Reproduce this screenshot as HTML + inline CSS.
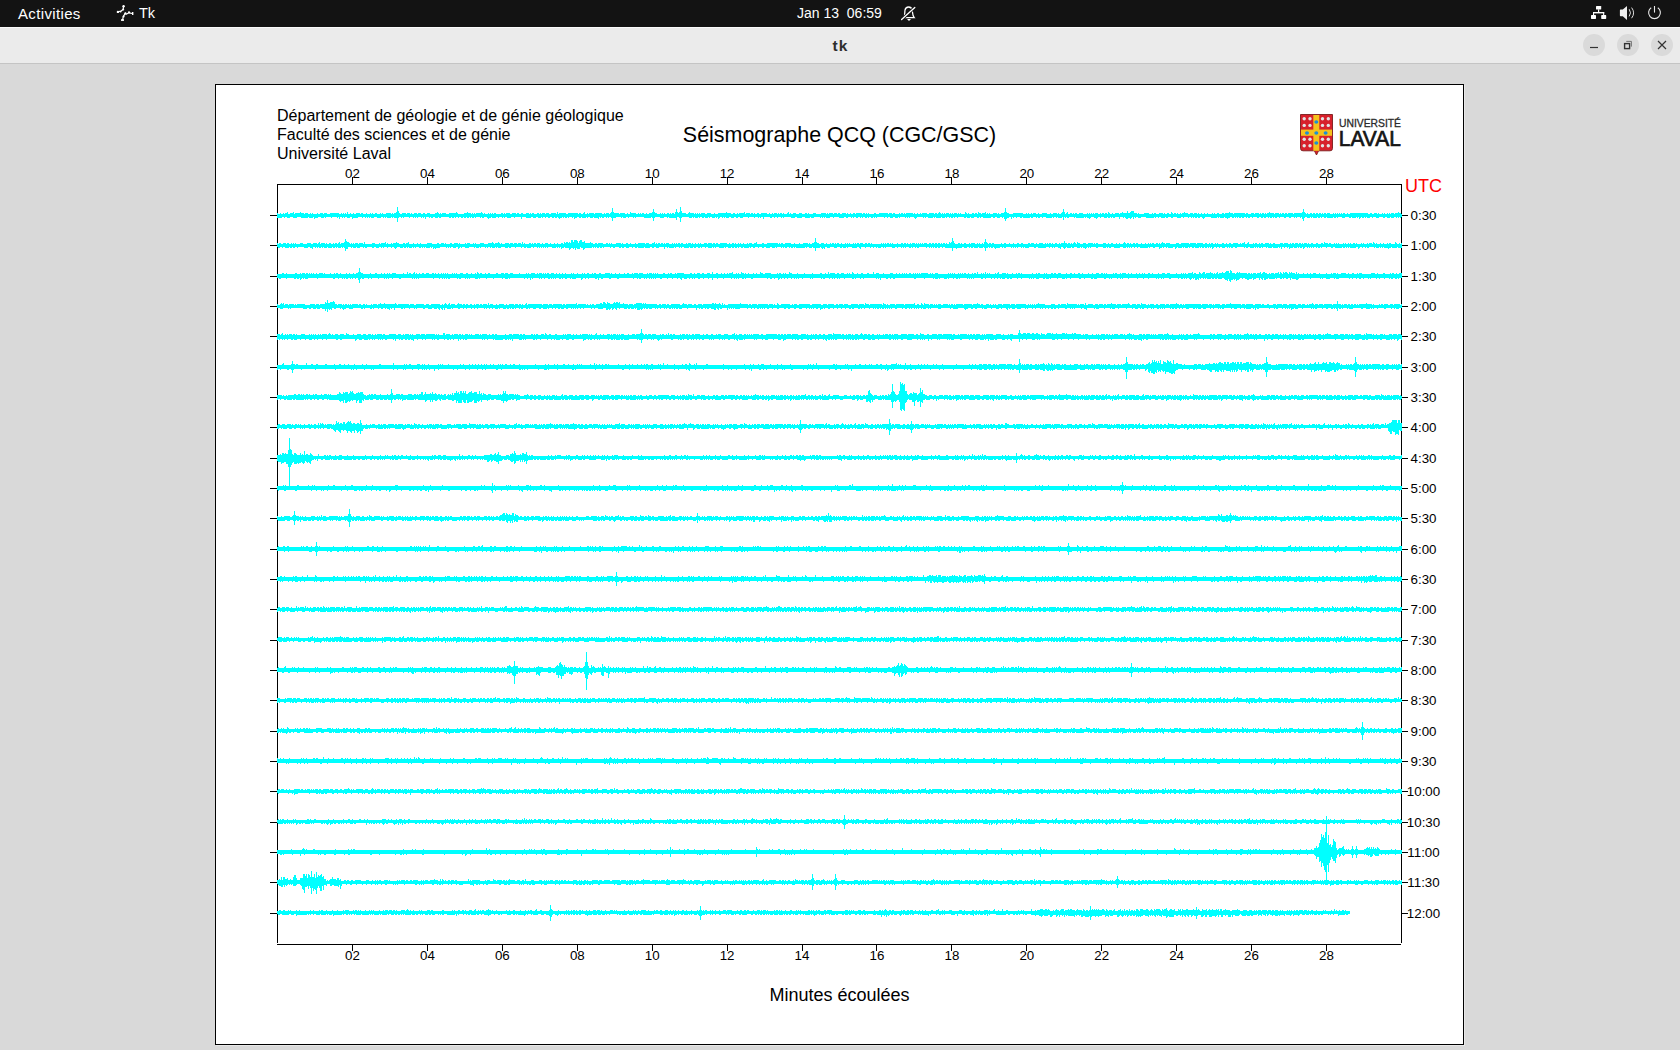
<!DOCTYPE html>
<html><head><meta charset="utf-8">
<style>
html,body{margin:0;padding:0}
body{width:1680px;height:1050px;background:#d9d9d9;overflow:hidden;position:relative;font-family:"Liberation Sans",sans-serif}
.abs{position:absolute}
#topbar{left:0;top:0;width:1680px;height:27px;background:#131313}
#hl{left:0;top:27px;width:1680px;height:1px;background:#fafafa}
#titlebar{left:0;top:28px;width:1680px;height:35px;background:#ebebeb}
#tline{left:0;top:63px;width:1680px;height:1px;background:#c4c4c4}
#tb-text{color:#fff;font-size:15px}
#canvas{left:215px;top:84px;width:1247px;height:959px;border:1px solid #000;background:#fff}
#shadow{left:216px;top:85px;width:1249px;height:961px;background:#e8e8e8}
.btn{width:22px;height:22px;border-radius:50%;background:#dadada;top:34px}
svg{position:absolute;left:0;top:0}
</style></head>
<body>
<div class="abs" id="topbar"></div>
<div class="abs" id="hl"></div>
<div class="abs" id="titlebar"></div>
<div class="abs" id="tline"></div>
<div class="abs" style="left:18px;top:5px;color:#fff;font-size:15px;letter-spacing:0.35px">Activities</div>
<div class="abs" style="left:139px;top:5px;color:#fff;font-size:14.5px">Tk</div>
<div class="abs" style="left:797px;top:5px;color:#fff;font-size:14px;letter-spacing:0px">Jan 13&nbsp;&nbsp;06:59</div>
<div class="abs" style="left:0;top:37px;width:1680px;text-align:center;color:#2e2e2e;font-size:15.5px;font-weight:bold;letter-spacing:1px;text-indent:1px">tk</div>
<div class="abs btn" style="left:1583px"></div>
<div class="abs btn" style="left:1617px"></div>
<div class="abs btn" style="left:1651px"></div>
<div class="abs" id="shadow"></div>
<div class="abs" id="canvas"></div>
<svg width="1680" height="1050" viewBox="0 0 1680 1050">
<!-- top bar icons -->
<g fill="none" stroke="#fff" stroke-width="1.3" stroke-linecap="round">
<path d="M904 17.6C905 15.5 904.6 12.5 905 10.2C905.4 8 906.8 7 908.6 7C910.4 7 911.8 8 912.2 10.2C912.6 12.5 912.4 15.5 914.2 17.6Z"/>
<path d="M901.6 19.6L914.8 7.4" stroke="#131313" stroke-width="3"/>
<path d="M901.6 19.6L914.8 7.4"/>
</g>
<path d="M907 19H911L909 21Z" fill="#fff"/>
<g fill="#fff">
<rect x="1596" y="6" width="5.2" height="3.6" rx="0.6"/>
<rect x="1591" y="15.1" width="5" height="3.8" rx="0.6"/>
<rect x="1601.2" y="15.1" width="5" height="3.8" rx="0.6"/>
<rect x="1598" y="9.4" width="1.2" height="3.6"/>
<rect x="1593" y="12" width="11.2" height="1.4"/>
<rect x="1593" y="12" width="1.1" height="3.2"/>
<rect x="1603.1" y="12" width="1.1" height="3.2"/>
<path d="M1620.5 9.6h2.3l4.2-3.6v13.9l-4.2-3.6h-2.3q-0.6 0-0.6-0.7v-5.3q0-0.7 0.6-0.7z" fill="#eee"/>
</g>
<g fill="none" stroke="#ddd" stroke-width="1">
<path d="M1629.2 9.2q2.6 3.6 0 7.2"/>
<path d="M1631.6 7.6q4 5.3 0 10.6"/>
</g>
<g fill="none" stroke="#e8e8e8" stroke-width="1.1">
<path d="M1651.2 7.8A5.9 5.9 0 1 0 1657.8 7.8"/>
<path d="M1654.5 6v6.6"/>
</g>
<g fill="none" stroke="#fff" stroke-width="1.2" stroke-linecap="round" stroke-linejoin="round">
<path d="M123.5 6L123.2 9.5L121 11L117.8 11.8"/>
<path d="M125.3 13.3L126.2 14.2L129 12.8L132.3 13.5"/>
<path d="M125.3 13.3L123.3 16.3L122.6 19.8"/>
</g>
<g fill="#fff">
<circle cx="123.6" cy="6.2" r="1.2"/><circle cx="123.2" cy="9.6" r="1"/><circle cx="117.9" cy="11.9" r="1.2"/><circle cx="120.6" cy="11.6" r="0.9"/>
<circle cx="129" cy="12.3" r="1.1"/><rect x="132" y="12" width="1.4" height="3"/><circle cx="125.4" cy="13.4" r="1.1"/><circle cx="123.6" cy="16.4" r="1"/>
<rect x="121" y="19.2" width="3" height="1.7"/>
</g>
<!-- window buttons -->
<g stroke="#333" fill="none" stroke-width="1.2">
<path d="M1590 47.5h8"/>
<rect x="1624.6" y="43.6" width="5" height="5" stroke-width="1.4"/>
<path d="M1626.3 41.4H1631.4V46.6" stroke="#666" stroke-width="0.9"/>
<path d="M1658 41l8 8M1666 41l-8 8"/>
</g>
<!-- logo -->
<g>
<path d="M1300.5 114.5H1332.5V148.5Q1332.5 150.8 1330 150.8H1318.6L1316.5 155L1314.4 150.8H1303Q1300.5 150.8 1300.5 148.5Z" fill="#d7202b" stroke="#7a1c1c" stroke-width="0.9"/>
<rect x="1313.3" y="115" width="6" height="35.8" fill="#f6c21c"/>
<rect x="1301" y="129.6" width="31" height="6.2" fill="#f6c21c"/>
<g fill="#1b8fd6"><ellipse cx="1316.3" cy="122" rx="2" ry="1.7"/><ellipse cx="1307" cy="133" rx="2" ry="1.7"/><ellipse cx="1316.3" cy="133" rx="2" ry="1.7"/><ellipse cx="1325.6" cy="133" rx="2" ry="1.7"/><ellipse cx="1316.3" cy="143" rx="2" ry="1.7"/></g>
<g fill="#e4e4e4">
<circle cx="1304.2" cy="118.7" r="1.7"/><circle cx="1310" cy="118.7" r="1.7"/><circle cx="1304.2" cy="125.4" r="1.7"/><circle cx="1310" cy="125.4" r="1.7"/>
<circle cx="1322.5" cy="118.7" r="1.7"/><circle cx="1328.3" cy="118.7" r="1.7"/><circle cx="1322.5" cy="125.4" r="1.7"/><circle cx="1328.3" cy="125.4" r="1.7"/>
<circle cx="1304.2" cy="139.2" r="1.7"/><circle cx="1310" cy="139.2" r="1.7"/><circle cx="1304.2" cy="145.8" r="1.7"/><circle cx="1310" cy="145.8" r="1.7"/>
<circle cx="1322.5" cy="139.2" r="1.7"/><circle cx="1328.3" cy="139.2" r="1.7"/><circle cx="1322.5" cy="145.8" r="1.7"/><circle cx="1328.3" cy="145.8" r="1.7"/>
</g>
<text x="1339" y="126.8" font-family="Liberation Sans" font-size="10.8" fill="#2a2a2a" stroke="#2a2a2a" stroke-width="0.3" textLength="62" lengthAdjust="spacingAndGlyphs">UNIVERSITÉ</text>
<text x="1338.8" y="145.8" font-family="Liberation Sans" font-size="22.5" fill="#151515" stroke="#151515" stroke-width="0.7" textLength="62" lengthAdjust="spacingAndGlyphs">LAVAL</text>
</g>
<g stroke="#000" stroke-width="1" fill="none" shape-rendering="crispEdges">
<path d="M277.5 184V943M1401.5 184V943M277 184.5H1402M277 944.5H1401"/>
<path d="M352.5 177V184M352.5 944V951M427.5 177V184M427.5 944V951M502.5 177V184M502.5 944V951M577.5 177V184M577.5 944V951M652.5 177V184M652.5 944V951M727.5 177V184M727.5 944V951M802.5 177V184M802.5 944V951M876.5 177V184M876.5 944V951M951.5 177V184M951.5 944V951M1026.5 177V184M1026.5 944V951M1101.5 177V184M1101.5 944V951M1176.5 177V184M1176.5 944V951M1251.5 177V184M1251.5 944V951M1326.5 177V184M1326.5 944V951M270 215.5H277M1401 215.5H1408M270 245.5H277M1401 245.5H1408M270 276.5H277M1401 276.5H1408M270 306.5H277M1401 306.5H1408M270 336.5H277M1401 336.5H1408M270 367.5H277M1401 367.5H1408M270 397.5H277M1401 397.5H1408M270 427.5H277M1401 427.5H1408M270 458.5H277M1401 458.5H1408M270 488.5H277M1401 488.5H1408M270 518.5H277M1401 518.5H1408M270 549.5H277M1401 549.5H1408M270 579.5H277M1401 579.5H1408M270 609.5H277M1401 609.5H1408M270 640.5H277M1401 640.5H1408M270 670.5H277M1401 670.5H1408M270 700.5H277M1401 700.5H1408M270 731.5H277M1401 731.5H1408M270 761.5H277M1401 761.5H1408M270 791.5H277M1401 791.5H1408M270 822.5H277M1401 822.5H1408M270 852.5H277M1401 852.5H1408M270 882.5H277M1401 882.5H1408M270 913.5H277M1401 913.5H1408"/>
</g>
<g fill="#00ffff" shape-rendering="crispEdges">
<path d="M277 213H278V214H280V213H281V214H283V213H284V214H285V213H287V212H288V214H290V213H293V212H294V214H295V213H300V212H301V213H304V214H305V213H308V214H310V213H311V214H312V213H313V214H317V213H318V214H320V213H323V214H324V213H327V214H330V213H339V214H341V213H342V214H343V213H344V214H345V213H346V214H347V212H348V214H350V213H351V214H353V213H354V214H356V213H360V214H361V213H363V214H366V213H367V214H370V213H371V214H372V213H373V214H375V213H377V214H380V213H381V214H382V213H383V214H386V213H391V214H392V213H393V214H394V213H396V212H397V207H398V211H399V213H400V214H402V213H406V214H407V213H410V214H411V213H412V214H414V213H417V214H418V213H421V214H423V213H425V214H427V213H430V214H435V213H437V212H438V213H439V214H440V213H441V214H442V213H446V214H449V213H456V212H457V213H458V214H464V213H467V212H468V213H471V214H472V213H473V214H474V213H475V214H476V213H481V212H482V213H483V214H484V213H485V214H488V213H489V214H490V213H491V214H492V213H493V214H494V213H496V214H501V213H503V214H504V213H505V214H506V213H510V214H512V213H516V214H517V213H519V214H521V213H523V214H526V213H529V214H530V213H531V214H532V213H534V214H537V213H539V214H540V213H541V214H542V213H545V214H546V213H549V214H551V213H556V214H557V212H558V214H559V213H566V214H568V213H578V214H579V213H581V214H583V213H584V212H585V214H587V213H588V214H589V213H594V214H595V213H602V214H604V213H605V214H606V213H609V214H610V213H611V212H612V208H613V212H614V213H619V214H620V213H625V214H627V213H628V214H630V212H631V213H636V214H638V213H639V214H640V213H641V214H642V213H644V214H646V213H647V214H649V213H652V212H653V209H654V212H655V213H657V214H660V213H661V214H662V213H663V214H664V213H665V214H667V213H669V214H670V213H671V214H672V213H674V214H675V212H676V209H677V212H678V213H679V212H680V207H681V211H682V213H686V214H688V213H689V212H690V213H694V214H695V213H696V214H697V213H698V214H699V213H700V214H701V213H705V214H707V213H711V214H714V213H715V214H718V213H726V212H727V213H731V214H733V213H735V214H737V213H738V214H739V213H744V212H745V214H746V213H750V214H751V213H753V214H754V213H755V214H757V213H759V214H761V213H767V214H769V213H770V214H772V213H773V214H774V213H777V214H778V213H779V214H780V213H782V214H783V213H784V214H787V213H788V212H789V214H790V213H791V214H793V213H796V214H799V213H802V214H805V213H807V214H808V213H809V214H813V213H816V214H821V213H826V214H827V213H828V214H829V213H833V214H834V213H837V214H838V213H840V214H842V213H846V214H847V213H848V214H850V213H851V214H853V213H855V214H856V213H862V214H863V213H865V214H866V213H867V214H868V213H869V214H874V213H876V214H879V213H888V214H889V213H892V214H893V213H895V214H899V213H900V214H901V213H903V214H904V213H905V214H906V213H913V214H914V213H915V214H917V213H918V214H920V213H921V214H922V213H927V214H929V213H934V214H935V213H937V214H938V213H939V212H940V213H941V214H942V213H943V214H944V213H945V214H946V213H949V214H950V213H951V214H952V213H953V214H954V213H957V214H958V213H959V214H960V213H961V214H965V212H966V213H967V214H968V213H969V214H972V213H974V214H975V213H977V214H978V212H979V213H981V214H982V213H985V212H986V214H987V213H988V214H989V213H990V214H993V213H997V214H998V213H999V214H1001V213H1004V212H1005V208H1006V212H1007V213H1009V214H1013V213H1023V214H1026V213H1027V214H1028V213H1029V214H1031V213H1032V214H1033V213H1036V214H1038V213H1039V214H1042V213H1047V214H1050V213H1051V214H1053V213H1057V214H1058V213H1059V214H1061V213H1062V212H1063V209H1064V212H1065V214H1066V213H1067V212H1068V214H1070V213H1072V214H1073V213H1074V214H1075V213H1077V214H1079V213H1083V214H1087V213H1088V214H1089V213H1090V214H1091V213H1092V214H1093V213H1094V214H1095V213H1098V214H1100V213H1101V214H1102V213H1104V214H1105V213H1107V214H1108V212H1109V213H1110V214H1112V213H1113V214H1115V213H1119V214H1120V213H1122V212H1123V213H1127V211H1128V213H1130V212H1131V211H1134V213H1137V214H1138V213H1139V214H1144V213H1149V214H1152V213H1153V214H1154V213H1156V214H1159V213H1163V214H1164V213H1165V214H1167V213H1169V214H1171V212H1172V213H1173V214H1174V213H1176V214H1177V213H1178V214H1180V213H1181V214H1182V213H1184V212H1185V213H1188V214H1190V213H1193V214H1194V213H1197V214H1198V213H1199V214H1201V213H1202V214H1204V213H1205V214H1207V213H1208V214H1212V213H1213V214H1214V213H1215V214H1217V213H1219V214H1222V213H1224V214H1225V213H1229V212H1230V213H1233V214H1234V213H1245V214H1246V213H1248V214H1251V213H1254V214H1255V213H1259V214H1260V213H1261V214H1262V213H1264V214H1265V213H1266V214H1267V213H1269V212H1270V213H1274V214H1275V213H1279V214H1280V213H1281V214H1282V213H1284V214H1285V213H1287V214H1288V213H1293V214H1294V213H1302V212H1303V209H1304V212H1305V213H1306V214H1307V213H1308V214H1310V213H1312V214H1313V213H1315V214H1316V213H1318V214H1319V213H1321V214H1322V213H1323V214H1324V213H1326V214H1327V213H1330V214H1333V213H1334V214H1335V213H1336V214H1337V213H1338V214H1339V213H1340V214H1341V213H1342V214H1343V213H1345V214H1347V213H1348V214H1350V213H1368V214H1370V213H1372V214H1374V213H1377V214H1378V213H1379V214H1382V213H1383V214H1384V213H1385V214H1387V213H1388V214H1389V213H1390V214H1391V213H1394V214H1395V213H1398V212H1399V213H1401V214H1402V217H1401V218H1400V217H1399V218H1398V217H1397V218H1396V217H1394V218H1391V217H1390V218H1387V217H1385V218H1383V217H1379V218H1376V217H1373V218H1372V217H1370V218H1367V217H1366V218H1365V217H1364V218H1362V217H1361V218H1360V219H1359V217H1358V218H1357V217H1356V218H1352V217H1351V218H1349V217H1345V218H1342V217H1338V218H1337V217H1336V218H1334V217H1333V218H1327V217H1326V218H1324V217H1322V218H1321V217H1320V218H1318V217H1317V218H1313V217H1312V218H1311V217H1310V218H1307V217H1305V218H1304V221H1303V219H1302V217H1301V218H1300V217H1297V218H1296V217H1295V218H1294V217H1291V218H1289V217H1286V218H1284V217H1280V218H1279V217H1277V218H1275V217H1274V218H1273V217H1272V218H1270V217H1269V218H1268V217H1266V218H1264V217H1263V218H1261V217H1259V218H1257V217H1253V218H1252V217H1250V218H1248V217H1247V218H1246V217H1244V218H1242V217H1241V218H1239V217H1238V218H1237V217H1236V218H1235V217H1234V218H1232V217H1230V218H1228V219H1227V218H1225V217H1224V218H1220V217H1219V218H1218V217H1217V218H1211V217H1205V218H1204V219H1203V218H1202V217H1200V218H1198V217H1197V218H1195V217H1194V218H1193V217H1192V218H1191V217H1189V218H1188V217H1184V218H1183V217H1181V218H1177V217H1173V218H1171V217H1168V218H1166V217H1165V218H1161V217H1159V218H1158V217H1156V218H1155V217H1154V218H1146V217H1141V218H1138V217H1136V218H1135V217H1134V219H1133V217H1132V218H1131V219H1130V218H1128V219H1126V218H1125V217H1124V218H1123V217H1120V219H1119V217H1115V218H1113V217H1112V218H1111V217H1110V218H1108V217H1107V218H1104V217H1101V218H1100V217H1098V218H1097V219H1096V218H1094V217H1091V218H1090V219H1089V218H1087V217H1086V218H1085V217H1084V218H1076V217H1075V218H1074V217H1069V218H1067V217H1066V218H1065V217H1064V220H1063V217H1062V218H1058V217H1057V218H1056V217H1054V218H1053V217H1052V218H1046V217H1043V218H1042V217H1040V218H1038V217H1037V218H1036V217H1033V218H1031V217H1030V218H1023V217H1022V218H1020V217H1017V218H1016V217H1014V218H1013V217H1012V219H1011V217H1009V218H1007V219H1006V221H1005V219H1004V217H1003V218H1002V217H1000V218H997V217H995V218H993V217H991V218H983V217H981V218H980V217H979V218H977V217H974V218H971V217H970V218H967V217H966V218H964V217H958V218H957V217H955V218H954V217H953V218H951V217H950V218H949V217H947V218H946V217H945V218H942V217H941V218H936V217H935V218H934V217H933V218H928V217H926V218H925V217H924V218H923V217H917V218H916V219H915V218H914V217H910V218H909V217H908V218H907V217H906V218H905V217H900V218H899V217H898V218H895V217H893V218H890V217H888V218H887V217H885V218H884V217H877V218H876V217H875V218H874V217H873V218H871V217H869V218H868V217H867V218H865V217H863V218H862V217H861V218H860V217H858V218H856V217H854V218H853V217H852V218H851V217H848V218H846V217H844V218H839V217H834V218H833V217H830V218H826V217H825V218H824V217H823V218H822V217H821V218H820V217H814V218H811V217H810V218H805V217H802V218H797V217H795V218H791V217H784V218H783V217H782V218H781V217H778V218H777V217H775V218H774V217H772V218H770V217H764V219H763V217H761V218H760V217H759V218H758V217H755V218H754V217H749V218H748V217H743V218H740V217H738V218H736V217H734V218H731V217H729V218H726V217H725V218H724V217H723V218H722V217H720V218H719V219H718V217H717V218H716V217H715V218H712V217H710V218H709V217H708V218H705V217H704V218H702V217H700V218H699V217H698V218H695V217H694V218H693V217H692V218H689V217H682V218H681V222H680V218H679V217H677V220H676V218H669V217H668V218H667V217H664V218H660V217H655V218H654V221H653V218H652V217H651V218H644V217H636V218H635V217H634V218H633V217H629V218H628V217H626V218H623V217H622V218H621V217H616V218H613V221H612V218H611V217H609V218H608V217H607V218H606V217H604V218H602V217H601V218H600V217H599V219H598V218H594V217H593V218H590V217H588V218H587V217H586V218H582V217H581V218H579V217H577V218H575V219H574V217H573V218H572V217H569V218H568V217H567V218H565V217H564V218H563V217H562V218H560V219H559V218H558V217H557V218H555V217H554V218H552V217H550V218H548V217H546V218H545V217H543V218H542V217H541V218H538V217H536V218H533V217H531V218H526V217H522V219H521V217H515V218H514V217H511V218H507V217H505V218H504V217H503V218H502V217H499V218H498V217H496V218H492V217H491V218H489V219H488V218H487V217H484V218H482V217H481V218H480V217H476V218H475V217H474V218H472V217H471V218H470V217H469V218H467V217H466V218H464V217H463V218H461V217H459V218H458V217H456V218H455V217H454V218H452V217H451V218H449V217H441V218H439V217H438V218H435V217H433V218H431V217H430V218H429V217H426V219H425V217H424V218H423V217H422V218H421V217H418V218H417V217H416V218H415V217H414V218H413V217H410V218H409V217H404V218H403V217H402V218H401V217H399V218H398V222H397V218H394V217H393V218H392V217H391V218H387V217H386V218H385V217H384V218H383V217H381V218H377V217H374V218H371V217H370V218H369V217H368V218H367V217H366V218H365V217H363V218H362V217H358V218H353V219H352V217H350V218H347V217H345V218H344V217H343V218H342V217H340V219H339V217H338V218H337V217H332V218H331V217H326V218H325V217H324V218H321V217H318V218H315V219H314V217H313V218H309V217H308V218H301V217H297V218H293V217H290V218H287V217H285V218H284V217H282V218H277Z"/>
<path d="M277 243H278V244H279V243H281V244H283V243H286V244H287V243H289V244H291V243H292V244H293V243H294V244H295V243H296V244H300V243H303V244H307V243H311V244H313V243H317V244H318V243H319V242H320V244H321V243H325V244H326V243H327V244H329V243H331V244H333V243H334V244H335V243H337V244H338V243H339V242H340V244H341V243H344V242H345V239H346V241H347V242H349V243H350V244H351V243H352V244H353V243H354V244H355V243H358V244H359V243H363V244H364V242H365V244H372V243H375V244H379V243H380V244H381V243H385V242H386V244H387V243H388V244H391V243H392V244H393V243H396V242H397V243H399V244H403V243H405V244H406V243H408V242H409V244H413V243H414V244H417V243H418V244H420V243H421V244H427V243H432V244H437V243H439V244H441V243H444V244H445V243H446V244H450V243H452V244H454V243H458V244H459V243H460V244H465V243H466V244H467V243H470V244H473V243H474V244H475V243H476V244H480V243H484V244H488V243H492V242H493V243H494V244H495V243H498V242H499V243H500V244H501V243H502V244H505V243H509V244H510V243H513V244H514V243H517V244H518V243H521V244H522V242H523V244H524V243H525V244H529V243H531V244H532V243H533V244H534V243H536V244H537V243H540V244H542V243H543V244H545V243H548V244H550V243H551V244H554V243H555V244H557V243H558V244H561V243H563V244H564V242H565V243H566V242H568V243H569V242H570V243H571V240H573V242H574V240H577V241H578V243H579V241H580V240H582V242H584V241H585V243H590V242H591V243H593V244H595V243H597V244H598V243H603V244H606V243H608V244H609V243H610V244H611V243H612V244H616V243H621V244H622V243H623V244H626V243H628V244H630V243H631V244H635V243H636V244H638V243H645V244H646V243H649V244H652V243H654V242H655V244H656V243H657V244H658V243H660V244H661V243H663V244H664V243H665V244H666V243H669V244H672V243H673V244H674V243H675V244H676V243H677V244H678V243H680V244H681V243H683V244H686V243H687V244H688V243H691V244H692V243H693V244H695V243H696V244H698V243H699V244H700V243H701V244H704V243H707V244H708V243H712V244H713V243H715V244H716V243H718V244H720V243H727V244H729V243H730V244H732V243H734V244H735V243H736V244H738V243H739V244H740V243H741V244H743V243H744V244H747V243H748V244H749V243H752V244H754V243H756V242H757V244H762V243H764V244H767V243H778V244H779V243H780V244H781V243H783V244H785V243H791V244H794V243H795V244H799V243H800V244H803V243H808V244H809V243H810V244H812V243H814V242H815V238H816V242H817V243H819V244H821V243H824V244H826V243H827V244H830V243H831V244H832V243H834V244H835V243H836V244H837V243H839V244H841V243H842V244H845V243H846V244H847V243H848V244H849V243H850V244H853V243H854V244H855V243H856V244H857V243H859V244H860V243H863V244H865V243H867V244H868V243H870V244H871V243H872V244H881V243H882V244H883V243H884V244H885V243H886V244H887V243H889V244H890V243H891V244H892V243H893V244H897V243H898V244H901V243H903V244H904V243H906V244H907V243H908V244H910V243H911V244H912V243H915V244H916V243H917V244H918V243H919V244H920V243H921V244H922V243H923V244H924V243H927V244H929V243H931V244H932V243H934V244H935V243H937V244H938V243H940V244H941V243H942V244H943V243H945V244H946V243H947V244H949V242H950V243H951V242H952V238H953V241H954V243H955V244H958V243H960V244H961V243H962V244H964V243H966V244H969V243H970V244H971V243H975V244H977V243H978V244H979V243H980V244H982V243H983V244H984V242H985V239H986V242H987V243H988V244H989V243H991V244H992V243H994V244H1001V243H1002V244H1004V243H1006V244H1009V243H1010V244H1013V243H1014V244H1017V243H1019V244H1021V243H1023V244H1028V243H1030V244H1031V243H1034V244H1036V243H1037V244H1039V243H1043V244H1045V243H1046V244H1047V243H1048V244H1049V243H1051V244H1052V243H1053V244H1055V243H1057V244H1059V243H1060V244H1061V243H1064V241H1065V243H1067V244H1068V243H1070V244H1071V243H1072V244H1073V243H1074V242H1075V243H1076V244H1077V242H1078V243H1080V244H1083V243H1086V244H1088V243H1093V244H1094V243H1095V244H1096V243H1098V244H1103V243H1106V244H1108V243H1109V244H1111V243H1113V244H1116V243H1117V244H1119V243H1120V244H1123V243H1124V242H1125V243H1126V244H1127V243H1129V244H1130V243H1131V244H1133V243H1135V244H1136V243H1138V244H1141V243H1142V244H1145V243H1146V244H1148V243H1149V244H1150V243H1151V244H1152V243H1154V244H1156V243H1158V244H1159V243H1160V244H1161V243H1162V242H1163V243H1165V244H1166V243H1170V244H1176V243H1179V244H1181V243H1189V244H1190V243H1196V244H1197V243H1203V244H1205V243H1207V244H1209V243H1210V244H1211V243H1213V244H1215V243H1216V244H1217V243H1218V244H1222V243H1224V244H1226V243H1227V244H1229V243H1231V244H1233V243H1238V244H1240V243H1241V244H1242V243H1244V242H1245V244H1247V243H1248V242H1249V244H1253V243H1254V244H1255V243H1257V244H1259V243H1260V244H1261V243H1263V244H1265V243H1269V244H1270V243H1271V244H1273V243H1275V244H1280V243H1283V244H1284V243H1288V244H1290V243H1291V244H1292V243H1294V244H1295V243H1298V244H1299V243H1301V244H1302V243H1303V244H1304V243H1307V244H1308V243H1309V244H1311V243H1313V244H1316V243H1318V244H1321V243H1323V244H1324V242H1325V243H1328V244H1329V243H1331V244H1334V243H1335V244H1336V243H1337V244H1338V243H1339V244H1343V243H1344V244H1345V243H1346V244H1348V243H1349V244H1350V243H1351V244H1353V243H1355V244H1356V243H1357V244H1361V243H1362V244H1363V243H1364V244H1367V243H1368V244H1369V243H1372V244H1373V242H1374V243H1375V244H1376V243H1377V244H1380V243H1381V244H1383V243H1384V244H1387V243H1388V244H1389V243H1391V244H1395V242H1396V243H1397V244H1399V243H1400V244H1401V243H1402V248H1398V247H1397V248H1392V247H1391V248H1389V249H1388V248H1384V247H1383V248H1382V247H1381V248H1380V247H1379V248H1376V247H1375V248H1374V247H1369V248H1367V247H1366V248H1365V247H1363V248H1362V247H1360V248H1359V249H1358V247H1356V248H1350V247H1349V248H1348V247H1347V248H1346V247H1345V248H1343V247H1342V248H1335V247H1333V248H1331V247H1327V248H1326V247H1322V248H1321V247H1320V248H1318V247H1317V248H1316V247H1314V248H1313V247H1312V248H1311V247H1310V248H1309V247H1308V248H1307V247H1305V248H1304V249H1303V247H1302V248H1300V247H1299V248H1298V247H1297V248H1294V247H1293V248H1290V249H1289V247H1288V248H1287V247H1285V248H1284V247H1282V249H1281V247H1280V248H1279V247H1278V248H1273V247H1272V248H1268V247H1267V248H1266V247H1263V248H1262V247H1261V248H1259V247H1258V248H1257V247H1256V248H1255V247H1254V248H1250V247H1248V248H1246V247H1245V248H1244V247H1237V248H1235V247H1233V248H1231V247H1230V248H1229V247H1228V248H1227V247H1225V248H1222V247H1220V248H1219V247H1217V248H1216V247H1214V248H1213V249H1212V247H1211V248H1210V247H1209V248H1208V247H1207V248H1205V247H1204V248H1202V247H1201V248H1200V247H1199V248H1195V247H1194V248H1192V247H1190V248H1189V247H1188V248H1185V247H1184V248H1183V247H1182V248H1178V247H1177V248H1176V249H1175V247H1173V248H1168V247H1167V248H1166V247H1164V248H1163V247H1162V248H1160V249H1159V247H1155V248H1153V247H1150V248H1149V247H1148V248H1140V247H1138V248H1137V247H1135V248H1134V247H1132V248H1131V247H1130V248H1129V247H1128V248H1127V247H1126V248H1123V247H1120V248H1114V247H1111V248H1109V247H1108V248H1107V247H1106V248H1103V247H1098V248H1096V247H1091V248H1090V247H1089V248H1088V247H1087V248H1086V249H1085V248H1083V247H1082V248H1081V247H1080V248H1077V247H1074V248H1072V247H1071V248H1067V247H1066V248H1065V249H1064V248H1063V247H1061V249H1060V248H1058V247H1055V248H1054V247H1053V248H1052V247H1050V248H1049V247H1046V248H1038V247H1036V248H1034V247H1029V248H1025V247H1024V248H1023V247H1022V248H1021V247H1018V248H1017V247H1016V248H1015V247H1014V248H1013V247H1012V248H1011V247H1006V248H1004V247H1003V248H1002V247H1000V248H996V249H995V248H994V247H993V248H991V247H990V248H989V247H988V248H986V251H985V248H984V247H983V248H979V247H978V248H974V247H973V248H971V247H970V248H969V247H967V248H964V247H962V248H957V249H956V248H953V251H952V248H945V247H943V248H942V247H940V248H938V247H937V248H935V247H934V248H933V247H932V248H931V247H930V248H929V247H927V248H926V247H919V248H917V247H916V248H915V247H913V248H912V247H911V248H909V247H906V248H905V247H904V248H903V247H902V248H901V247H898V248H897V247H895V248H892V247H886V248H885V247H884V248H883V247H881V248H878V247H877V248H876V247H874V248H873V247H871V248H870V247H866V248H865V247H861V249H860V248H859V247H857V248H852V247H848V248H847V247H846V248H843V247H842V248H840V247H837V248H834V247H830V248H827V247H825V249H824V248H823V249H822V248H821V247H820V248H816V251H815V248H813V247H812V248H809V247H807V248H806V247H805V248H796V247H795V248H794V247H793V248H791V247H790V248H789V247H787V248H785V247H784V248H783V247H782V248H781V247H777V248H776V247H775V248H772V247H770V248H766V247H764V248H762V247H759V248H758V247H755V248H753V247H751V248H750V247H749V248H744V247H743V248H741V247H739V248H738V247H737V248H735V247H734V248H732V247H731V248H728V247H726V248H725V247H724V248H719V247H716V248H715V247H714V248H713V247H712V248H708V247H706V248H705V247H702V248H701V247H700V248H698V247H696V248H694V247H693V248H690V247H689V248H684V247H682V248H681V247H680V248H679V247H676V248H675V247H674V248H669V247H668V248H667V247H665V249H664V247H659V248H656V247H654V248H652V247H650V248H645V247H644V248H638V247H637V248H635V247H633V248H632V247H629V248H626V247H624V248H622V247H621V248H619V247H615V248H613V247H611V248H610V247H604V248H603V247H602V248H600V247H599V248H597V247H596V248H595V247H594V248H593V247H592V248H585V249H584V250H583V248H581V247H580V249H577V248H576V250H575V248H574V249H573V248H571V249H570V250H569V248H565V247H564V248H562V249H561V247H560V248H559V247H558V248H557V247H556V248H552V247H548V248H547V247H546V248H545V247H544V248H543V247H542V248H541V247H540V248H539V247H538V248H537V247H534V248H533V247H531V248H527V247H526V248H524V247H522V248H521V247H516V248H515V247H511V248H509V247H508V248H505V247H501V248H498V247H497V248H496V247H495V248H492V247H491V248H490V247H488V248H487V247H486V248H485V247H481V248H480V247H479V248H476V247H475V248H474V247H469V248H465V247H462V248H461V247H460V248H459V249H458V247H456V248H453V247H451V248H450V247H449V248H448V247H447V248H446V247H440V248H436V249H435V248H434V249H433V247H432V248H431V247H430V248H426V247H425V248H424V247H423V248H422V247H421V248H419V247H416V248H415V247H414V248H413V247H412V248H409V247H408V248H407V247H406V248H404V247H403V248H400V247H397V248H396V249H395V248H394V247H392V248H391V247H388V248H387V247H384V248H383V247H382V248H381V247H379V248H376V247H374V248H372V247H367V248H365V247H364V248H363V247H360V248H357V247H356V248H353V247H352V248H351V247H348V249H346V251H345V248H344V247H343V248H342V247H341V248H338V247H337V248H336V247H335V248H333V247H332V248H328V247H327V248H324V247H323V248H322V247H321V248H319V247H318V248H317V247H316V248H315V247H313V249H312V248H310V247H308V248H304V247H298V248H297V247H295V248H293V247H292V248H290V247H289V248H285V247H283V248H282V247H280V248H278V247H277Z"/>
<path d="M277 274H282V273H284V274H286V273H287V274H295V273H297V274H300V273H301V274H302V273H305V274H306V273H308V274H309V273H310V274H311V273H312V274H313V273H314V274H316V273H317V274H319V273H323V274H324V273H325V274H330V273H331V274H334V273H335V274H336V273H338V274H340V273H341V274H346V273H347V274H349V273H350V274H353V273H354V274H356V273H358V272H359V268H360V272H361V273H363V274H370V273H371V274H375V273H377V274H381V273H382V274H384V273H385V274H387V273H388V274H389V273H390V274H392V273H396V274H403V273H404V274H407V272H408V274H409V273H411V274H413V273H414V272H415V274H416V273H417V274H419V273H420V274H422V273H424V274H426V273H429V274H432V273H434V274H435V273H436V274H438V273H439V274H441V273H442V274H443V273H444V274H445V273H446V274H447V273H448V274H452V273H453V274H454V273H455V274H456V273H457V274H460V273H463V274H466V273H468V274H471V273H472V274H475V273H476V274H477V272H478V273H479V274H480V273H482V274H485V273H486V274H488V273H490V274H496V273H498V274H501V273H504V274H505V273H508V274H510V273H513V274H519V273H520V274H526V273H527V274H528V273H529V274H531V273H535V274H537V273H538V274H539V273H542V274H543V273H544V274H545V273H546V274H547V273H549V274H551V273H554V274H556V273H557V274H559V273H560V274H562V273H563V274H565V273H566V274H571V273H572V274H573V273H574V274H577V273H578V274H582V273H583V274H584V273H585V274H587V273H589V274H592V273H593V274H594V273H596V274H599V273H601V274H605V273H610V274H611V273H612V274H615V273H616V274H619V273H620V274H624V273H625V274H627V273H629V274H632V273H633V274H634V273H638V274H639V273H643V274H647V273H648V274H649V273H652V274H653V273H654V274H655V273H656V274H657V273H658V274H663V273H665V274H668V273H669V274H670V273H672V274H675V273H676V274H677V273H684V274H690V273H692V274H694V273H695V274H697V273H700V274H702V273H704V274H707V273H710V274H712V272H713V274H716V273H718V274H721V273H722V274H724V273H725V274H727V273H728V274H729V273H732V272H733V274H736V273H737V274H738V273H739V274H741V272H742V273H744V274H745V273H746V274H748V273H749V274H753V273H754V274H756V273H757V274H760V272H761V273H763V274H765V273H771V274H777V273H778V274H779V273H781V274H783V273H784V274H785V273H786V274H789V272H790V273H792V274H797V273H798V274H804V273H805V274H812V273H813V274H820V273H822V274H825V273H826V274H828V272H829V274H830V273H835V274H837V273H839V274H841V273H844V274H847V273H848V274H849V273H850V274H852V272H853V273H854V274H857V273H858V274H861V273H863V274H867V273H869V274H873V272H874V274H876V273H879V274H883V273H884V274H890V273H893V274H896V273H897V274H899V273H900V274H902V273H903V274H904V273H905V274H906V273H907V274H909V273H911V274H913V273H914V274H915V273H916V274H917V273H918V274H919V273H920V274H921V273H928V274H930V273H931V274H932V273H933V274H935V273H938V274H948V273H949V274H950V273H951V274H952V273H953V274H954V273H955V274H958V273H959V274H960V273H961V274H962V273H963V274H964V273H966V274H968V273H969V274H972V273H973V274H974V273H976V274H977V272H978V274H981V273H982V274H983V273H984V274H985V272H986V274H987V273H988V274H989V273H990V274H995V273H996V274H997V273H998V272H999V274H1002V273H1006V274H1007V273H1008V274H1012V273H1013V274H1016V273H1017V274H1018V273H1020V274H1021V273H1022V274H1032V273H1033V274H1036V273H1037V274H1038V273H1040V274H1044V273H1045V274H1046V273H1047V274H1051V273H1053V274H1054V273H1056V274H1058V273H1061V274H1066V273H1067V274H1070V273H1072V274H1074V273H1075V274H1078V273H1080V274H1082V273H1083V274H1088V273H1089V274H1092V273H1093V274H1096V273H1099V274H1101V273H1103V274H1104V273H1105V274H1106V273H1107V274H1113V273H1114V274H1115V273H1117V274H1120V273H1121V274H1122V273H1126V274H1128V273H1129V274H1131V273H1132V274H1136V273H1137V274H1139V273H1140V274H1142V273H1143V274H1144V273H1145V274H1148V273H1150V274H1152V273H1153V274H1158V273H1159V274H1162V273H1165V274H1167V273H1170V274H1176V273H1177V274H1181V273H1182V274H1183V273H1184V274H1185V273H1186V274H1188V273H1192V272H1193V274H1194V273H1196V274H1199V272H1200V273H1201V274H1202V273H1203V272H1205V274H1206V273H1210V272H1211V273H1213V274H1214V273H1215V274H1216V273H1217V272H1218V274H1219V273H1222V272H1223V273H1225V272H1226V271H1229V273H1230V270H1231V271H1232V273H1235V274H1236V273H1237V272H1238V273H1239V272H1240V273H1247V274H1248V273H1250V274H1251V273H1252V274H1253V273H1256V274H1257V273H1260V272H1261V274H1262V273H1263V272H1265V273H1267V274H1269V273H1270V274H1271V273H1274V274H1275V273H1278V272H1279V274H1280V272H1281V273H1282V274H1283V272H1284V273H1285V272H1287V273H1288V274H1289V272H1290V273H1291V272H1292V273H1295V274H1296V272H1297V274H1298V273H1299V274H1303V273H1304V274H1307V273H1308V274H1310V273H1311V274H1313V273H1316V274H1319V273H1320V274H1326V273H1327V274H1331V273H1332V274H1333V273H1336V274H1337V273H1338V274H1341V273H1346V274H1348V273H1349V274H1352V273H1354V274H1357V273H1358V274H1359V273H1362V274H1371V273H1375V274H1377V273H1378V274H1383V273H1385V274H1390V273H1391V274H1392V273H1394V274H1396V273H1397V274H1399V273H1402V278H1399V279H1398V278H1397V279H1395V278H1393V279H1391V278H1390V279H1389V278H1385V279H1384V278H1380V279H1379V278H1377V279H1376V278H1371V279H1370V278H1369V279H1368V278H1364V279H1363V278H1361V279H1359V278H1357V279H1356V278H1353V279H1352V278H1350V279H1349V278H1339V279H1336V278H1335V279H1334V278H1330V279H1326V278H1323V279H1322V278H1321V279H1320V278H1311V279H1310V278H1299V279H1298V280H1296V279H1292V278H1291V280H1290V278H1288V279H1286V278H1284V279H1283V278H1282V279H1280V278H1277V279H1276V278H1275V279H1269V278H1268V279H1266V280H1264V278H1263V280H1262V279H1261V278H1260V280H1259V278H1256V279H1254V280H1253V278H1252V279H1249V280H1247V279H1245V278H1243V279H1242V278H1240V279H1239V280H1237V281H1236V279H1235V280H1234V279H1233V280H1231V282H1230V281H1229V279H1228V281H1227V280H1225V279H1224V278H1222V279H1218V278H1217V279H1215V278H1214V279H1212V278H1211V279H1207V278H1206V279H1205V278H1204V279H1203V278H1201V279H1200V278H1199V280H1198V279H1197V280H1195V278H1194V279H1193V278H1192V279H1191V280H1190V279H1189V278H1187V279H1186V278H1185V279H1184V278H1183V279H1181V278H1179V279H1178V278H1171V279H1169V278H1164V279H1163V278H1162V279H1161V278H1159V279H1158V278H1157V279H1156V278H1149V279H1148V278H1144V279H1143V278H1138V279H1137V278H1129V279H1128V278H1123V279H1122V278H1121V279H1120V278H1118V279H1117V278H1112V279H1111V278H1110V279H1109V278H1106V279H1104V278H1097V279H1094V278H1093V279H1091V278H1085V279H1084V278H1081V279H1079V278H1071V279H1070V278H1067V279H1066V278H1065V279H1062V278H1058V279H1057V278H1051V279H1050V278H1049V279H1046V278H1045V279H1043V278H1039V279H1036V278H1034V279H1033V278H1032V279H1031V278H1030V279H1029V278H1022V279H1021V278H1018V279H1017V278H1012V279H1010V278H1009V279H1007V278H1005V279H1002V278H1001V279H1000V278H998V279H997V278H995V279H994V278H992V279H991V278H986V279H985V278H983V279H981V278H974V279H973V278H972V279H971V278H970V279H969V278H968V279H967V278H960V279H959V278H958V279H956V278H954V279H953V278H949V279H948V278H947V279H944V278H940V279H939V278H938V279H935V278H934V279H933V278H925V279H924V278H916V279H914V278H895V279H893V278H891V279H890V278H888V279H886V278H881V280H880V278H879V279H878V278H877V279H876V278H864V279H863V278H861V279H860V278H856V279H855V278H854V279H852V278H845V279H844V278H840V279H839V278H838V279H837V278H835V279H834V278H833V279H832V278H830V279H829V278H825V279H823V278H822V279H821V278H813V279H812V278H811V279H810V278H803V279H802V278H799V279H798V278H797V279H796V278H795V279H794V278H792V279H791V278H788V279H787V278H785V279H784V278H782V279H781V278H780V279H779V280H778V278H775V279H774V278H772V279H770V278H768V279H767V278H753V279H751V278H746V279H745V278H744V279H742V278H739V279H738V278H737V279H736V278H735V279H734V278H732V279H731V278H724V279H723V278H718V279H717V278H713V280H712V278H709V279H708V278H704V279H703V278H700V279H698V278H695V279H694V278H693V279H692V278H690V279H689V278H687V279H684V278H682V280H681V279H680V278H678V279H677V278H673V279H672V278H668V279H667V278H662V279H660V278H656V279H655V278H654V279H653V278H652V279H651V278H650V279H649V278H647V279H646V278H645V279H644V278H641V279H639V278H638V279H637V278H634V279H633V278H619V279H617V278H611V279H609V278H603V279H601V278H599V280H598V278H597V279H595V278H589V279H588V278H586V279H585V278H583V279H582V280H581V278H576V279H572V278H571V279H570V278H567V279H565V278H563V279H562V278H561V279H559V278H556V279H555V278H554V279H553V278H552V279H551V278H550V279H548V278H545V279H544V278H542V279H541V278H540V279H539V278H533V279H532V278H531V280H530V278H528V279H527V278H525V279H524V278H510V279H509V278H508V279H505V278H503V279H502V278H494V279H493V278H487V279H486V278H480V279H479V278H478V279H475V278H470V279H469V278H468V279H467V278H466V279H465V278H461V279H459V278H458V279H457V278H450V279H448V278H447V279H446V278H445V279H444V278H443V279H442V278H440V279H439V278H434V279H433V278H419V279H418V278H417V279H416V278H415V279H414V278H413V279H412V278H401V279H399V278H393V279H392V278H389V279H388V278H387V279H386V278H385V279H384V278H379V279H378V278H372V279H371V278H369V279H368V278H364V279H362V278H361V279H360V283H359V280H358V278H356V279H355V278H353V279H352V278H351V279H350V278H348V279H346V278H345V279H344V278H343V279H342V278H339V279H338V278H335V279H333V278H318V279H317V278H308V279H305V278H304V279H303V278H302V279H301V280H300V278H299V279H297V278H296V279H294V278H287V279H286V278H281V279H279V278H277Z"/>
<path d="M277 304H278V305H280V304H281V303H282V304H283V303H284V305H285V304H288V305H289V304H294V305H295V304H296V305H297V304H305V305H310V304H315V305H316V304H319V305H320V304H325V302H326V303H327V300H328V303H330V302H333V301H334V302H335V304H337V305H338V304H342V305H343V304H344V305H345V304H347V305H348V304H349V305H350V304H351V305H352V304H358V305H359V304H361V305H363V304H365V305H366V304H367V305H371V304H372V305H373V304H377V305H378V304H380V303H381V304H384V303H385V304H395V303H396V304H397V305H398V304H409V305H410V304H414V305H416V304H424V305H426V304H429V305H431V304H440V305H442V304H443V305H444V304H445V303H446V304H447V305H448V304H449V303H450V305H451V304H455V305H457V304H458V303H459V304H462V305H463V304H465V305H466V304H468V305H470V304H472V305H474V304H475V305H476V304H479V305H480V304H482V305H483V304H487V305H488V303H489V305H490V304H493V305H496V304H497V305H499V304H504V305H506V304H507V305H509V304H514V305H515V304H518V305H519V304H521V305H522V304H523V305H525V304H526V303H527V305H528V304H542V305H543V304H548V305H549V304H552V305H553V304H562V305H563V304H565V305H566V304H576V303H577V305H578V304H586V305H587V304H588V305H590V304H591V305H592V304H594V305H596V304H600V303H602V304H603V302H605V303H606V304H607V302H608V303H610V304H613V303H614V302H615V303H616V302H618V303H619V302H620V304H623V303H624V304H628V305H629V304H633V305H634V304H636V303H642V304H643V303H644V304H645V303H646V304H657V305H659V304H661V305H662V304H666V305H667V304H669V305H671V304H680V305H682V304H683V303H684V304H687V305H688V304H692V305H694V304H696V305H698V304H702V305H703V304H712V303H714V304H715V303H716V304H719V303H720V304H721V305H722V303H723V305H724V304H725V305H728V304H740V303H741V304H748V305H749V304H751V305H752V304H757V305H758V304H768V305H769V304H773V305H774V304H775V305H777V303H778V304H779V305H781V304H790V305H792V304H793V305H794V304H797V305H799V304H810V305H812V304H821V305H823V304H827V305H828V304H834V305H836V304H838V305H839V304H843V305H844V304H848V305H851V304H858V305H859V304H864V305H865V303H866V304H869V305H870V304H882V305H883V303H884V304H886V305H887V304H888V305H890V304H895V305H896V304H904V305H905V304H914V303H915V305H917V304H919V305H921V303H922V304H923V305H924V303H925V304H929V305H930V304H933V305H934V304H935V305H936V304H937V305H938V304H941V305H943V304H948V305H949V304H950V305H951V304H953V305H954V304H955V305H956V304H963V305H964V304H972V305H973V304H977V303H978V304H980V305H981V304H983V305H986V304H989V305H990V304H991V305H993V304H994V305H995V304H996V305H998V304H1002V305H1003V304H1010V305H1011V304H1015V305H1016V304H1026V305H1028V304H1029V305H1030V304H1031V305H1032V304H1033V305H1034V304H1035V305H1036V304H1038V303H1039V304H1045V305H1051V304H1055V305H1058V304H1060V305H1061V304H1066V305H1067V303H1068V304H1077V305H1078V304H1079V305H1080V304H1084V305H1085V303H1086V305H1088V304H1093V305H1095V304H1098V305H1099V304H1103V305H1104V304H1106V305H1107V304H1111V303H1112V304H1116V305H1117V304H1121V305H1122V304H1128V303H1129V304H1130V305H1132V304H1136V305H1137V304H1140V305H1141V303H1142V304H1146V305H1148V304H1149V305H1150V304H1154V305H1156V304H1158V305H1160V304H1165V305H1166V304H1169V305H1170V304H1176V303H1177V304H1179V305H1180V304H1182V305H1183V304H1184V305H1185V304H1201V305H1202V304H1208V305H1209V304H1212V305H1213V304H1214V305H1215V304H1220V305H1222V304H1225V305H1226V304H1230V303H1231V304H1241V305H1242V304H1245V305H1246V304H1253V305H1255V304H1261V305H1262V304H1264V305H1267V304H1269V305H1273V304H1276V305H1277V304H1282V305H1283V304H1287V305H1289V304H1296V305H1298V304H1301V305H1302V304H1305V305H1307V304H1308V305H1309V304H1312V303H1313V304H1314V305H1315V304H1318V305H1319V304H1323V305H1324V304H1332V305H1333V304H1337V301H1338V304H1341V305H1342V304H1343V305H1344V304H1347V305H1348V304H1350V305H1351V304H1353V305H1354V304H1356V305H1357V304H1358V305H1359V304H1366V303H1367V304H1372V305H1373V304H1374V305H1379V304H1380V305H1381V304H1383V305H1384V304H1388V305H1390V304H1393V305H1394V304H1400V305H1401V304H1402V308H1399V309H1396V308H1395V309H1394V308H1392V309H1391V308H1386V309H1384V308H1378V309H1377V308H1374V309H1373V308H1372V309H1371V308H1370V309H1366V308H1363V309H1361V308H1353V309H1349V308H1348V309H1347V308H1343V309H1342V308H1341V309H1339V308H1338V311H1337V309H1336V308H1335V309H1334V308H1333V309H1331V308H1328V309H1326V308H1323V309H1322V308H1317V309H1315V308H1314V309H1313V308H1312V309H1311V308H1303V309H1302V308H1298V309H1295V308H1294V309H1292V310H1291V308H1290V309H1289V308H1288V309H1287V308H1286V309H1285V308H1283V309H1282V308H1278V309H1276V308H1275V309H1274V308H1270V309H1269V308H1259V309H1257V308H1256V310H1255V308H1254V309H1253V308H1251V309H1246V308H1245V309H1244V308H1241V309H1240V308H1237V309H1234V308H1232V309H1231V308H1224V309H1222V308H1221V309H1220V308H1219V309H1218V308H1214V309H1213V308H1211V309H1210V308H1206V309H1203V308H1201V309H1198V308H1197V309H1196V308H1195V309H1193V308H1189V309H1186V308H1183V309H1182V308H1180V309H1179V308H1177V309H1175V308H1174V309H1172V308H1171V309H1170V308H1165V309H1164V308H1163V309H1162V308H1161V309H1160V308H1159V309H1157V308H1154V309H1153V308H1152V309H1151V308H1148V309H1147V308H1144V309H1142V308H1141V309H1140V308H1138V309H1135V308H1133V309H1132V308H1127V309H1126V308H1119V309H1118V308H1115V309H1112V308H1111V309H1110V308H1105V309H1104V308H1099V309H1096V308H1095V309H1094V308H1087V310H1086V309H1084V308H1082V309H1081V308H1075V309H1074V308H1073V309H1072V308H1071V309H1070V308H1067V309H1065V308H1059V309H1058V308H1056V309H1054V308H1053V309H1051V308H1049V309H1048V308H1046V309H1045V308H1043V309H1042V308H1041V309H1040V308H1036V309H1035V308H1033V309H1032V308H1028V309H1027V308H1026V309H1025V308H1021V309H1017V308H1015V309H1012V308H1010V309H1009V308H1008V310H1007V309H1006V308H1002V309H1001V308H999V309H996V308H992V309H991V308H987V309H984V308H983V309H982V308H977V309H975V308H973V309H971V308H968V309H966V310H965V309H964V308H958V309H953V308H951V309H950V308H941V309H938V308H931V309H930V308H929V309H928V308H926V309H923V308H922V309H921V308H919V309H918V308H917V309H916V308H915V309H914V308H912V309H911V308H910V309H909V308H907V309H905V308H903V309H902V308H897V309H895V308H892V309H891V308H890V309H889V308H888V309H887V308H886V309H885V308H884V309H882V308H881V309H880V308H879V309H877V308H876V309H875V308H874V309H873V308H870V309H869V308H865V309H864V308H862V309H861V308H860V309H858V308H854V309H852V308H851V309H849V308H846V309H845V308H842V309H841V308H838V309H837V308H834V309H833V308H830V309H828V308H825V309H824V308H823V309H821V310H820V308H818V309H816V308H814V309H813V308H812V309H811V308H810V309H809V308H807V309H806V308H802V309H799V308H796V309H794V308H790V309H788V308H786V309H784V308H779V309H777V308H773V309H772V308H769V309H767V308H765V309H764V308H763V309H762V308H761V309H760V308H759V309H757V308H755V309H754V308H752V309H751V308H748V309H747V308H740V309H735V308H734V309H733V308H732V309H731V308H730V309H729V308H728V310H727V308H722V309H720V308H719V310H718V309H717V308H716V310H714V309H711V308H709V309H707V308H706V309H705V308H703V309H701V308H700V309H699V308H697V310H696V308H688V309H687V308H682V309H679V308H678V309H676V308H675V309H674V308H673V309H672V308H671V309H669V308H667V309H666V308H665V309H664V308H661V309H660V308H658V309H657V308H656V309H655V308H652V309H649V308H648V309H646V308H645V309H644V308H643V309H642V310H641V309H640V310H637V308H636V309H635V308H634V309H631V308H630V309H628V308H627V309H624V308H620V309H619V308H617V310H616V309H615V308H614V309H613V310H612V308H611V309H610V310H609V309H608V310H606V308H603V309H598V308H595V309H594V308H592V309H591V308H584V309H583V308H581V309H580V308H578V309H577V308H576V309H575V308H574V309H573V308H572V309H571V308H568V309H566V308H564V309H561V308H560V309H558V308H556V309H555V308H553V309H552V308H549V309H548V308H547V309H543V308H541V309H539V308H536V309H533V308H530V309H529V308H528V309H526V308H523V309H521V308H520V309H519V308H516V309H515V308H514V309H512V308H511V309H510V308H509V309H507V308H506V309H503V308H500V309H499V308H498V309H495V308H493V309H492V308H490V309H489V308H487V309H486V308H485V309H484V308H478V309H477V308H475V309H474V308H472V309H471V308H467V309H466V308H464V309H463V308H460V309H458V308H453V309H452V308H451V309H447V308H445V310H444V308H443V310H442V309H441V308H440V310H439V309H438V308H437V309H434V308H432V309H428V308H425V309H423V308H417V309H416V308H415V309H414V308H410V309H409V308H405V309H404V308H403V309H401V308H395V310H394V308H392V309H391V308H390V310H389V309H387V308H386V309H385V308H383V309H381V308H379V309H378V308H374V309H373V308H372V309H370V308H365V309H364V308H363V309H361V308H353V309H349V308H346V309H344V310H343V309H342V308H341V309H340V308H336V309H334V308H332V310H331V309H330V310H329V309H328V312H327V309H326V311H325V309H322V308H320V309H317V308H316V309H313V308H311V309H309V308H307V309H303V308H291V309H290V308H289V309H288V308H283V309H280V308H277Z"/>
<path d="M277 334H280V335H281V334H282V333H283V335H285V334H286V335H287V334H288V335H289V334H292V335H293V334H295V335H296V334H297V335H301V334H305V335H309V334H310V335H311V334H312V335H313V334H314V335H315V334H316V335H318V334H319V335H320V334H321V335H322V334H327V335H328V334H329V333H330V334H331V335H332V334H333V335H335V334H338V335H340V334H344V335H346V333H347V334H349V335H353V334H354V335H357V334H361V335H363V334H366V335H368V334H371V335H372V334H373V335H375V334H376V335H377V334H382V335H383V334H385V335H389V334H396V335H398V334H401V335H403V334H404V335H405V334H409V335H410V334H411V335H412V334H413V335H416V334H420V335H421V334H425V335H426V334H435V335H436V334H437V335H438V334H439V335H443V333H445V335H446V334H450V335H452V334H453V335H454V334H458V335H459V334H461V335H462V334H463V335H465V334H468V335H469V334H470V335H471V334H472V335H475V334H479V335H480V334H481V335H482V334H487V335H489V334H490V335H492V334H494V335H495V334H497V335H505V334H506V335H509V334H512V335H513V334H519V335H520V334H522V335H523V334H525V335H531V334H533V335H534V334H535V335H536V334H538V335H541V334H544V335H545V333H546V334H547V335H549V334H551V335H555V334H557V335H563V334H564V335H565V334H566V335H567V334H571V335H573V334H574V335H576V334H577V335H580V334H581V335H582V334H588V335H589V334H590V335H591V334H592V335H595V334H596V333H597V335H600V334H601V335H603V334H604V335H607V334H610V335H611V334H612V335H613V334H616V335H617V334H618V335H619V334H620V335H621V334H624V335H628V334H629V335H632V334H635V335H636V334H640V333H641V329H642V333H643V334H644V335H645V334H647V335H648V334H651V335H652V334H656V335H660V334H661V335H662V334H664V335H666V334H667V335H668V333H669V335H670V334H672V335H673V334H675V335H680V334H681V335H682V334H685V335H686V334H688V335H689V334H690V335H692V334H694V335H695V334H700V335H703V334H704V335H706V334H708V335H711V334H713V335H716V334H717V335H718V334H721V335H724V334H728V335H732V334H734V333H735V335H736V334H737V335H739V334H742V335H744V334H746V335H747V334H748V335H749V334H750V335H751V334H752V335H753V334H759V335H761V334H763V335H766V334H777V335H778V334H780V335H781V334H783V335H784V334H786V335H787V334H791V335H792V334H798V335H801V334H806V335H807V334H808V335H811V334H812V335H813V334H814V335H815V334H817V335H819V334H821V335H823V334H825V335H828V334H832V335H833V333H834V334H841V335H842V334H844V335H846V334H847V335H848V334H851V335H852V334H853V335H855V334H858V335H860V334H861V333H862V334H863V335H864V334H867V335H868V334H870V335H872V334H874V335H877V334H878V335H879V334H880V335H883V334H884V335H885V334H888V335H889V334H891V335H892V334H893V335H894V334H898V335H901V334H907V335H908V334H914V335H916V334H918V335H920V333H921V334H924V335H927V334H929V335H932V334H937V335H938V334H942V335H943V334H952V335H953V334H955V335H958V334H959V335H960V334H967V335H968V334H969V335H970V334H972V335H973V334H975V335H976V334H980V335H982V334H983V335H984V334H985V335H986V334H993V335H996V334H1001V335H1003V334H1004V335H1008V334H1009V335H1010V334H1013V335H1018V333H1019V330H1020V333H1021V334H1023V333H1026V334H1027V333H1030V334H1032V333H1034V334H1036V333H1038V334H1040V335H1041V333H1042V334H1045V335H1046V334H1047V333H1051V334H1052V333H1053V334H1056V333H1057V334H1062V333H1065V334H1066V333H1067V334H1072V333H1073V334H1074V333H1076V334H1081V335H1083V334H1084V335H1085V334H1088V335H1092V334H1093V335H1096V334H1097V335H1098V334H1099V335H1101V334H1105V335H1106V334H1108V335H1109V334H1110V335H1112V334H1113V335H1114V334H1118V335H1120V334H1123V335H1124V334H1125V335H1127V334H1129V333H1130V334H1132V335H1133V334H1134V335H1139V334H1142V335H1143V334H1145V335H1146V334H1150V335H1151V334H1152V335H1153V334H1154V335H1155V334H1156V335H1158V334H1163V335H1164V334H1167V333H1168V334H1169V335H1172V334H1173V335H1179V334H1180V335H1181V334H1182V335H1183V334H1184V335H1186V334H1188V335H1190V334H1191V335H1193V334H1198V333H1199V334H1200V335H1210V334H1212V335H1213V334H1215V335H1217V334H1222V335H1225V334H1226V335H1228V334H1232V335H1234V334H1236V335H1237V334H1239V335H1240V334H1241V335H1244V334H1247V333H1248V334H1249V335H1250V334H1252V335H1253V334H1254V335H1255V334H1257V335H1259V334H1261V335H1265V334H1267V335H1268V334H1270V335H1272V334H1274V335H1275V334H1278V335H1280V334H1281V335H1283V334H1284V335H1285V334H1286V335H1289V334H1292V335H1293V334H1294V335H1295V334H1296V335H1298V334H1300V335H1301V334H1302V335H1304V334H1306V335H1307V334H1308V335H1309V334H1311V335H1313V334H1314V335H1315V334H1316V335H1318V334H1321V335H1323V334H1324V335H1325V334H1327V333H1328V334H1331V335H1334V334H1338V335H1340V334H1344V335H1345V334H1348V335H1349V334H1350V335H1351V334H1353V335H1355V334H1361V335H1364V334H1365V335H1366V333H1367V334H1372V335H1373V334H1374V335H1376V334H1377V335H1380V334H1383V335H1384V334H1385V335H1389V334H1392V335H1393V334H1397V335H1398V334H1401V335H1402V340H1401V339H1399V340H1398V341H1397V339H1395V340H1394V339H1392V340H1391V339H1390V340H1386V339H1382V340H1380V339H1378V340H1377V339H1374V340H1373V339H1368V340H1366V339H1365V340H1362V339H1359V340H1355V339H1353V340H1352V339H1349V340H1348V339H1344V340H1341V339H1336V340H1335V339H1324V340H1323V339H1321V340H1319V339H1316V340H1314V339H1304V340H1302V339H1301V340H1298V339H1294V340H1293V339H1291V340H1289V339H1288V340H1287V339H1284V340H1283V339H1279V340H1278V339H1273V340H1271V339H1268V340H1267V339H1265V341H1264V339H1257V340H1256V339H1255V340H1254V339H1249V340H1248V339H1247V340H1246V339H1245V340H1244V339H1241V340H1240V339H1239V340H1238V339H1237V340H1236V339H1235V340H1234V339H1229V340H1228V339H1226V340H1224V339H1221V340H1220V339H1219V340H1218V339H1214V340H1213V339H1211V340H1210V339H1204V340H1203V339H1197V340H1196V339H1195V340H1194V339H1188V340H1184V339H1183V340H1181V339H1179V340H1178V339H1176V340H1172V339H1171V340H1170V339H1169V340H1168V339H1167V340H1165V339H1164V340H1162V339H1161V340H1160V339H1148V340H1146V339H1144V340H1143V339H1142V341H1141V340H1138V339H1137V340H1134V339H1132V340H1131V339H1130V340H1129V339H1126V340H1125V339H1112V340H1111V339H1109V340H1108V339H1105V340H1103V339H1102V340H1100V339H1099V340H1098V339H1090V340H1089V339H1087V340H1086V339H1079V340H1078V339H1074V340H1073V339H1069V340H1068V339H1062V340H1061V339H1058V340H1057V339H1055V340H1052V339H1040V340H1039V339H1038V340H1037V339H1035V340H1032V339H1027V340H1026V339H1023V340H1022V339H1020V342H1019V339H1012V341H1011V340H1010V339H1008V340H1007V339H1005V340H1002V339H997V340H995V339H994V340H990V339H989V341H988V339H986V340H985V339H984V340H980V339H978V340H975V339H973V340H972V339H970V340H969V339H962V340H960V339H954V340H951V339H950V340H949V339H948V340H947V339H940V340H939V339H938V340H937V339H932V340H931V339H929V341H928V339H925V340H924V339H923V340H922V339H921V340H920V339H918V340H917V339H912V340H907V339H903V340H901V339H898V340H897V339H896V340H895V339H894V340H893V339H891V340H889V339H879V340H878V339H875V340H872V339H871V340H868V339H865V340H863V339H859V340H858V339H857V340H855V339H854V340H852V339H851V340H850V339H849V340H848V339H847V340H846V339H844V340H843V339H837V340H835V339H834V340H833V339H832V340H831V339H830V340H828V339H827V341H826V340H825V339H824V340H823V339H819V340H818V339H816V340H815V339H812V340H810V339H809V340H807V339H803V340H801V339H799V340H797V339H796V340H795V339H793V340H792V339H786V340H784V341H783V339H781V340H778V339H774V340H773V339H768V340H765V339H763V340H762V339H757V340H756V339H755V340H754V339H745V340H744V339H743V340H739V339H738V341H737V340H736V339H735V340H734V339H730V340H728V339H725V340H724V339H723V340H722V339H720V340H719V339H714V340H713V339H712V340H711V339H710V340H709V339H704V340H702V339H700V340H699V339H697V340H696V339H694V340H693V339H692V340H691V339H689V340H687V339H684V340H683V339H682V340H680V339H679V340H678V339H673V340H671V339H662V340H661V339H660V340H659V341H658V340H657V339H654V340H653V339H652V340H651V339H648V340H647V339H643V340H642V343H641V340H639V339H638V340H637V339H629V340H624V339H623V340H621V339H620V340H616V339H615V340H614V339H613V340H611V339H609V340H608V339H600V340H599V339H598V340H597V339H595V340H594V339H592V340H590V339H589V340H588V339H586V340H584V341H583V339H574V340H572V339H569V340H566V339H563V340H562V339H560V340H556V339H555V340H554V339H552V340H551V339H548V340H547V339H541V340H540V339H537V340H536V339H535V340H533V339H526V340H525V339H524V340H523V339H522V340H519V339H513V341H512V339H511V340H510V339H509V340H508V339H507V340H505V339H503V340H495V339H494V340H493V339H488V340H487V339H485V340H484V339H483V340H482V339H467V340H465V339H464V340H463V339H461V340H460V339H459V341H458V339H454V340H453V339H451V340H450V339H449V340H447V339H445V340H444V339H439V340H437V339H435V340H434V339H433V340H432V339H426V340H425V339H423V340H422V339H418V340H417V339H414V341H413V340H411V339H410V340H408V339H407V340H405V339H403V340H401V339H400V340H399V339H396V341H395V339H394V340H393V339H387V340H385V339H383V340H382V339H381V340H380V339H379V340H378V339H375V340H374V339H373V340H372V339H370V340H369V339H368V340H364V339H362V340H359V339H357V340H356V341H355V339H342V340H340V339H338V340H336V339H327V340H326V339H323V340H322V339H318V340H317V339H315V340H314V339H312V340H309V339H306V340H305V339H301V340H300V339H297V340H294V339H293V340H291V339H288V340H287V339H285V340H284V339H283V340H282V339H280V340H279V339H278V340H277Z"/>
<path d="M277 365H282V364H283V363H284V365H291V364H292V361H293V364H295V365H296V364H298V365H306V363H307V365H311V364H313V365H316V364H318V365H325V364H327V365H334V364H335V365H339V364H341V365H344V364H345V365H348V364H349V365H354V364H355V365H362V364H363V365H366V364H367V365H379V364H381V365H393V363H394V365H404V364H405V365H406V364H407V365H409V364H411V365H417V364H420V365H422V364H423V365H424V364H425V365H428V364H429V365H438V364H439V365H440V364H441V365H442V364H443V365H448V364H449V365H460V364H461V365H463V364H464V365H469V364H470V365H472V364H473V365H475V364H476V365H478V364H479V365H481V364H482V365H484V364H485V365H486V364H487V365H490V364H491V365H493V364H494V365H498V364H499V365H500V364H501V365H502V364H503V365H505V364H507V365H510V364H511V365H513V364H515V365H519V364H520V365H535V364H536V365H545V364H546V365H548V364H549V365H554V364H555V365H557V364H558V365H563V364H565V365H568V364H569V365H573V364H574V365H577V364H578V365H579V364H580V365H581V364H582V365H590V364H591V365H594V363H595V365H596V364H597V365H599V364H600V365H602V364H603V365H605V364H607V365H608V364H609V365H618V364H619V365H625V364H626V365H629V364H630V365H632V364H633V365H637V364H638V365H641V364H642V365H644V364H645V365H646V364H648V365H651V364H653V365H658V364H659V365H660V364H661V365H663V363H664V365H667V364H668V365H674V364H675V365H682V364H683V365H685V364H687V365H689V363H690V364H691V365H694V364H695V365H696V363H697V365H706V364H708V365H723V364H724V365H744V364H745V365H750V364H751V365H753V364H754V365H758V364H759V365H761V364H764V365H770V364H771V365H777V364H778V365H781V364H782V365H790V364H791V365H808V364H809V365H810V364H811V365H813V364H814V365H816V363H817V365H833V364H835V365H836V364H837V365H845V364H846V365H847V364H848V365H855V364H856V365H859V364H861V365H865V364H866V365H869V364H870V365H871V364H872V365H876V364H878V365H880V364H882V365H886V364H887V365H891V364H896V363H897V365H898V364H899V365H900V364H901V365H905V363H906V365H910V364H911V365H918V364H919V365H921V364H922V365H924V364H925V365H927V364H928V365H933V364H934V365H936V364H937V365H942V364H943V365H956V364H957V365H969V364H970V365H972V364H973V365H975V364H976V365H979V364H982V365H983V364H987V365H988V364H991V365H993V364H995V365H996V364H997V365H999V364H1006V365H1007V364H1012V365H1014V364H1015V365H1018V364H1019V359H1020V363H1021V365H1022V364H1023V365H1024V364H1025V365H1026V364H1029V365H1030V364H1032V365H1035V364H1037V365H1038V364H1039V365H1040V364H1043V363H1044V364H1045V365H1046V364H1047V365H1048V363H1049V364H1050V365H1051V363H1052V364H1053V365H1054V364H1055V365H1056V364H1060V365H1062V364H1063V365H1064V364H1066V365H1070V364H1071V365H1074V364H1078V365H1080V364H1081V365H1084V364H1085V365H1086V364H1088V365H1091V364H1093V365H1094V364H1095V365H1096V364H1100V365H1101V364H1102V365H1103V364H1104V365H1105V364H1106V365H1108V364H1110V365H1114V364H1115V365H1118V364H1119V365H1121V364H1122V365H1123V364H1125V363H1126V357H1127V362H1128V364H1133V365H1134V364H1135V365H1136V364H1138V365H1140V364H1141V365H1142V364H1144V365H1146V364H1148V363H1149V362H1150V364H1151V363H1152V360H1153V362H1154V360H1155V362H1156V361H1157V363H1158V361H1159V363H1160V360H1161V364H1163V361H1164V362H1166V363H1167V360H1168V361H1169V362H1170V361H1171V363H1172V364H1173V360H1174V364H1176V363H1178V364H1182V365H1184V364H1185V365H1194V364H1197V365H1198V364H1201V365H1202V364H1203V365H1205V364H1209V363H1210V364H1213V363H1215V364H1216V363H1217V364H1218V363H1219V362H1221V363H1223V364H1224V362H1226V364H1227V362H1229V364H1230V363H1232V362H1234V363H1235V362H1236V364H1237V362H1239V364H1240V362H1242V364H1243V363H1246V362H1249V364H1250V362H1251V363H1252V364H1256V365H1257V364H1258V365H1259V364H1261V365H1262V364H1264V363H1266V357H1267V362H1268V364H1271V365H1276V364H1277V365H1278V364H1288V365H1289V364H1292V365H1293V364H1295V365H1297V364H1298V365H1299V364H1302V365H1303V364H1305V365H1306V364H1308V365H1309V364H1310V363H1311V364H1314V363H1315V362H1316V364H1318V362H1319V364H1322V363H1323V362H1324V363H1326V362H1327V364H1329V362H1331V363H1333V362H1334V363H1335V364H1336V363H1337V362H1338V363H1340V365H1341V364H1342V365H1346V364H1347V365H1348V364H1349V365H1350V364H1352V365H1353V364H1354V363H1355V357H1356V362H1357V364H1359V365H1360V364H1361V365H1362V364H1363V365H1364V364H1365V365H1366V364H1368V365H1369V364H1371V365H1372V364H1380V365H1382V364H1384V365H1386V364H1389V365H1392V364H1393V365H1394V364H1395V365H1396V364H1397V365H1398V364H1400V365H1401V364H1402V370H1401V369H1399V370H1396V369H1393V370H1392V369H1388V370H1386V369H1384V370H1382V369H1381V370H1380V369H1379V370H1378V369H1376V370H1375V369H1374V370H1373V369H1368V370H1366V369H1364V370H1363V369H1362V370H1359V369H1358V370H1357V372H1356V377H1355V371H1354V370H1349V369H1348V370H1347V369H1342V370H1340V369H1339V370H1338V371H1337V370H1336V372H1334V370H1332V371H1330V372H1327V371H1326V372H1325V370H1322V372H1321V370H1319V371H1318V370H1317V371H1315V372H1314V370H1312V372H1311V370H1307V369H1305V370H1303V369H1302V370H1299V369H1297V370H1292V369H1290V370H1289V369H1287V370H1286V369H1285V370H1281V369H1280V370H1272V369H1271V370H1268V372H1267V377H1266V372H1265V370H1263V369H1262V370H1261V369H1260V370H1256V369H1254V370H1253V372H1252V370H1251V371H1250V369H1249V372H1247V370H1246V371H1245V370H1242V372H1241V370H1239V369H1238V371H1237V372H1236V370H1235V372H1234V370H1233V372H1232V370H1231V372H1230V371H1226V370H1224V372H1223V370H1222V372H1221V371H1220V370H1219V372H1217V371H1216V372H1215V370H1212V372H1210V371H1209V370H1207V369H1206V370H1201V369H1197V370H1196V369H1195V370H1193V369H1190V370H1189V369H1183V370H1182V369H1178V370H1176V371H1175V374H1174V373H1173V374H1171V373H1169V372H1166V374H1165V371H1164V372H1163V371H1162V370H1161V372H1160V371H1159V372H1158V370H1157V373H1156V372H1155V374H1153V373H1151V371H1150V373H1149V372H1148V369H1147V370H1146V371H1145V369H1140V370H1139V369H1137V370H1136V369H1135V370H1133V369H1132V370H1128V372H1127V379H1126V372H1125V370H1123V369H1120V370H1119V369H1118V370H1117V369H1115V370H1114V369H1113V370H1112V369H1111V370H1110V369H1107V370H1105V369H1103V370H1102V369H1101V370H1099V369H1095V370H1092V369H1091V370H1090V369H1089V370H1088V369H1085V370H1080V369H1077V370H1064V369H1062V370H1057V369H1055V370H1053V371H1052V370H1051V371H1050V370H1049V371H1047V370H1046V369H1045V371H1043V370H1040V369H1039V370H1035V369H1032V370H1029V369H1028V370H1022V369H1021V370H1020V373H1019V370H1016V369H1014V370H1012V369H1011V370H1010V369H1009V370H1008V369H1005V370H1004V369H1002V370H1001V369H999V370H998V369H995V370H994V369H993V370H991V369H990V370H989V369H987V370H984V369H982V370H979V369H978V370H977V369H972V370H971V369H964V370H963V369H954V370H953V369H944V370H943V369H940V370H939V369H931V370H930V369H921V370H920V369H916V370H915V369H912V370H910V369H908V370H907V369H905V370H904V369H894V370H893V369H892V370H891V369H889V370H888V371H887V369H886V370H885V369H882V370H881V369H852V371H851V369H849V370H848V369H841V370H840V369H837V370H835V369H830V370H829V369H819V370H818V369H813V370H812V369H808V370H807V369H804V370H803V369H793V370H791V369H785V370H784V369H783V370H782V369H778V370H777V369H775V370H774V369H767V370H766V369H764V370H763V369H761V370H759V369H752V371H751V369H750V370H749V369H746V370H745V369H737V370H736V369H732V370H731V369H729V370H728V369H724V370H723V369H704V370H703V369H696V370H695V369H690V371H689V370H688V369H687V370H686V369H679V370H678V369H675V370H674V369H661V370H660V369H653V370H652V369H651V370H650V369H649V370H648V369H647V370H646V369H630V370H629V369H624V370H622V369H603V370H602V369H596V370H595V369H576V370H575V369H574V370H572V369H558V370H557V369H549V370H548V369H547V370H544V369H539V370H538V369H528V370H527V369H525V370H524V369H523V370H522V369H521V370H519V369H502V370H501V369H498V370H496V369H486V370H485V369H483V370H482V369H478V370H477V369H470V370H469V369H466V370H465V369H458V370H457V369H454V370H453V369H439V370H438V369H435V371H434V369H430V370H429V369H427V370H426V369H425V370H424V369H423V370H422V369H419V370H418V369H413V370H412V369H406V370H405V369H404V370H403V369H398V370H397V369H394V370H393V369H374V370H373V369H372V370H371V369H365V370H364V369H357V370H356V369H354V370H353V369H352V370H351V369H336V370H335V369H316V370H315V369H302V370H301V369H294V370H293V373H292V370H291V369H289V370H287V369H281V370H280V369H278V370H277Z"/>
<path d="M277 395H282V396H283V395H284V396H286V395H287V396H288V395H294V394H296V395H298V394H300V395H301V394H302V395H303V394H304V395H306V394H308V395H309V394H310V395H313V394H314V395H315V394H317V395H321V394H322V395H324V394H327V395H328V394H329V395H330V394H331V395H337V394H339V392H340V393H341V394H343V392H344V393H345V392H348V394H349V393H350V391H351V392H352V391H353V393H354V394H356V393H358V392H359V393H360V392H363V394H364V395H366V396H367V395H369V394H370V395H371V394H373V395H374V394H376V395H380V394H381V395H387V394H388V395H390V394H391V389H392V393H393V395H396V394H400V395H401V394H403V395H408V394H412V395H414V394H416V395H417V394H418V395H419V394H421V392H423V395H424V394H425V392H426V394H430V393H431V394H432V392H433V394H435V393H436V394H437V395H438V394H440V395H441V394H442V395H444V394H446V396H447V395H448V394H449V395H450V394H451V395H452V393H453V395H454V393H456V391H457V393H458V392H459V394H460V391H462V393H463V391H464V393H465V391H466V394H468V393H469V392H471V391H472V393H474V392H477V394H479V391H480V394H481V393H482V395H483V393H484V394H486V395H488V394H491V395H498V394H499V395H500V394H501V395H502V394H503V391H504V393H505V391H506V394H508V395H509V394H514V395H515V394H516V395H517V394H518V395H520V396H524V395H527V394H528V395H529V396H530V395H533V396H534V395H536V396H538V395H541V396H544V395H545V396H547V395H548V396H549V395H550V396H552V395H555V396H556V395H557V396H561V395H562V394H563V396H564V395H567V396H569V395H573V396H575V395H577V396H579V395H584V396H585V395H589V396H591V395H595V396H596V395H597V396H598V395H599V396H600V395H602V396H603V395H609V396H611V395H614V396H615V395H620V396H621V395H623V396H624V395H625V396H626V395H627V396H628V395H629V396H630V395H632V396H633V395H636V396H638V395H639V396H640V395H642V396H646V395H647V396H649V395H652V396H654V395H656V396H658V395H669V396H671V395H675V396H677V395H678V396H680V395H681V396H682V395H685V396H686V395H687V396H688V394H689V395H692V396H693V394H694V396H697V395H700V396H701V395H705V396H708V395H709V396H713V395H715V396H716V395H718V396H721V395H724V396H725V395H727V396H728V395H735V396H736V395H738V396H740V395H742V396H743V395H745V396H746V395H747V396H748V395H749V396H751V395H752V396H753V395H755V394H756V395H759V396H760V395H761V396H762V395H764V396H766V395H767V396H768V395H769V396H771V395H775V396H776V395H777V396H778V395H779V396H780V395H783V396H784V395H786V396H787V395H788V396H790V395H792V396H793V395H794V396H796V395H797V396H798V395H800V396H801V395H805V394H806V396H808V395H810V396H811V395H813V396H815V395H816V396H819V395H821V396H822V394H823V396H824V395H826V396H828V395H829V394H830V396H833V395H839V396H844V395H847V396H850V395H851V396H853V395H855V396H856V395H859V396H860V395H861V396H863V395H865V396H866V395H868V391H869V390H870V393H871V394H872V395H873V396H874V395H877V396H880V395H881V396H882V395H884V396H885V395H887V396H888V394H889V395H890V394H891V392H892V384H893V391H894V392H895V394H896V395H898V394H899V391H900V382H901V384H902V383H903V385H904V384H905V391H907V394H908V395H909V394H910V393H912V394H913V392H914V393H917V395H918V394H919V393H920V388H921V392H922V390H923V394H925V395H927V396H929V395H932V396H934V395H936V396H939V395H943V396H944V395H948V396H949V395H951V396H953V395H954V396H955V395H960V396H961V395H963V396H964V395H969V396H970V395H974V396H975V395H980V396H983V395H989V396H990V395H995V396H996V395H998V396H999V395H1000V396H1001V395H1007V396H1010V395H1012V396H1015V395H1016V396H1018V395H1019V396H1020V395H1021V396H1022V395H1026V396H1027V395H1029V396H1030V395H1044V396H1047V395H1048V396H1049V395H1054V396H1055V395H1057V396H1058V395H1059V394H1060V395H1066V394H1067V395H1071V396H1072V395H1074V396H1075V395H1076V396H1077V395H1078V396H1081V395H1083V396H1084V395H1085V396H1086V395H1087V396H1088V395H1090V396H1091V395H1095V396H1096V395H1098V396H1099V395H1101V396H1102V395H1104V396H1105V395H1106V394H1107V396H1108V395H1110V396H1113V395H1114V396H1115V395H1116V396H1117V395H1118V394H1119V396H1122V395H1125V396H1126V395H1128V396H1129V395H1135V396H1136V395H1139V396H1142V395H1143V394H1144V396H1145V395H1149V396H1150V395H1151V396H1152V395H1156V396H1158V395H1159V396H1160V395H1161V396H1162V395H1164V396H1165V395H1166V396H1167V395H1171V396H1172V395H1173V396H1174V395H1176V396H1177V395H1178V396H1179V395H1182V396H1183V395H1184V396H1185V395H1187V396H1190V395H1191V396H1193V394H1194V395H1198V396H1199V395H1201V396H1202V395H1204V396H1205V395H1206V396H1207V395H1208V396H1209V395H1217V396H1218V395H1221V396H1222V395H1228V396H1229V395H1232V396H1233V395H1235V396H1237V395H1238V396H1239V395H1243V396H1244V395H1245V396H1248V395H1250V396H1251V395H1253V394H1254V395H1255V396H1260V395H1261V396H1262V395H1263V396H1267V395H1270V396H1271V395H1275V396H1276V395H1278V396H1280V395H1282V396H1285V395H1286V396H1289V395H1290V396H1291V395H1293V396H1294V395H1297V396H1298V395H1299V396H1301V395H1304V396H1306V395H1308V396H1309V395H1318V396H1319V395H1321V396H1322V395H1325V396H1326V395H1328V396H1329V395H1332V396H1334V395H1336V396H1337V395H1340V396H1341V395H1342V396H1345V395H1346V396H1348V395H1353V396H1354V395H1358V396H1360V395H1362V396H1363V395H1368V396H1369V395H1371V396H1375V395H1380V396H1381V394H1382V395H1384V396H1385V395H1386V396H1387V395H1390V396H1391V395H1392V396H1393V395H1399V396H1400V395H1401V396H1402V399H1401V400H1399V399H1398V400H1397V399H1396V400H1393V399H1392V400H1383V399H1382V400H1379V399H1378V400H1376V399H1375V400H1371V399H1370V400H1367V399H1365V400H1363V399H1356V400H1352V399H1351V400H1348V399H1347V400H1345V399H1344V400H1342V399H1340V400H1336V399H1335V400H1334V399H1333V400H1326V399H1323V400H1322V399H1321V400H1320V399H1319V400H1317V399H1312V400H1311V399H1310V400H1309V399H1308V400H1307V399H1303V400H1297V399H1295V400H1294V399H1291V400H1288V399H1286V400H1280V399H1279V400H1278V399H1276V400H1273V399H1272V400H1270V399H1269V400H1261V399H1259V400H1257V399H1256V400H1254V401H1253V400H1252V399H1250V400H1247V399H1246V400H1245V399H1243V401H1242V400H1239V399H1237V400H1236V399H1234V400H1231V399H1227V400H1226V399H1223V400H1222V401H1221V399H1220V400H1219V399H1218V400H1213V399H1212V400H1208V399H1206V400H1204V399H1203V400H1201V399H1200V400H1198V399H1197V400H1196V399H1195V400H1193V399H1189V400H1187V399H1186V400H1185V399H1184V400H1183V399H1182V400H1181V401H1180V400H1177V399H1176V400H1173V399H1172V400H1171V399H1169V400H1167V401H1166V399H1164V400H1161V399H1158V400H1155V399H1151V400H1149V399H1147V400H1146V399H1145V400H1140V399H1139V400H1133V399H1132V400H1129V399H1128V400H1125V399H1122V400H1121V399H1119V400H1118V399H1117V400H1114V399H1113V401H1112V399H1111V400H1110V399H1107V400H1106V399H1105V400H1101V399H1100V400H1096V399H1094V400H1090V399H1089V400H1084V399H1083V400H1082V399H1081V400H1080V399H1079V400H1077V399H1076V400H1071V399H1068V400H1066V399H1064V400H1059V399H1058V400H1057V399H1055V400H1054V399H1052V400H1049V399H1048V400H1047V399H1045V400H1044V399H1042V400H1041V399H1036V400H1032V399H1031V400H1030V399H1027V400H1023V399H1022V400H1019V399H1018V400H1017V399H1014V400H1011V399H1009V400H1008V399H1007V400H1005V399H1002V400H1001V399H1000V400H998V399H997V400H996V399H994V401H993V400H992V399H991V400H990V399H989V400H986V399H984V400H982V399H980V400H977V399H975V400H969V399H966V400H964V399H963V400H962V399H961V400H960V399H959V400H957V401H956V399H954V400H953V399H952V400H949V399H948V400H947V399H945V400H944V399H939V400H938V399H937V401H936V399H934V400H933V399H930V400H926V399H925V400H923V403H922V402H921V407H920V401H919V402H917V400H916V401H915V406H914V402H912V400H909V399H908V400H907V402H906V403H905V411H904V410H903V409H902V411H901V410H900V402H899V400H897V401H896V402H895V401H894V402H893V408H892V402H891V400H885V399H884V400H883V399H882V400H878V399H875V400H873V402H872V400H871V403H870V402H869V401H868V402H866V399H863V400H860V399H859V400H858V401H857V399H855V400H852V399H843V400H840V399H836V400H835V399H833V400H832V399H829V400H822V399H821V400H820V399H818V400H815V399H814V400H813V399H812V400H811V399H810V400H809V399H808V400H806V399H804V400H803V399H802V400H801V399H800V400H795V399H794V400H793V399H792V400H791V401H790V399H789V400H788V399H786V400H784V399H783V400H776V399H773V400H771V399H770V400H769V401H768V399H767V400H765V399H764V400H762V399H759V400H757V399H756V400H752V399H748V400H742V399H740V400H739V399H737V400H735V399H733V400H731V399H725V400H723V399H721V400H715V399H713V400H712V399H710V400H708V399H706V400H703V399H702V400H701V399H697V400H695V399H692V400H690V399H689V400H685V399H684V400H682V399H681V400H680V399H679V400H678V399H675V400H673V399H671V400H669V399H667V400H666V399H663V400H661V399H660V400H659V399H657V400H656V399H654V400H653V399H649V400H647V399H643V400H641V399H640V400H639V399H638V400H637V399H636V400H630V399H629V400H626V399H622V400H621V399H618V400H615V399H614V400H612V399H610V400H609V399H608V400H607V399H606V400H602V399H600V400H598V399H594V400H593V401H592V399H589V400H586V399H584V400H581V399H580V400H571V399H570V400H569V399H568V400H565V399H564V400H562V399H561V400H554V399H553V400H549V399H548V400H546V399H544V400H541V399H540V400H538V399H536V400H534V399H532V400H530V399H527V400H526V399H520V400H517V401H516V399H514V400H512V399H511V400H508V401H507V402H506V401H504V403H503V401H501V400H496V399H494V400H491V399H490V400H488V401H487V400H482V402H481V400H480V401H479V402H478V401H477V403H474V400H473V401H472V402H469V403H467V400H466V403H464V402H463V400H462V403H458V401H457V403H456V400H454V401H452V400H448V399H446V400H442V399H441V401H440V400H439V399H438V400H437V401H435V400H433V402H432V400H431V402H430V400H427V401H426V402H425V400H418V399H416V400H415V399H414V400H407V399H406V400H403V401H402V399H401V400H400V399H399V400H398V399H396V400H394V399H393V400H392V403H391V400H388V399H387V400H384V399H383V400H380V399H379V400H376V399H373V400H370V399H369V400H365V399H364V401H363V400H362V403H359V400H358V401H357V403H356V400H353V401H352V400H351V401H350V402H349V401H348V402H347V403H345V400H344V403H343V401H341V402H340V401H339V400H329V399H328V400H327V399H324V400H322V399H319V400H317V399H315V400H314V399H312V400H310V399H308V400H307V399H306V400H305V399H304V400H296V399H295V400H293V399H292V400H287V399H286V400H284V399H281V400H280V399H278V400H277Z"/>
<path d="M277 425H278V424H280V425H282V424H285V425H287V424H291V425H292V424H293V425H295V424H297V425H298V424H299V425H300V424H301V425H304V424H305V425H308V424H310V425H311V424H312V425H314V424H316V425H318V423H319V425H320V423H321V424H322V423H323V424H324V425H325V424H326V425H327V424H332V425H333V424H334V425H335V424H336V421H337V423H338V422H339V424H340V423H342V424H343V422H345V424H346V423H347V422H348V421H349V422H350V421H351V423H352V424H353V423H355V424H357V423H359V424H360V420H361V423H362V425H366V424H367V425H370V424H371V425H372V424H375V425H378V424H380V425H381V424H382V425H383V424H386V425H388V424H394V425H395V424H397V425H398V424H403V425H405V424H406V425H407V424H410V425H411V424H412V425H414V423H415V424H417V425H418V424H420V425H422V424H423V425H427V424H428V425H429V424H432V425H433V424H434V425H435V424H439V425H440V424H442V425H447V424H451V425H454V424H455V425H456V424H461V425H462V424H467V425H469V423H470V424H476V425H477V424H478V425H479V424H481V425H482V424H483V425H485V424H488V425H490V424H495V425H498V424H499V425H500V424H506V425H509V424H510V425H514V424H516V423H517V425H518V424H520V425H521V424H522V425H525V424H529V425H530V424H531V425H532V424H533V425H534V424H537V425H539V424H540V425H541V424H542V425H543V424H545V425H546V424H550V423H551V424H553V425H554V424H555V425H556V424H558V425H559V424H562V425H563V424H564V425H565V424H569V425H570V424H573V423H574V424H577V425H578V424H580V425H581V424H583V425H585V424H587V425H589V424H592V425H593V424H598V425H599V424H600V425H602V424H603V425H604V424H605V425H607V424H608V425H609V424H610V425H611V424H612V425H615V424H619V423H620V425H621V424H625V425H628V424H630V425H631V424H632V425H633V424H634V425H635V424H640V425H643V424H644V425H645V424H646V425H647V424H648V425H649V424H650V425H653V424H657V425H660V424H663V425H665V424H666V425H668V424H669V425H670V424H673V425H674V424H675V425H677V424H678V425H679V424H681V425H682V424H684V423H685V424H687V425H688V424H690V423H691V424H694V425H696V424H699V425H700V424H701V425H702V424H704V425H705V424H706V425H707V424H710V425H713V424H714V425H715V424H716V425H717V424H718V425H721V424H722V425H725V424H726V425H727V424H728V425H729V424H732V425H733V424H737V425H740V424H743V425H744V423H745V424H747V425H749V424H750V425H752V424H753V425H754V424H756V425H757V424H760V425H761V424H764V425H765V424H769V425H770V424H772V425H773V424H774V425H775V424H783V425H784V424H786V425H787V424H791V425H792V424H793V425H794V424H795V425H797V424H798V425H799V424H800V420H801V424H807V425H809V424H811V425H812V424H813V425H815V424H824V425H825V424H826V423H827V425H828V424H830V425H834V424H835V425H836V424H839V425H841V424H842V423H843V424H844V425H845V424H846V425H848V424H849V425H850V424H852V425H854V424H855V423H856V425H858V424H860V425H861V424H864V425H865V423H866V424H868V425H871V424H873V425H875V424H876V425H877V424H879V425H880V424H881V425H882V424H889V419H890V423H891V425H892V424H894V425H895V424H900V425H903V424H905V425H907V424H909V425H910V424H911V421H912V424H914V425H915V424H919V425H921V424H924V425H925V424H926V425H927V424H928V425H929V424H930V425H935V424H936V425H937V424H943V425H944V424H946V425H948V424H949V425H950V424H951V425H952V424H953V425H954V424H956V425H957V424H964V425H965V424H966V425H970V424H971V425H973V424H975V425H976V424H981V425H984V424H985V425H986V424H987V425H988V424H989V425H990V424H992V425H993V424H995V425H998V424H1000V425H1001V424H1003V425H1005V423H1007V424H1009V425H1013V424H1015V425H1016V424H1023V425H1024V424H1025V425H1027V424H1028V425H1031V424H1033V425H1036V424H1037V425H1040V424H1041V425H1043V424H1044V425H1045V424H1051V425H1052V424H1053V425H1054V424H1060V425H1061V424H1063V425H1067V424H1072V425H1075V424H1077V425H1079V424H1082V425H1084V424H1085V425H1088V424H1091V425H1092V423H1093V424H1095V425H1098V424H1103V425H1104V424H1108V425H1109V424H1110V425H1111V424H1112V425H1114V424H1115V425H1116V424H1120V425H1121V424H1124V425H1125V424H1127V425H1128V424H1134V425H1135V424H1137V425H1138V424H1139V423H1140V425H1142V424H1144V425H1148V424H1149V425H1150V424H1152V425H1154V424H1155V425H1156V424H1159V425H1160V424H1162V425H1164V424H1166V425H1168V423H1169V424H1174V425H1175V424H1177V425H1181V424H1183V425H1184V424H1187V425H1189V424H1192V425H1193V424H1194V425H1195V424H1198V425H1199V424H1202V425H1203V424H1205V425H1206V424H1208V425H1214V424H1215V425H1217V424H1223V425H1225V424H1226V425H1229V424H1235V425H1236V424H1237V425H1239V424H1244V425H1245V424H1249V425H1251V424H1253V425H1255V424H1257V425H1258V424H1259V425H1261V424H1262V425H1263V423H1264V424H1266V425H1267V424H1268V425H1269V424H1270V425H1271V424H1272V425H1273V424H1274V423H1275V425H1278V424H1279V425H1280V424H1281V425H1282V424H1288V425H1289V424H1291V423H1292V425H1294V424H1295V425H1296V424H1297V425H1298V424H1299V425H1301V424H1303V425H1309V424H1310V425H1312V424H1315V425H1316V424H1317V425H1318V424H1320V425H1323V424H1324V423H1325V425H1328V424H1329V425H1330V424H1331V425H1335V424H1337V425H1338V424H1339V425H1343V424H1344V425H1345V424H1347V425H1348V423H1349V424H1350V425H1352V424H1353V425H1358V424H1359V425H1361V424H1363V425H1367V424H1369V425H1370V424H1371V425H1372V424H1373V423H1374V425H1375V424H1379V425H1381V424H1384V425H1385V423H1386V425H1387V424H1389V423H1391V422H1392V420H1397V423H1398V420H1400V423H1402V431H1400V430H1399V435H1398V434H1396V435H1395V432H1393V431H1392V434H1390V432H1389V431H1388V428H1381V429H1378V428H1377V429H1376V428H1375V429H1370V428H1368V429H1367V428H1365V429H1362V428H1361V429H1359V428H1357V429H1355V428H1352V429H1351V428H1349V429H1348V428H1347V429H1345V428H1342V429H1340V428H1337V429H1336V428H1333V430H1332V428H1329V429H1328V428H1323V429H1319V428H1317V430H1316V428H1305V429H1304V428H1300V429H1299V428H1297V429H1293V428H1290V429H1289V428H1287V429H1285V428H1284V429H1283V428H1282V429H1281V428H1280V429H1279V428H1278V430H1277V429H1276V428H1275V429H1272V428H1270V429H1268V428H1267V430H1266V428H1265V429H1262V428H1261V429H1260V428H1259V429H1257V428H1256V429H1250V428H1248V429H1245V428H1243V429H1241V428H1240V429H1239V428H1234V429H1232V428H1231V429H1230V428H1228V429H1225V428H1221V429H1219V428H1217V429H1215V428H1212V429H1211V428H1207V429H1206V428H1201V429H1199V428H1198V429H1197V428H1195V429H1193V428H1192V429H1191V428H1189V429H1188V430H1187V428H1185V429H1184V428H1180V429H1177V428H1175V429H1174V428H1173V429H1172V428H1169V429H1167V428H1164V429H1163V428H1162V429H1160V428H1159V429H1158V428H1157V429H1156V428H1154V429H1152V428H1151V429H1150V428H1148V429H1142V428H1140V429H1139V428H1138V429H1136V428H1134V429H1132V428H1130V429H1129V430H1128V428H1126V430H1125V428H1124V429H1121V428H1120V429H1119V428H1118V429H1117V428H1114V429H1113V428H1111V429H1107V428H1100V429H1099V428H1098V429H1096V428H1095V429H1094V428H1088V429H1087V428H1085V429H1084V428H1079V429H1077V428H1076V429H1075V428H1074V429H1073V428H1072V429H1071V428H1069V429H1068V428H1066V429H1065V428H1064V429H1063V428H1062V429H1061V428H1057V429H1056V428H1055V429H1053V428H1051V429H1050V428H1047V429H1042V428H1040V429H1039V428H1036V429H1035V428H1030V429H1029V428H1028V429H1025V428H1024V429H1023V428H1022V429H1021V428H1020V429H1017V428H1016V429H1014V428H1007V429H1005V428H1001V429H998V428H997V430H996V428H993V429H991V428H989V429H988V428H986V429H985V428H983V429H979V428H977V429H976V428H975V429H974V428H972V429H971V428H967V429H962V428H958V429H957V428H954V429H953V428H952V429H951V428H950V429H949V428H948V429H946V428H942V429H941V428H940V429H936V428H934V429H931V428H927V429H925V428H920V429H917V428H916V429H915V428H914V429H913V430H912V433H911V430H910V429H906V428H905V429H902V428H901V429H897V428H895V429H894V428H893V429H891V431H890V435H889V430H888V429H887V430H886V428H885V429H883V428H882V429H881V428H880V429H879V428H877V429H875V428H873V429H870V428H869V429H868V428H864V429H863V428H862V429H857V428H856V429H855V428H853V429H852V428H850V429H847V428H846V429H844V428H842V429H840V428H838V429H837V428H836V429H834V428H833V429H829V428H827V429H826V428H825V429H824V428H821V429H819V428H818V429H817V428H815V429H814V428H810V429H808V428H806V429H804V428H803V429H802V430H801V433H800V430H799V429H798V428H795V429H793V428H791V429H790V428H788V429H787V428H785V429H783V428H781V429H780V428H778V429H775V428H774V429H772V428H770V429H763V428H759V429H757V428H756V429H754V428H752V429H748V428H745V429H744V428H742V429H741V428H738V429H735V430H734V429H733V428H731V429H729V428H726V429H724V430H723V429H721V428H719V429H718V428H715V429H712V428H711V429H710V428H709V429H701V428H700V429H697V428H695V429H694V430H693V428H688V430H687V428H684V429H679V428H677V429H676V428H674V429H673V428H672V429H670V428H669V429H668V428H667V429H665V428H664V429H660V428H657V429H656V428H654V429H651V428H649V429H648V428H647V429H645V428H642V429H640V428H639V429H635V428H634V429H633V428H632V429H631V428H629V429H625V428H624V429H621V428H620V429H617V428H616V429H612V428H607V429H603V428H602V429H600V428H599V429H598V428H595V429H594V428H593V429H592V428H588V429H584V428H583V429H579V428H577V429H575V430H574V429H568V428H567V429H566V428H565V429H564V428H563V429H562V428H561V429H560V428H558V429H554V428H551V429H550V428H549V429H545V428H544V429H542V428H541V429H535V428H526V429H525V428H523V429H521V428H516V429H514V428H513V429H512V428H509V429H505V428H500V429H499V428H497V429H496V428H494V429H493V428H492V429H491V428H489V429H487V428H484V429H483V428H481V429H476V428H474V429H473V428H471V429H470V428H467V429H464V428H462V429H458V428H452V429H451V428H449V429H448V428H447V429H441V428H438V429H437V428H436V429H432V428H431V429H430V428H429V429H428V428H426V429H424V428H422V429H421V428H419V429H417V428H416V429H415V428H414V429H410V428H406V429H404V430H403V429H402V428H401V429H395V428H390V429H389V428H388V429H387V428H386V429H384V428H383V429H378V428H377V429H376V428H370V429H369V428H368V429H365V428H364V429H363V431H361V434H360V431H359V432H358V433H357V431H356V430H355V433H354V431H352V433H351V432H350V431H348V433H347V431H346V430H344V431H343V430H341V433H340V432H339V431H338V430H336V432H335V431H334V430H333V429H331V428H330V429H327V428H324V429H323V428H321V429H320V428H319V429H318V428H316V429H314V428H311V429H309V428H305V429H304V428H303V429H302V428H301V429H300V428H296V429H294V428H292V429H289V428H287V429H283V428H282V429H281V428H279V429H277Z"/>
<path d="M277 455H280V454H281V455H282V453H284V454H285V453H286V454H288V450H289V438H290V449H291V450H292V454H293V455H294V453H296V454H297V455H300V453H301V455H302V454H303V455H304V451H305V455H306V454H308V455H310V453H311V454H312V455H313V456H318V454H319V456H324V455H326V456H327V455H328V456H329V455H331V456H335V455H336V456H339V455H342V456H347V455H348V456H353V455H354V456H365V455H366V456H372V455H373V456H380V455H381V456H385V455H386V456H387V455H388V456H392V455H393V456H394V455H396V456H398V455H399V456H401V455H403V456H406V455H407V456H410V455H411V456H417V455H418V456H432V455H433V456H434V455H436V456H438V455H441V456H443V455H446V456H459V454H460V456H462V455H463V456H468V455H470V456H472V455H473V456H475V455H476V456H484V455H490V454H492V455H494V454H495V453H496V455H497V454H498V452H499V455H501V456H506V455H509V456H510V454H512V453H513V454H514V451H515V453H516V455H520V454H521V455H522V453H524V454H526V452H527V455H528V456H529V455H530V456H531V455H533V456H548V455H549V456H551V455H552V456H555V455H556V456H557V455H561V456H566V455H567V456H568V455H570V456H576V455H578V456H582V455H583V456H584V455H585V456H587V455H588V456H590V455H591V456H593V455H594V456H595V455H596V456H598V455H599V456H602V455H603V456H604V455H605V456H607V455H608V456H612V455H613V456H614V455H618V456H623V455H624V456H632V455H633V456H638V455H639V456H641V455H642V456H664V455H665V456H669V455H671V456H675V455H677V456H681V455H682V456H684V455H686V456H687V455H688V456H703V455H704V456H706V455H707V456H709V455H710V456H715V455H716V456H720V455H721V456H728V455H730V456H732V455H733V456H736V455H737V456H744V455H745V456H748V455H749V456H755V455H756V456H759V455H761V456H762V455H763V456H764V455H765V456H777V455H778V456H782V455H783V456H785V455H786V456H790V455H792V456H793V455H794V456H796V455H798V456H799V455H801V456H802V455H804V456H810V455H811V456H812V455H815V456H816V455H818V456H819V455H821V456H837V455H838V456H839V455H841V456H843V455H845V456H849V455H850V456H851V455H852V456H858V455H859V456H863V455H864V456H867V455H869V456H875V455H876V456H880V455H881V456H883V455H884V456H885V455H886V456H887V455H888V456H889V455H891V456H892V455H893V456H894V455H897V456H900V455H901V456H904V455H905V456H907V455H908V456H911V455H912V456H915V455H916V456H917V455H919V456H922V455H923V456H931V455H932V456H935V455H936V456H938V455H940V456H946V455H948V456H955V455H956V456H957V455H958V456H961V455H962V456H963V455H964V456H969V455H970V456H972V454H973V456H974V455H975V456H978V455H979V456H980V455H981V456H982V454H983V456H984V455H986V456H1002V455H1003V456H1005V455H1006V456H1008V455H1009V456H1016V453H1017V456H1020V455H1021V454H1022V455H1023V456H1024V455H1025V456H1028V455H1030V456H1034V455H1036V454H1037V455H1039V456H1040V455H1041V456H1043V455H1045V456H1048V455H1049V456H1055V455H1056V456H1058V455H1059V456H1061V455H1063V456H1066V455H1068V456H1069V455H1071V456H1079V455H1082V456H1083V455H1084V456H1090V455H1091V456H1092V455H1093V456H1095V455H1096V456H1099V455H1101V456H1108V455H1109V456H1112V455H1114V456H1116V455H1118V456H1120V455H1121V456H1125V455H1126V456H1127V455H1129V456H1130V455H1132V456H1134V454H1135V456H1141V455H1143V456H1149V455H1150V456H1159V455H1160V456H1166V455H1168V456H1183V455H1184V456H1186V455H1187V456H1188V455H1189V456H1193V455H1196V456H1198V455H1199V456H1203V455H1204V456H1212V455H1213V456H1223V455H1224V456H1225V455H1226V456H1228V455H1229V456H1234V455H1235V456H1239V455H1240V456H1246V455H1247V456H1253V455H1254V456H1255V455H1256V456H1257V455H1260V456H1268V455H1269V456H1271V455H1274V456H1278V455H1280V456H1281V455H1282V456H1285V455H1286V456H1288V455H1289V456H1293V455H1297V456H1301V455H1302V456H1303V455H1304V456H1307V455H1308V456H1311V455H1313V456H1314V455H1315V456H1316V455H1318V456H1322V455H1323V456H1329V455H1330V456H1333V455H1334V456H1335V454H1336V455H1338V456H1340V455H1341V456H1345V455H1347V456H1348V455H1349V456H1356V455H1357V456H1359V455H1360V456H1361V455H1362V456H1363V455H1364V456H1368V455H1370V456H1371V455H1372V456H1382V455H1383V456H1389V455H1391V456H1393V455H1395V456H1401V455H1402V459H1400V460H1399V459H1395V460H1390V459H1389V460H1388V459H1386V460H1383V459H1382V460H1381V459H1379V460H1373V459H1372V460H1371V459H1370V460H1369V459H1368V460H1367V459H1366V460H1361V459H1359V460H1357V459H1355V460H1353V459H1350V460H1349V459H1347V460H1346V459H1345V460H1343V459H1342V460H1341V459H1340V460H1335V459H1333V460H1332V459H1330V460H1323V459H1319V460H1316V459H1315V460H1311V459H1310V460H1308V459H1305V460H1294V459H1293V460H1292V459H1290V460H1287V459H1282V460H1281V459H1277V460H1275V459H1274V460H1273V459H1271V460H1268V459H1267V460H1264V459H1263V460H1262V459H1260V460H1257V459H1253V460H1252V459H1247V460H1246V459H1243V460H1242V459H1240V460H1239V459H1238V460H1237V459H1235V460H1234V459H1233V460H1231V459H1230V460H1228V459H1225V460H1221V461H1219V460H1216V459H1212V460H1209V459H1208V460H1205V459H1202V460H1201V459H1198V460H1197V459H1195V460H1192V459H1191V460H1189V459H1188V460H1186V459H1185V460H1182V459H1181V460H1180V459H1176V460H1175V459H1174V460H1173V459H1171V461H1170V459H1169V460H1166V459H1165V460H1164V459H1162V460H1159V459H1153V460H1151V459H1150V460H1148V459H1145V460H1144V459H1143V460H1142V459H1140V460H1139V459H1136V460H1134V459H1133V460H1132V459H1131V460H1130V459H1128V460H1124V459H1122V460H1119V459H1117V460H1116V459H1114V460H1111V459H1107V460H1105V459H1104V460H1103V459H1101V460H1098V459H1095V460H1093V459H1090V460H1088V459H1084V460H1081V459H1079V460H1078V459H1075V461H1074V460H1073V459H1070V460H1068V459H1066V460H1065V459H1063V460H1062V459H1061V460H1060V459H1059V460H1057V459H1056V460H1054V459H1053V460H1052V459H1051V460H1050V461H1049V460H1048V459H1047V460H1045V459H1044V460H1043V459H1040V460H1036V459H1035V460H1032V459H1030V460H1028V459H1026V460H1024V459H1023V460H1022V459H1020V460H1019V459H1018V460H1017V463H1016V460H1013V459H1012V460H1007V461H1006V460H1005V459H1003V460H1002V459H1001V460H998V459H996V460H994V459H993V460H988V459H987V460H986V459H985V460H983V459H982V460H981V459H980V460H978V459H977V460H974V459H972V460H971V459H968V460H967V459H966V460H965V461H964V459H963V460H962V459H961V460H960V459H959V460H955V459H954V460H952V459H949V460H939V459H938V460H937V459H934V460H933V459H932V460H931V459H928V460H921V459H918V460H913V461H912V459H910V460H906V459H905V460H903V459H902V460H899V459H898V460H895V459H893V460H890V459H889V460H887V459H882V460H881V459H880V460H878V459H877V460H875V459H873V460H872V459H871V460H869V459H867V460H866V459H865V460H863V459H862V460H860V459H859V460H858V459H856V460H854V459H852V460H847V459H845V460H844V459H842V461H841V460H838V459H832V460H831V459H830V460H829V459H828V460H827V459H826V460H825V459H824V460H822V459H821V460H820V459H819V460H816V459H815V460H814V459H812V460H811V459H806V460H805V461H804V460H801V461H800V460H797V459H794V460H793V459H790V460H788V459H787V460H784V459H781V460H779V459H778V460H775V459H773V460H772V459H771V460H770V459H765V460H762V459H761V460H756V459H753V460H752V459H749V460H748V459H747V460H739V459H737V460H736V459H735V460H732V459H728V460H722V459H720V460H717V459H716V460H715V459H713V460H710V459H709V460H708V459H707V460H706V459H705V460H704V459H703V460H700V459H695V460H694V459H690V460H689V459H688V460H686V459H683V460H682V459H681V460H680V459H677V460H676V459H675V460H674V459H673V460H672V459H671V460H670V459H669V460H667V459H666V460H664V459H663V460H662V459H661V460H660V459H657V460H656V459H654V460H651V459H650V460H648V459H646V460H645V459H644V460H638V459H632V460H630V459H629V460H627V459H626V460H622V459H619V460H618V459H617V460H616V459H615V460H612V459H610V460H608V459H607V461H606V459H605V460H601V459H596V460H589V459H585V460H583V459H582V460H578V459H576V460H575V459H573V460H571V461H570V459H569V460H568V459H567V460H566V459H565V460H564V459H556V460H555V459H554V460H551V459H550V460H547V459H546V460H540V459H539V460H537V459H536V460H534V459H533V460H528V461H527V464H526V461H525V462H524V460H523V462H522V460H521V462H520V460H519V461H516V463H515V464H514V461H513V462H511V461H510V460H508V459H507V460H504V459H503V460H502V461H499V464H498V462H496V461H494V460H493V461H492V462H491V460H490V461H489V462H487V460H484V459H483V460H482V459H481V460H480V459H478V460H477V459H474V460H473V459H472V460H471V459H468V460H467V459H465V460H464V459H463V460H462V459H461V460H459V459H458V460H457V459H456V461H455V460H454V459H453V460H451V461H450V460H447V459H446V460H443V459H442V460H440V459H439V460H438V459H435V460H434V459H433V460H430V459H429V461H428V460H427V459H426V460H425V459H424V460H423V459H421V460H420V459H418V460H417V459H415V460H412V459H411V460H408V459H401V460H400V459H398V460H395V459H394V460H392V459H391V460H390V459H385V460H384V459H383V460H382V459H381V460H380V459H379V460H377V459H375V460H374V459H372V460H370V459H367V460H366V459H365V460H362V459H360V460H358V459H356V460H353V459H352V460H344V459H342V460H338V459H337V460H333V459H332V460H331V459H330V460H325V459H323V460H321V459H318V461H317V459H316V460H315V459H314V460H312V461H311V464H310V463H309V462H308V463H307V462H306V461H305V463H304V464H303V463H302V462H301V463H299V464H298V463H297V464H294V462H293V463H292V465H291V467H290V486H289V467H288V464H286V462H284V463H282V464H281V462H278V461H277Z"/>
<path d="M277 486H283V485H284V486H285V485H286V486H297V485H299V486H308V485H309V486H312V485H313V486H314V485H315V486H328V485H329V486H333V485H335V486H345V485H346V486H351V485H353V486H366V485H367V486H372V485H373V486H395V485H398V486H423V485H424V486H430V485H431V486H442V485H443V486H481V485H482V486H484V485H485V486H492V483H493V486H494V485H495V486H506V485H507V486H508V485H509V486H510V485H511V486H518V485H519V486H526V485H529V486H530V485H531V486H540V485H542V486H544V485H545V486H558V485H559V486H593V485H594V486H599V485H600V486H609V485H610V486H613V485H616V486H627V485H628V486H629V485H630V486H639V485H640V486H657V485H658V486H662V485H663V486H666V485H667V486H673V485H674V486H675V485H677V486H683V485H684V486H706V485H707V486H722V485H723V486H727V485H728V486H738V485H739V486H742V485H743V486H754V485H756V486H761V485H762V486H767V485H768V486H770V485H773V486H781V485H783V486H786V485H787V486H791V485H792V486H801V485H803V486H835V485H836V486H837V485H838V486H849V485H851V486H852V484H853V486H878V485H879V486H888V485H889V486H892V484H893V486H899V485H900V486H902V485H903V486H905V485H906V486H913V485H916V486H926V485H927V486H930V485H931V486H948V485H949V486H954V485H955V486H962V485H963V486H965V485H966V486H968V485H970V486H981V485H982V486H983V485H984V486H986V485H987V486H1004V485H1005V486H1035V485H1036V486H1039V485H1040V486H1042V485H1043V486H1048V485H1049V486H1068V484H1069V486H1073V485H1074V486H1078V485H1079V486H1087V485H1088V486H1091V485H1092V486H1095V485H1096V486H1111V485H1112V486H1120V485H1122V482H1123V485H1124V486H1125V485H1126V486H1132V485H1133V486H1143V485H1144V486H1146V485H1147V486H1151V485H1152V486H1154V485H1155V486H1164V485H1166V486H1171V485H1172V486H1174V485H1175V486H1198V485H1199V486H1203V485H1204V486H1215V485H1217V486H1218V485H1219V486H1228V485H1229V486H1230V485H1231V486H1241V485H1242V486H1244V485H1246V486H1248V485H1249V486H1256V485H1257V486H1267V485H1269V486H1276V485H1277V486H1281V485H1282V486H1293V485H1295V486H1308V484H1309V486H1321V485H1322V486H1327V485H1330V486H1332V485H1333V486H1335V485H1336V486H1358V485H1359V486H1373V485H1374V486H1380V485H1381V486H1382V485H1384V486H1390V485H1391V486H1402V490H1400V491H1399V490H1396V491H1395V490H1388V491H1386V490H1383V491H1382V490H1377V491H1376V490H1373V491H1372V490H1368V491H1366V490H1357V491H1356V490H1351V491H1350V490H1347V491H1346V490H1344V491H1343V490H1336V491H1335V490H1326V491H1323V490H1322V491H1318V490H1317V491H1314V490H1313V491H1311V490H1309V491H1307V490H1305V491H1304V490H1302V491H1301V490H1298V491H1297V490H1296V491H1295V490H1290V491H1289V490H1286V491H1285V490H1281V491H1280V490H1279V491H1276V490H1270V491H1269V490H1268V491H1267V490H1265V491H1264V490H1263V491H1261V490H1260V491H1257V490H1252V492H1251V490H1249V491H1247V490H1246V491H1245V490H1241V491H1240V490H1238V491H1236V490H1234V491H1233V490H1227V491H1226V490H1224V491H1222V490H1220V492H1219V491H1218V490H1211V491H1210V490H1207V491H1206V490H1200V491H1199V490H1196V491H1195V490H1189V491H1187V490H1185V491H1184V490H1183V491H1182V490H1181V491H1180V490H1177V491H1175V490H1174V491H1171V490H1170V491H1169V490H1166V491H1164V490H1163V491H1161V490H1159V491H1158V490H1157V491H1155V490H1154V491H1153V490H1151V491H1149V490H1146V491H1145V490H1141V491H1140V490H1132V491H1131V490H1124V491H1123V494H1122V491H1121V490H1120V491H1119V490H1118V491H1117V490H1115V491H1114V490H1111V491H1110V490H1097V491H1095V490H1092V491H1090V490H1087V491H1086V490H1083V491H1082V490H1081V491H1080V490H1077V491H1075V490H1068V491H1067V490H1066V491H1065V490H1064V491H1062V490H1043V491H1041V490H1030V491H1027V490H1023V491H1021V490H1019V491H1018V490H1017V491H1016V490H1015V491H1014V490H1006V491H1004V490H994V491H993V490H985V491H982V490H980V491H979V490H977V491H976V490H974V491H973V490H965V491H964V490H961V491H960V490H958V491H957V490H952V491H950V490H949V491H947V490H946V491H944V490H941V491H940V490H933V491H931V490H930V491H929V490H921V491H920V490H904V491H903V490H902V491H901V490H898V491H897V490H896V491H891V490H890V491H889V490H888V491H887V490H883V491H882V490H881V491H880V490H879V491H878V490H876V491H875V490H874V491H873V490H867V491H866V490H863V491H862V490H861V491H856V490H846V491H845V490H840V491H837V490H832V492H831V490H825V491H824V490H821V491H820V490H813V491H811V490H808V491H807V490H806V491H805V490H803V491H802V490H796V491H795V490H793V492H792V491H791V490H790V491H789V490H786V491H785V490H780V491H779V490H777V491H776V490H775V492H774V490H769V491H768V490H761V491H759V490H754V491H751V490H743V491H741V490H737V491H734V490H732V491H731V490H730V491H729V490H728V491H727V490H726V491H725V490H724V491H722V490H719V491H717V490H715V491H714V490H709V491H708V490H707V491H703V490H701V491H700V490H693V491H691V490H686V491H684V490H682V491H681V490H673V491H672V490H666V491H663V490H660V491H659V490H656V491H655V490H653V491H650V490H648V491H647V490H646V491H645V490H641V491H640V490H637V491H636V490H631V491H630V490H628V491H627V490H623V491H622V490H617V491H615V490H608V491H605V490H601V491H599V490H598V491H597V490H595V491H594V490H593V491H592V490H591V491H589V490H588V491H586V490H585V491H584V490H583V491H582V490H579V491H578V490H577V491H576V490H575V491H574V490H570V491H569V490H566V491H565V490H563V491H562V490H561V491H559V490H552V492H551V491H549V490H545V491H544V490H537V491H536V490H534V491H533V490H531V491H530V490H528V491H527V490H523V492H522V491H521V490H520V491H519V490H508V491H507V490H502V491H501V490H496V491H495V490H493V493H492V491H491V490H478V491H477V490H476V491H474V490H471V491H470V490H467V491H465V490H462V491H461V490H450V491H448V490H441V491H440V490H433V491H432V490H429V492H428V490H427V491H425V490H422V491H420V490H418V491H417V490H414V491H413V490H411V491H409V490H402V491H401V490H397V491H396V490H391V491H390V492H389V490H387V491H386V490H381V491H379V490H377V491H376V490H372V491H371V490H366V491H365V490H363V491H361V490H360V491H359V490H357V491H354V490H348V491H347V490H342V491H341V490H328V491H327V490H324V491H323V490H322V491H321V490H317V491H316V490H312V491H311V490H297V491H295V490H286V491H284V490H279V491H278V490H277Z"/>
<path d="M277 516H278V517H281V516H282V517H284V516H290V517H292V516H293V515H294V511H295V515H296V516H299V517H300V516H301V517H302V516H303V517H305V516H306V517H311V516H315V517H317V516H318V517H319V516H320V517H321V515H322V517H323V516H326V517H329V516H338V517H339V516H340V517H341V516H342V517H344V516H348V514H349V509H350V514H351V516H352V517H353V516H354V517H356V516H360V517H362V516H364V517H367V516H368V517H369V515H370V516H372V517H374V516H380V517H381V516H382V517H383V516H384V517H387V516H388V517H389V516H394V517H396V516H397V517H398V516H401V517H402V516H403V517H405V516H406V517H407V516H408V517H410V516H411V517H412V516H413V517H415V516H417V517H420V516H425V517H426V516H429V517H430V516H431V517H432V516H434V517H435V516H438V517H440V516H442V517H445V516H447V517H448V516H449V517H450V516H452V517H460V516H462V517H463V516H466V517H467V516H470V517H471V516H472V517H474V516H476V517H477V516H480V517H484V516H487V517H488V516H490V517H491V516H492V517H493V516H494V517H496V516H498V517H499V516H500V515H502V514H503V513H505V515H506V513H507V514H508V515H509V514H510V515H512V513H514V516H515V514H516V515H518V516H519V517H520V516H522V517H524V516H526V517H527V516H529V517H531V516H534V517H535V516H540V517H543V516H544V517H545V516H547V517H548V516H549V517H551V516H552V517H553V516H554V517H557V516H558V517H560V516H561V517H562V516H563V517H564V516H565V517H566V516H567V517H569V516H570V517H572V516H573V517H576V516H578V517H586V516H589V517H591V516H597V517H598V516H599V517H601V516H604V517H605V515H606V516H608V517H609V516H610V517H611V516H613V517H615V516H618V515H619V517H620V516H621V517H622V516H624V517H630V516H634V517H635V516H637V517H640V515H641V516H644V517H645V516H647V517H648V515H649V516H651V517H652V516H654V517H658V516H664V517H666V516H667V517H668V516H670V515H671V517H672V516H675V517H679V516H682V517H683V516H684V517H685V516H686V517H687V516H688V517H690V516H692V517H696V516H697V513H698V516H700V517H702V516H703V517H704V516H705V517H707V516H712V517H713V516H714V517H715V516H718V517H720V516H721V517H726V516H728V517H729V516H730V517H731V516H732V517H733V516H734V517H736V516H744V517H745V516H746V517H747V516H749V517H750V516H751V517H752V516H755V517H756V516H758V517H761V516H762V517H764V516H766V517H767V516H768V517H769V516H774V517H779V516H780V517H781V516H784V517H785V516H786V517H787V516H788V517H791V516H794V517H799V516H801V517H802V516H805V517H808V516H809V517H811V516H813V517H815V516H817V517H818V516H820V517H821V516H826V515H827V516H828V513H829V516H830V515H831V516H832V517H833V516H835V517H836V516H837V517H838V516H839V517H840V516H841V517H842V516H847V517H849V516H850V517H851V516H852V517H853V516H855V517H856V516H857V517H862V515H863V517H864V516H865V517H866V516H867V517H868V516H870V517H871V516H875V517H876V516H878V517H879V516H880V517H881V516H884V515H885V516H886V517H890V516H892V517H893V516H894V517H897V516H898V517H899V516H900V517H902V516H903V515H904V517H905V516H906V517H907V516H908V517H910V516H912V517H913V516H915V517H916V516H922V517H923V516H924V517H925V516H926V517H927V516H928V517H931V516H932V517H933V516H934V517H937V516H942V517H945V515H946V517H947V516H950V517H952V516H954V517H958V516H959V517H961V516H969V517H975V516H979V517H982V516H983V517H984V516H986V517H987V516H988V517H989V516H990V517H991V516H992V517H995V516H997V515H998V516H1004V517H1008V516H1011V517H1014V516H1016V517H1017V516H1018V517H1022V516H1023V517H1024V516H1025V517H1026V516H1028V517H1030V516H1032V517H1033V516H1035V517H1037V516H1038V517H1039V516H1040V517H1041V516H1044V517H1045V516H1048V517H1049V516H1050V517H1053V516H1054V517H1055V516H1057V517H1059V516H1063V515H1064V516H1067V517H1068V516H1074V517H1077V516H1079V517H1080V516H1082V517H1083V516H1084V517H1089V516H1091V517H1096V516H1098V517H1099V516H1100V517H1105V516H1106V517H1107V516H1111V517H1114V516H1116V517H1118V516H1119V517H1121V516H1123V517H1125V516H1126V517H1127V515H1128V516H1131V517H1132V516H1133V517H1134V516H1135V517H1136V516H1140V515H1141V517H1144V516H1145V517H1147V516H1148V517H1149V516H1154V517H1155V516H1158V517H1159V516H1162V517H1165V516H1166V517H1168V516H1169V517H1170V516H1173V517H1176V516H1179V517H1182V516H1186V517H1187V516H1188V517H1191V516H1193V517H1199V516H1200V517H1201V516H1206V517H1207V516H1208V517H1209V516H1218V514H1219V515H1220V516H1221V514H1222V516H1226V515H1228V516H1229V515H1230V513H1231V515H1232V516H1233V515H1234V516H1235V515H1236V516H1238V517H1240V516H1241V517H1242V516H1244V517H1245V516H1246V517H1247V516H1248V517H1249V516H1250V517H1254V516H1257V517H1259V516H1261V517H1262V516H1263V517H1264V516H1268V517H1269V516H1270V517H1271V516H1274V517H1275V516H1277V517H1284V516H1285V517H1287V516H1289V517H1293V516H1294V517H1295V516H1296V517H1298V516H1300V517H1302V516H1303V517H1304V516H1311V517H1315V516H1317V517H1318V516H1319V517H1320V516H1322V515H1323V517H1324V516H1326V517H1327V516H1329V517H1330V516H1331V517H1333V516H1335V517H1338V516H1340V517H1341V516H1342V517H1344V516H1346V517H1348V516H1349V517H1351V516H1355V517H1358V516H1359V517H1360V516H1362V517H1366V516H1368V517H1369V516H1375V517H1377V516H1379V517H1380V516H1381V517H1384V516H1387V517H1388V516H1392V517H1393V516H1395V517H1396V516H1397V517H1398V516H1399V517H1402V521H1400V520H1399V521H1398V520H1397V522H1396V520H1394V521H1392V520H1389V521H1386V520H1385V521H1383V520H1382V521H1378V520H1377V521H1376V520H1375V521H1374V520H1372V521H1371V520H1366V521H1365V520H1364V521H1358V520H1356V521H1352V520H1349V521H1346V520H1345V521H1344V520H1343V521H1341V520H1336V521H1335V520H1334V521H1324V520H1322V522H1321V521H1319V520H1315V521H1312V520H1311V521H1310V520H1309V522H1308V520H1305V521H1301V520H1300V521H1299V520H1296V521H1294V520H1292V521H1291V520H1290V521H1288V520H1286V521H1282V522H1281V521H1280V520H1276V521H1275V520H1273V521H1272V520H1268V521H1267V520H1266V521H1264V520H1261V521H1258V520H1256V521H1255V520H1254V521H1253V520H1251V521H1250V520H1242V521H1241V520H1240V521H1235V520H1232V521H1231V523H1230V521H1228V522H1226V521H1225V522H1222V521H1221V520H1220V521H1218V520H1217V522H1216V521H1215V520H1214V521H1213V520H1210V521H1205V520H1200V521H1199V520H1198V521H1192V520H1191V521H1188V520H1187V522H1186V521H1184V520H1183V521H1181V520H1177V521H1175V520H1171V521H1169V520H1167V521H1165V520H1164V521H1162V520H1160V521H1159V520H1156V521H1152V520H1151V521H1149V520H1148V521H1147V520H1146V521H1143V520H1139V521H1136V520H1135V521H1133V520H1132V521H1131V520H1130V521H1129V520H1128V521H1127V520H1126V521H1125V520H1124V521H1123V520H1121V521H1119V520H1117V521H1116V520H1113V521H1111V522H1110V520H1107V521H1104V520H1102V521H1100V520H1096V521H1094V520H1091V521H1090V520H1087V521H1085V520H1084V521H1083V520H1081V521H1080V520H1079V521H1076V520H1075V521H1074V520H1072V521H1071V520H1068V521H1067V520H1066V522H1065V521H1063V520H1062V521H1061V520H1059V521H1058V520H1057V522H1056V520H1054V521H1052V520H1049V521H1048V520H1047V521H1046V520H1044V521H1043V520H1041V521H1037V520H1036V521H1035V522H1034V521H1032V520H1024V521H1023V520H1021V521H1019V520H1016V521H1011V520H1010V521H1006V520H1004V521H1003V520H1000V521H998V520H997V521H995V520H992V521H991V520H989V521H986V522H985V520H984V521H981V520H980V521H979V520H978V522H977V521H976V520H975V521H974V520H973V521H972V520H971V522H970V521H969V520H968V521H966V520H965V521H963V520H959V521H956V520H954V521H953V520H952V521H948V520H946V521H945V520H943V521H940V520H939V521H934V520H931V521H930V520H925V521H923V520H922V521H921V520H920V521H919V520H916V521H915V520H912V521H910V520H909V521H907V520H905V521H904V520H902V522H901V521H900V520H898V521H893V520H889V521H885V520H881V521H879V520H876V521H875V520H874V521H871V520H870V521H868V520H867V521H865V520H864V521H862V520H860V521H858V520H852V521H851V520H849V521H847V520H846V521H844V520H840V521H839V520H837V521H836V520H835V521H834V520H832V522H829V520H828V522H827V521H826V522H824V521H823V520H819V522H818V521H816V520H815V521H813V520H806V521H805V520H803V521H802V520H799V521H795V520H794V521H793V520H792V522H791V520H789V521H788V520H787V521H783V520H782V522H781V520H777V521H776V520H772V521H771V520H770V522H769V521H767V520H766V521H763V520H761V521H760V522H759V520H755V522H753V520H752V521H751V520H750V521H749V520H747V521H746V520H743V521H739V520H737V521H733V520H731V521H730V522H729V520H727V521H726V520H725V521H724V520H720V521H719V520H717V521H716V520H713V521H711V520H710V521H709V520H708V521H707V520H706V521H704V520H700V521H699V520H698V523H697V520H696V521H693V520H688V521H687V520H685V521H683V520H681V521H680V520H678V521H672V520H671V521H669V520H668V521H660V520H658V521H655V520H654V521H653V520H651V521H648V520H644V521H641V520H640V521H638V520H637V521H634V520H633V521H631V520H628V521H626V520H625V521H624V520H622V521H620V520H616V521H615V522H614V521H613V520H611V521H609V520H605V521H603V520H602V521H601V520H600V521H598V520H597V521H593V520H584V521H583V520H582V521H581V520H580V521H579V520H576V521H572V520H569V521H565V520H564V521H563V520H562V521H558V520H557V521H555V520H554V521H551V520H550V521H549V520H548V521H546V520H544V521H543V522H542V520H541V521H538V520H533V521H532V520H529V521H528V520H527V521H524V520H518V522H516V521H515V522H514V520H513V523H512V521H511V523H510V521H508V523H507V522H506V520H505V521H502V520H501V521H499V520H494V521H492V520H490V521H489V520H487V521H486V520H483V521H482V520H479V521H478V520H477V521H476V520H473V521H472V520H469V521H467V520H465V521H464V520H463V521H462V520H460V521H459V520H457V521H452V520H449V521H447V520H446V521H445V520H444V521H442V522H441V521H440V520H439V521H434V520H431V521H429V520H428V521H427V520H424V521H423V520H421V521H420V520H416V521H415V520H412V521H407V520H406V521H405V520H404V521H402V520H397V521H395V520H394V521H391V520H389V521H387V520H383V521H381V520H375V521H371V520H370V521H369V520H367V521H366V520H365V521H360V520H359V521H358V520H357V521H355V520H354V521H352V520H351V522H350V527H349V522H348V521H347V520H346V521H345V520H341V521H338V520H337V521H336V520H333V521H332V520H331V521H330V520H327V521H323V520H321V521H320V520H319V521H317V520H314V521H312V520H311V521H308V520H307V521H303V520H301V522H300V520H299V521H297V520H296V521H295V525H294V521H293V520H290V521H287V520H285V521H278V520H277Z"/>
<path d="M277 547H278V546H279V547H283V546H285V547H287V546H289V547H301V546H302V547H303V546H304V547H306V546H308V547H311V546H312V547H315V546H316V542H317V546H318V547H319V546H320V547H333V546H334V547H345V546H346V547H347V546H348V547H352V546H353V547H367V546H369V547H372V546H374V547H377V546H378V547H382V546H383V547H410V546H412V547H414V546H415V547H416V546H417V547H418V546H419V547H420V546H421V547H423V546H424V547H425V546H426V547H429V545H430V547H437V546H439V547H445V546H446V547H464V546H465V547H473V546H475V547H478V546H480V547H481V546H482V545H483V547H490V546H492V547H494V546H496V547H506V546H508V547H510V546H512V547H514V546H515V547H521V546H522V547H536V546H537V547H540V546H541V547H543V546H544V547H545V546H546V547H554V546H555V547H556V546H557V547H562V546H563V547H569V546H570V547H580V546H581V547H587V546H589V547H590V546H591V547H592V546H593V547H595V546H596V547H599V546H601V547H602V546H603V547H614V546H615V547H618V546H619V547H621V546H627V547H629V546H630V547H632V546H633V547H639V545H640V547H641V546H642V547H646V546H647V547H652V546H654V547H659V546H661V547H675V546H676V547H678V546H679V547H682V546H684V547H689V546H690V547H692V546H693V547H696V546H697V547H705V546H709V547H715V546H716V547H720V546H723V547H739V546H741V547H742V546H743V547H753V546H754V547H755V546H756V547H757V546H759V547H760V546H761V547H776V546H777V547H778V546H779V547H784V546H785V547H787V546H788V547H790V546H791V547H798V546H799V547H803V546H804V547H806V546H807V547H808V546H810V547H818V546H819V547H821V546H823V547H824V546H826V547H845V546H846V547H850V546H852V547H859V546H861V547H868V546H869V547H877V546H878V547H880V546H881V547H883V546H884V547H888V546H890V547H893V546H894V547H901V546H902V547H905V546H906V545H907V547H909V546H910V547H913V546H914V547H917V546H918V547H923V546H924V547H926V546H927V547H928V546H929V547H935V546H936V547H937V546H938V547H939V546H941V547H943V546H945V547H948V546H949V547H951V546H952V547H954V546H955V547H959V546H960V547H961V546H962V547H973V546H975V547H981V546H982V547H983V546H984V547H990V546H991V547H997V546H998V547H999V546H1000V547H1004V546H1005V547H1007V546H1008V547H1012V546H1013V547H1015V546H1016V547H1017V546H1019V547H1023V546H1025V547H1031V546H1032V547H1034V546H1035V547H1038V546H1040V547H1041V546H1042V547H1043V546H1045V547H1058V546H1059V547H1060V546H1061V547H1067V546H1068V543H1069V546H1070V547H1077V545H1078V546H1079V547H1082V546H1083V547H1086V546H1088V547H1094V546H1095V547H1100V546H1104V547H1106V546H1107V547H1110V546H1111V547H1115V546H1116V547H1124V546H1125V547H1147V546H1149V547H1154V546H1155V547H1158V546H1161V547H1163V546H1164V547H1167V546H1168V547H1171V546H1172V547H1180V546H1181V547H1191V546H1192V547H1194V546H1195V547H1202V546H1203V547H1205V546H1207V547H1225V545H1226V546H1228V547H1229V546H1230V547H1236V546H1237V547H1239V546H1240V547H1247V546H1248V547H1255V546H1258V547H1261V545H1262V547H1264V546H1265V547H1267V546H1268V547H1273V546H1274V547H1288V546H1290V545H1291V547H1295V546H1296V547H1299V546H1300V547H1301V546H1302V547H1308V546H1309V547H1311V546H1312V547H1313V546H1314V547H1318V546H1319V547H1323V546H1324V547H1329V546H1330V547H1333V546H1334V547H1337V546H1338V545H1339V547H1345V546H1347V547H1358V546H1359V547H1360V546H1362V547H1366V546H1368V547H1369V546H1370V547H1377V546H1378V547H1380V546H1381V547H1383V546H1384V547H1386V546H1387V547H1391V546H1392V547H1399V546H1402V551H1397V553H1396V551H1394V552H1393V551H1390V552H1389V551H1387V552H1386V551H1379V552H1378V551H1377V552H1376V551H1366V552H1365V551H1362V553H1361V552H1360V551H1342V552H1341V551H1340V552H1339V551H1337V552H1336V553H1335V552H1334V551H1327V552H1326V551H1323V552H1322V551H1311V552H1310V551H1300V552H1299V551H1297V552H1296V551H1295V552H1294V551H1292V552H1291V551H1286V552H1283V551H1277V552H1276V551H1273V552H1272V551H1264V552H1263V551H1262V552H1261V551H1256V552H1255V551H1254V552H1253V551H1249V552H1248V551H1242V552H1241V551H1237V552H1236V551H1233V552H1232V551H1231V552H1228V551H1224V552H1223V551H1222V552H1220V551H1219V552H1218V551H1210V552H1208V551H1205V552H1204V551H1203V552H1201V551H1190V552H1189V551H1186V552H1185V551H1184V552H1183V551H1170V552H1168V551H1166V552H1165V551H1163V552H1161V551H1157V552H1156V551H1153V552H1152V551H1150V552H1149V551H1146V552H1145V551H1142V552H1140V551H1137V552H1136V551H1119V552H1118V551H1111V552H1110V551H1107V552H1106V551H1099V552H1098V551H1092V552H1091V551H1089V552H1087V551H1081V553H1080V551H1078V552H1077V551H1072V552H1069V555H1068V552H1067V551H1060V552H1059V551H1047V552H1046V551H1044V552H1043V551H1039V552H1038V551H1033V552H1031V551H1026V552H1025V551H1010V552H1008V551H1006V552H1005V551H1003V552H1001V551H993V552H992V551H987V552H986V551H985V552H984V551H983V552H981V551H979V552H978V551H969V552H968V551H965V552H964V551H963V552H962V551H961V553H959V551H958V552H957V551H940V552H938V551H929V552H928V551H926V552H924V551H919V552H918V551H917V552H916V551H915V552H914V551H911V552H910V551H902V552H901V551H898V552H896V551H893V552H892V551H891V552H890V551H886V552H885V551H882V552H881V551H876V552H875V551H874V552H872V551H869V552H868V551H866V552H865V551H863V552H862V551H847V552H846V551H845V552H844V551H843V552H842V551H840V552H839V551H837V552H836V551H834V552H833V551H829V552H828V551H827V552H826V551H823V552H822V551H818V552H815V551H812V552H809V551H807V552H806V551H799V552H798V551H790V552H789V551H785V552H783V551H778V552H776V551H774V552H773V551H748V552H747V551H745V552H744V551H743V552H741V551H738V552H736V551H735V552H734V551H732V552H731V551H722V552H721V551H718V552H717V551H716V552H715V551H711V552H710V551H708V552H707V551H705V552H704V551H699V552H698V551H695V552H694V551H693V552H692V551H691V552H690V551H688V552H687V551H681V552H680V551H679V552H678V551H674V553H673V551H672V552H671V551H670V552H669V551H667V552H665V551H659V552H658V551H657V552H656V551H654V552H653V551H644V552H642V551H636V552H634V551H624V552H623V551H619V553H618V551H617V552H616V551H613V552H612V551H601V552H599V551H596V552H595V551H594V552H593V551H589V552H588V551H575V552H574V551H565V552H564V551H562V552H561V551H559V552H557V551H556V552H555V551H554V552H553V551H552V552H551V551H548V552H546V551H542V553H541V551H540V552H539V551H537V552H534V551H520V552H519V551H514V552H513V551H510V552H509V551H508V552H506V551H505V552H504V551H501V552H500V551H494V552H493V551H492V552H490V551H487V552H486V551H483V552H482V551H477V552H476V551H473V552H472V551H468V552H467V551H466V552H465V551H459V552H458V551H457V552H455V551H449V552H447V551H437V552H436V551H429V552H428V551H421V552H420V551H418V552H417V551H416V552H415V551H407V552H406V551H398V552H396V551H386V552H385V551H382V552H381V551H380V552H377V551H373V552H372V551H363V552H362V551H360V552H359V551H355V552H354V551H349V552H348V551H347V552H346V551H344V552H343V551H339V552H337V551H332V552H330V551H328V552H327V551H318V552H317V556H316V552H315V551H312V552H309V551H289V552H288V551H285V552H284V551H277Z"/>
<path d="M277 577H280V576H282V577H284V576H285V577H293V576H294V577H295V576H297V577H302V576H303V577H307V575H308V577H315V575H316V576H317V577H333V576H335V577H337V576H338V577H343V576H344V577H345V576H346V577H348V576H349V577H351V576H352V577H353V576H354V577H356V576H357V577H358V576H360V577H363V576H365V577H366V576H367V577H368V576H369V577H373V576H374V577H375V575H376V577H379V576H380V577H383V576H384V577H387V576H388V577H389V576H390V577H393V576H394V577H396V575H397V577H400V576H401V577H406V576H408V577H419V576H421V577H423V576H424V577H425V576H427V577H429V576H431V577H432V576H433V577H445V576H446V577H447V576H450V577H454V576H455V577H456V576H457V577H463V576H465V577H468V576H470V577H471V576H472V577H474V576H475V577H476V576H477V577H479V576H480V577H481V576H483V577H485V576H486V577H491V576H493V577H496V576H497V577H503V576H504V577H507V576H508V577H510V576H512V577H513V576H514V577H515V576H518V577H521V576H523V577H526V576H527V577H530V576H531V577H535V576H537V577H540V576H541V577H544V576H545V577H548V576H549V577H551V576H552V577H556V576H557V577H558V576H559V577H565V576H570V577H571V576H573V577H574V576H576V577H577V576H578V577H579V576H581V577H587V576H589V577H596V576H598V577H601V576H602V577H603V576H604V577H607V576H613V577H615V576H616V572H617V576H618V577H626V576H628V577H631V576H632V577H634V576H636V577H637V576H638V577H640V576H641V577H645V576H646V577H647V576H648V577H655V576H656V577H661V575H662V577H664V576H665V577H678V576H679V577H682V576H683V577H688V576H690V577H691V576H692V577H693V576H694V577H698V576H700V577H704V576H705V577H708V576H709V577H711V576H712V577H719V576H720V577H721V576H722V577H731V576H732V577H733V576H734V577H735V576H736V577H737V576H738V577H741V576H744V577H745V576H746V577H747V576H748V577H751V576H752V577H754V576H756V577H763V576H764V577H765V575H766V577H776V575H777V576H780V577H788V575H789V577H793V576H794V577H795V576H796V577H802V576H803V577H805V575H806V576H807V577H815V575H816V577H822V576H823V577H831V576H834V577H836V576H837V577H838V576H839V577H840V576H841V577H842V576H844V577H847V576H849V577H852V576H853V577H855V576H858V577H860V576H861V577H862V576H863V577H864V576H865V577H870V576H871V577H878V576H879V577H884V576H885V577H891V576H893V577H894V576H895V577H896V576H897V577H900V576H901V577H906V576H908V577H909V576H913V577H914V576H915V577H917V576H918V577H923V575H924V577H927V576H929V575H931V576H932V575H933V576H936V575H937V577H938V575H941V577H942V576H946V577H947V576H948V577H949V576H952V575H953V576H954V575H955V576H958V577H959V575H960V576H962V577H963V576H964V575H966V577H967V576H971V575H972V576H973V577H974V575H975V576H978V575H981V576H982V575H983V576H984V574H985V576H986V577H991V576H992V577H994V576H996V577H1001V576H1002V575H1003V577H1006V576H1008V577H1021V576H1022V577H1023V576H1024V577H1035V576H1036V577H1042V576H1043V577H1045V576H1046V577H1048V576H1049V577H1052V576H1053V577H1054V576H1055V577H1056V576H1059V577H1063V576H1064V577H1065V576H1066V577H1067V576H1068V577H1072V576H1073V577H1077V576H1079V577H1082V576H1084V577H1087V576H1088V577H1090V576H1092V577H1093V576H1094V577H1101V576H1103V577H1104V576H1105V577H1108V576H1110V577H1111V576H1112V577H1119V576H1122V577H1128V576H1129V577H1130V576H1131V577H1133V576H1136V577H1146V576H1147V577H1152V576H1153V577H1161V576H1162V577H1165V576H1166V577H1167V576H1168V577H1169V576H1170V577H1172V576H1173V577H1175V576H1176V577H1183V576H1184V577H1185V576H1186V577H1192V576H1197V577H1203V576H1204V577H1205V576H1206V577H1214V576H1215V577H1220V576H1222V577H1226V576H1228V577H1229V576H1233V577H1236V576H1237V577H1242V576H1243V577H1249V576H1250V577H1253V576H1254V577H1255V576H1261V577H1263V576H1264V577H1265V576H1266V577H1268V576H1270V577H1274V576H1276V577H1278V576H1279V577H1280V576H1281V577H1282V576H1286V577H1287V576H1288V577H1289V576H1291V577H1296V576H1297V577H1298V576H1300V577H1301V576H1302V577H1305V576H1306V577H1308V576H1310V577H1319V576H1320V577H1322V576H1324V577H1326V576H1328V577H1330V576H1331V577H1335V576H1336V577H1341V576H1343V577H1344V576H1345V577H1348V576H1350V577H1351V576H1352V577H1356V576H1358V577H1359V576H1360V577H1361V576H1362V577H1363V576H1365V577H1366V576H1367V577H1368V576H1370V575H1371V576H1372V575H1373V576H1375V575H1377V577H1380V576H1382V577H1384V576H1385V577H1391V576H1392V577H1394V576H1395V577H1397V576H1398V577H1400V576H1401V577H1402V581H1401V582H1400V581H1399V582H1397V581H1395V582H1394V581H1392V582H1391V581H1386V582H1385V581H1382V582H1381V581H1380V582H1379V581H1378V582H1374V581H1372V582H1369V581H1368V582H1367V583H1366V582H1365V583H1364V581H1362V583H1361V581H1359V582H1358V581H1352V582H1351V581H1349V582H1348V581H1343V582H1340V581H1339V582H1338V581H1331V582H1330V581H1325V582H1322V581H1318V583H1317V581H1316V582H1314V581H1310V582H1309V581H1307V582H1306V581H1304V582H1299V581H1297V582H1294V581H1289V582H1287V581H1284V582H1283V581H1280V582H1279V581H1276V582H1275V581H1273V582H1272V581H1268V582H1266V581H1260V582H1259V581H1258V582H1257V581H1252V582H1251V581H1250V582H1249V581H1242V582H1240V581H1238V583H1237V581H1231V582H1230V581H1229V582H1228V581H1225V582H1224V581H1219V582H1217V581H1215V582H1214V581H1213V582H1211V581H1198V582H1197V581H1192V582H1191V581H1185V582H1184V581H1179V582H1178V581H1176V582H1175V581H1174V583H1173V581H1164V582H1163V581H1162V582H1161V581H1154V582H1153V581H1148V583H1147V581H1146V582H1145V581H1141V582H1140V581H1139V582H1137V581H1132V583H1131V581H1124V582H1123V581H1121V582H1120V581H1114V582H1113V581H1108V582H1106V581H1105V582H1103V581H1100V582H1098V581H1096V582H1094V581H1092V582H1090V581H1087V582H1085V581H1082V582H1081V581H1077V582H1076V581H1071V582H1069V581H1067V582H1066V581H1065V582H1064V581H1061V582H1060V581H1056V582H1054V581H1052V582H1051V581H1048V582H1047V581H1045V582H1044V581H1042V582H1041V581H1040V582H1039V581H1037V583H1036V581H1030V582H1027V581H1024V582H1023V581H1021V582H1020V581H1013V582H1012V581H1009V582H1008V581H1007V582H1005V581H1004V582H1003V581H1000V582H998V581H991V582H989V581H985V584H984V582H982V581H980V582H979V581H978V582H975V581H974V582H973V583H972V581H971V583H970V582H968V583H967V581H966V583H965V582H964V583H963V582H962V581H961V582H959V583H958V582H957V583H956V582H954V583H953V582H951V583H949V582H948V581H947V582H944V583H942V582H938V583H937V582H935V583H934V582H933V581H932V583H930V581H929V582H928V581H926V583H925V581H912V582H911V581H909V582H907V581H904V582H903V581H900V582H898V581H896V582H895V581H887V582H884V581H883V582H882V581H868V582H867V581H863V582H862V581H861V582H860V581H856V582H855V581H854V582H852V581H848V582H847V581H846V582H844V581H840V582H838V581H834V582H833V581H824V582H823V581H813V582H812V581H811V582H809V581H797V582H796V581H791V582H787V581H785V582H783V581H782V582H781V581H779V582H778V581H773V582H771V581H768V582H767V581H762V582H761V581H758V582H757V581H750V582H749V581H744V582H743V581H742V582H741V581H737V582H734V581H733V583H732V581H730V582H729V581H721V582H720V581H708V582H707V581H703V582H702V581H694V582H692V581H690V582H689V581H688V582H687V581H684V582H683V581H679V582H677V581H676V582H675V581H674V582H673V581H671V582H670V581H667V582H666V581H662V582H661V581H659V582H658V581H656V582H655V581H653V582H652V581H649V582H648V581H644V582H643V581H640V582H638V581H637V582H634V581H631V582H627V581H623V582H622V583H621V581H619V582H617V586H616V582H615V581H613V582H612V581H610V582H608V581H603V582H602V581H601V582H600V581H599V582H598V581H596V582H595V581H592V582H589V581H588V582H587V581H580V582H579V581H577V582H576V581H571V582H570V581H567V582H566V581H564V582H561V581H559V582H557V581H556V582H555V581H554V582H553V581H550V582H549V581H546V582H545V581H541V582H540V581H538V582H537V581H535V582H533V581H530V582H529V581H524V582H523V581H517V582H516V581H513V582H510V581H500V582H499V581H491V582H490V581H488V582H487V581H485V582H484V581H483V582H481V581H478V582H477V581H472V582H471V581H470V582H468V581H467V582H465V581H460V582H458V581H457V582H456V581H446V582H445V581H442V582H441V581H440V582H439V581H435V582H434V583H433V581H431V582H429V581H423V582H421V581H417V582H415V581H411V582H410V581H408V582H407V581H406V582H404V581H403V582H402V581H401V582H399V581H393V582H390V581H389V582H388V581H387V582H385V581H384V582H382V581H380V582H379V581H375V582H374V581H372V582H371V581H370V582H369V581H366V583H365V581H361V582H360V581H346V582H345V581H334V582H333V581H330V582H329V581H324V582H323V581H322V582H320V581H317V582H316V581H315V582H314V581H305V582H304V581H301V582H300V581H298V582H295V581H293V582H292V581H289V582H288V581H283V582H282V581H281V582H280V581H277Z"/>
<path d="M277 608H278V607H280V608H282V607H285V608H286V607H289V608H291V607H292V608H296V606H297V608H298V607H299V608H300V607H304V608H305V606H306V608H307V607H308V608H310V607H311V608H313V607H316V608H317V607H319V608H320V607H322V608H323V606H324V607H325V608H326V607H327V608H328V607H329V608H330V607H335V608H336V607H340V608H341V607H343V608H344V606H345V608H347V607H352V608H356V606H357V608H359V607H360V608H361V607H368V608H369V607H373V608H375V607H377V608H378V607H380V608H381V607H382V608H383V607H388V608H389V607H393V606H394V608H395V607H398V608H400V607H405V608H407V607H409V608H411V607H412V608H413V607H415V608H416V607H417V608H418V607H419V608H420V607H424V608H426V607H428V608H429V607H430V606H431V608H432V607H436V608H437V607H441V608H442V607H444V608H445V607H447V608H448V607H450V608H451V607H452V608H453V607H456V608H459V607H463V608H464V607H465V608H467V607H469V608H470V607H471V608H473V607H474V608H477V607H478V608H479V607H480V608H481V606H482V608H485V607H488V608H489V607H490V608H491V607H494V608H500V607H501V608H502V607H503V608H504V607H505V606H507V608H511V607H512V608H515V607H517V608H519V607H520V608H521V606H522V607H523V608H524V607H529V608H534V607H535V606H536V607H539V608H541V607H548V608H550V607H551V608H553V607H555V608H556V607H558V608H560V607H561V608H564V607H568V606H569V608H570V607H572V608H573V607H574V608H575V607H576V608H579V607H580V608H585V607H591V608H592V607H593V608H597V607H598V608H599V607H600V608H601V607H602V608H603V607H604V608H606V607H610V608H611V607H614V608H615V607H617V608H619V607H623V608H624V607H626V608H627V607H629V608H630V607H631V608H632V607H634V608H635V607H636V606H637V607H644V608H646V607H647V608H648V607H655V608H656V607H657V608H658V607H659V608H662V607H663V608H668V607H669V608H670V607H676V608H677V607H681V608H682V607H683V608H689V607H691V608H694V607H695V608H698V607H700V608H701V607H702V608H703V607H712V608H714V607H715V608H716V607H717V608H718V607H719V608H722V607H724V608H726V607H727V608H729V607H730V608H731V607H734V608H736V607H737V608H741V607H744V608H746V607H749V608H751V607H754V608H755V607H756V608H757V607H762V608H763V607H766V606H767V607H769V608H772V607H773V608H774V607H775V608H776V607H778V606H780V607H782V608H784V607H786V608H787V607H790V608H791V607H794V608H795V606H796V607H797V608H798V607H800V608H801V607H803V608H804V607H806V608H808V607H810V608H813V607H814V608H815V607H817V608H818V607H819V608H820V607H821V608H823V607H825V608H827V607H830V608H831V607H834V608H835V607H836V606H837V608H839V607H841V608H842V607H845V608H846V607H847V608H848V607H850V608H851V607H852V608H853V607H856V606H857V608H858V607H860V606H861V607H862V608H867V607H870V608H871V607H872V608H873V607H874V608H875V607H880V608H882V607H883V608H885V607H888V608H890V607H894V608H895V607H896V608H897V607H898V608H899V606H900V608H901V607H904V608H905V607H906V608H909V607H911V608H913V607H916V608H917V607H918V608H919V607H920V608H921V607H922V608H923V607H933V608H937V607H938V608H939V607H941V608H944V607H946V608H947V607H949V608H950V607H953V608H954V607H956V608H957V607H958V608H959V606H960V608H964V607H966V608H969V607H971V608H972V607H973V608H974V607H975V608H978V607H979V608H982V607H983V608H984V607H985V608H989V607H990V608H991V607H997V608H999V607H1000V608H1001V607H1005V606H1006V608H1007V607H1008V608H1010V607H1013V608H1014V607H1016V608H1017V607H1019V608H1021V607H1022V608H1025V607H1026V608H1027V607H1030V608H1032V606H1033V608H1038V607H1041V608H1043V607H1046V608H1047V607H1048V608H1049V607H1056V608H1057V607H1059V608H1060V607H1061V608H1063V607H1069V608H1070V607H1071V608H1072V607H1073V608H1074V607H1076V608H1077V607H1079V608H1080V607H1081V608H1082V607H1083V608H1084V607H1085V608H1088V607H1089V608H1090V607H1091V608H1098V607H1101V608H1103V607H1112V608H1113V607H1114V608H1116V607H1117V608H1118V607H1119V608H1122V607H1126V608H1127V607H1131V606H1132V607H1135V608H1137V607H1138V608H1139V607H1141V606H1142V608H1143V606H1144V607H1145V608H1146V607H1149V608H1151V607H1153V608H1154V607H1156V608H1160V607H1163V608H1166V607H1167V608H1168V607H1171V606H1172V608H1173V607H1174V608H1178V607H1184V608H1185V607H1186V608H1187V607H1190V608H1192V606H1193V607H1196V608H1198V607H1200V608H1201V607H1204V608H1207V607H1211V608H1212V607H1214V608H1217V607H1219V608H1221V607H1222V608H1227V607H1228V608H1229V607H1231V608H1234V607H1235V608H1238V607H1239V608H1240V607H1243V608H1245V607H1246V608H1247V607H1248V608H1249V607H1250V608H1251V607H1253V608H1256V607H1257V608H1258V607H1261V608H1262V607H1264V608H1266V607H1269V608H1270V607H1271V608H1273V607H1274V608H1275V607H1276V608H1277V607H1278V608H1279V607H1280V608H1290V607H1293V608H1297V607H1299V608H1303V607H1304V608H1305V607H1306V608H1308V607H1310V608H1314V607H1318V608H1321V607H1324V608H1327V607H1328V608H1329V607H1330V608H1332V606H1333V607H1334V608H1335V607H1336V608H1337V607H1338V608H1340V607H1341V608H1342V607H1343V608H1344V607H1348V608H1349V607H1350V608H1351V607H1352V606H1353V607H1354V608H1356V606H1357V607H1360V608H1361V607H1362V608H1363V607H1364V608H1366V607H1367V608H1370V607H1373V608H1374V607H1376V608H1377V607H1379V608H1381V607H1382V608H1385V607H1386V608H1387V607H1390V608H1391V607H1393V608H1394V607H1397V608H1400V607H1402V611H1401V612H1398V611H1397V612H1396V611H1395V612H1394V611H1393V612H1392V611H1389V612H1381V611H1379V612H1376V611H1372V612H1371V613H1370V612H1367V611H1364V612H1363V611H1362V612H1359V611H1356V612H1355V611H1354V612H1352V611H1349V612H1346V611H1344V612H1340V611H1337V612H1334V611H1330V612H1328V611H1326V612H1325V611H1324V613H1323V611H1319V612H1317V611H1316V612H1314V611H1313V612H1312V611H1310V612H1309V611H1307V612H1306V611H1304V612H1303V611H1301V612H1300V611H1298V612H1297V611H1294V612H1293V611H1292V612H1291V611H1286V612H1284V611H1283V613H1282V611H1281V612H1280V611H1277V612H1276V611H1272V612H1271V611H1270V612H1269V613H1268V612H1267V611H1264V612H1262V611H1260V612H1256V611H1255V612H1253V611H1249V612H1247V611H1246V612H1244V611H1242V612H1239V611H1233V612H1232V611H1230V612H1229V611H1228V612H1224V611H1223V612H1220V611H1219V612H1217V613H1216V612H1214V611H1213V612H1211V611H1210V612H1209V611H1207V612H1204V611H1203V612H1202V611H1199V612H1198V611H1197V612H1196V611H1193V612H1192V611H1191V612H1189V611H1185V612H1184V611H1183V612H1182V611H1180V612H1176V611H1175V612H1173V611H1172V612H1171V613H1170V611H1169V612H1168V611H1167V612H1161V611H1160V612H1158V611H1152V612H1150V611H1148V612H1147V611H1146V612H1144V611H1142V612H1135V611H1134V612H1132V611H1130V612H1129V611H1126V612H1125V611H1124V612H1121V611H1119V612H1116V611H1113V612H1110V611H1105V612H1104V611H1102V612H1099V611H1098V612H1096V611H1089V612H1087V611H1084V612H1083V611H1080V612H1079V611H1077V612H1076V611H1073V612H1072V611H1070V612H1069V613H1068V611H1067V612H1065V611H1064V612H1060V611H1057V612H1056V611H1055V612H1051V611H1050V612H1049V611H1046V612H1043V611H1041V612H1039V611H1037V612H1036V611H1035V612H1034V611H1032V612H1029V611H1028V612H1027V611H1026V612H1025V611H1024V612H1023V611H1021V612H1019V611H1017V612H1015V611H1012V612H1011V611H1009V612H1008V611H1006V612H1003V611H1001V612H1000V611H999V612H998V611H997V612H996V611H995V612H991V611H990V612H986V611H984V612H983V611H982V612H981V611H980V612H979V611H977V612H975V611H971V612H968V611H967V612H966V611H965V612H961V611H960V612H956V611H955V612H954V611H952V612H951V611H949V612H946V611H945V612H944V613H943V611H942V612H941V611H939V612H938V611H937V612H936V611H934V612H933V611H931V612H929V611H927V612H925V611H924V612H923V611H922V612H919V611H918V613H917V611H916V612H913V611H912V612H910V611H908V612H906V611H905V612H904V613H903V612H902V611H901V612H899V611H897V612H895V611H894V612H890V611H889V612H887V611H885V612H884V611H883V612H882V611H880V612H877V611H876V612H875V613H874V611H869V612H866V613H865V611H862V612H861V611H857V612H854V611H849V612H848V611H846V612H841V611H840V613H839V611H834V612H833V611H832V612H831V611H828V612H827V611H826V612H825V611H824V612H817V611H816V612H814V611H813V612H812V611H811V612H809V611H806V612H805V611H802V612H801V611H800V613H799V612H798V611H797V612H796V611H795V612H794V611H792V612H790V611H789V612H788V611H787V612H785V611H784V612H782V611H781V612H780V611H779V612H778V611H777V612H776V611H774V612H773V611H772V612H770V611H769V612H767V611H764V612H762V611H761V612H760V611H758V612H756V611H754V612H751V611H750V612H749V611H747V612H743V611H739V612H738V611H735V612H734V611H733V612H732V611H731V612H730V611H728V612H725V611H724V612H723V611H721V612H720V611H717V612H716V611H713V612H712V611H709V612H708V611H707V612H706V611H704V612H703V611H702V612H700V611H699V612H698V611H695V612H694V611H693V612H692V611H689V612H687V611H686V612H685V611H684V612H682V611H681V612H679V611H674V612H672V611H670V612H669V611H667V612H666V611H663V612H662V611H659V612H658V611H657V612H656V611H652V612H651V611H648V612H644V611H639V612H638V611H637V612H636V611H634V612H633V611H631V612H630V611H627V612H626V611H624V612H623V611H620V612H618V611H617V612H614V611H613V612H612V611H611V612H610V611H605V612H604V611H602V612H599V611H597V612H595V611H594V612H593V613H592V611H591V612H590V611H588V612H586V611H585V612H583V611H581V612H579V611H577V612H576V611H573V612H572V611H571V613H570V612H568V611H567V612H566V611H565V612H562V611H561V612H560V611H559V612H556V613H555V612H553V611H552V612H551V611H550V612H549V613H548V611H547V612H543V611H542V612H541V611H538V612H536V611H535V612H532V611H530V612H528V611H524V612H518V611H513V612H508V611H507V612H506V611H505V612H503V611H498V612H495V611H489V613H488V611H486V612H485V611H483V612H481V611H479V612H478V611H477V612H471V611H470V612H468V611H463V612H462V611H460V612H459V611H458V612H455V611H453V612H452V611H448V612H447V611H445V612H444V611H443V613H442V612H440V611H435V612H434V611H433V612H431V611H430V613H429V611H428V612H427V611H421V612H420V611H419V612H418V611H416V612H414V611H413V612H412V611H411V613H410V612H409V611H408V612H406V611H405V612H403V611H402V612H401V611H400V612H399V611H397V612H396V611H394V612H392V611H391V612H389V611H388V612H385V611H384V612H383V611H381V612H380V611H379V612H377V611H376V612H375V611H374V612H373V611H369V612H365V611H363V612H362V611H361V612H357V611H356V612H352V611H351V612H348V611H347V612H346V611H344V612H342V611H341V612H340V611H339V612H338V611H337V612H336V611H335V612H333V611H332V612H327V611H326V612H320V611H319V612H318V611H315V612H311V611H310V612H309V611H305V612H302V611H298V612H297V611H295V612H290V611H288V612H287V611H285V612H282V611H281V612H280V611H278V612H277Z"/>
<path d="M277 638H278V637H282V638H284V637H285V638H286V637H289V638H291V637H292V638H294V637H295V638H296V637H297V638H298V637H299V638H308V637H309V638H310V637H312V636H313V638H314V637H315V638H317V637H318V638H323V637H324V638H326V637H328V638H330V637H331V638H332V637H333V638H334V637H340V636H341V637H343V638H344V637H345V638H346V637H349V638H353V637H354V638H356V637H357V638H359V637H363V638H366V637H367V638H368V637H369V638H370V637H371V638H372V637H373V638H375V637H376V638H382V637H383V638H384V637H391V638H392V637H393V638H394V637H395V638H399V637H401V638H402V637H403V636H404V638H407V637H409V638H410V637H413V638H414V637H415V638H417V637H418V638H423V637H424V638H426V637H428V638H429V637H430V638H433V637H434V638H435V637H437V638H438V636H439V638H443V637H445V638H447V637H448V638H450V637H451V638H453V637H456V638H457V637H460V638H461V637H462V638H463V637H464V638H465V637H466V638H468V637H469V638H475V637H476V638H477V637H478V638H479V637H480V638H482V637H483V638H486V637H487V638H488V637H490V638H493V637H494V638H495V637H496V638H498V637H499V638H500V637H501V638H503V637H505V638H506V637H509V638H514V637H515V638H516V637H519V638H520V637H521V638H522V637H523V638H526V637H527V638H529V637H533V638H534V637H538V638H542V637H545V638H546V637H547V638H548V637H549V638H552V637H554V638H557V637H558V638H559V637H560V638H561V637H564V638H569V637H571V638H573V637H575V638H578V637H581V638H582V637H584V638H587V637H588V638H589V637H590V638H591V637H593V638H594V637H595V638H596V637H597V638H598V637H599V638H606V637H608V638H609V636H610V638H611V637H612V638H615V637H617V638H618V637H620V638H621V637H625V638H627V637H628V638H629V637H630V638H637V637H640V638H642V637H643V638H644V637H645V638H647V637H649V638H651V636H652V637H653V638H654V637H656V638H657V637H659V638H661V636H662V637H666V638H668V637H669V638H673V637H674V638H679V637H680V638H681V637H682V638H683V637H684V638H687V637H690V638H693V637H696V638H697V637H698V638H701V637H703V638H705V637H706V638H714V636H715V638H716V637H717V638H718V637H720V638H723V637H724V638H725V636H726V638H727V637H730V638H732V637H734V638H735V637H736V638H737V637H741V638H742V637H743V638H745V637H747V638H748V637H749V638H750V637H751V638H752V637H753V638H756V637H760V638H761V637H762V638H765V637H766V636H767V638H769V637H771V638H773V637H775V638H778V637H780V638H784V637H785V638H787V637H788V638H790V637H791V638H792V637H793V638H796V636H797V637H799V638H800V637H801V638H807V637H808V638H809V637H812V638H813V637H815V638H818V637H820V638H821V637H823V638H826V637H828V638H829V637H830V638H832V637H837V638H839V637H840V638H841V637H842V638H843V637H844V638H845V637H850V638H853V637H854V638H860V637H863V638H867V637H868V638H871V637H873V638H874V637H876V638H881V637H882V638H884V637H885V638H886V637H887V638H888V637H889V638H890V637H894V638H897V637H899V638H900V637H901V638H902V637H905V638H906V637H907V638H913V637H915V638H917V637H918V638H919V637H922V638H924V637H925V638H927V637H929V638H930V637H933V638H934V637H937V636H939V638H940V637H941V638H945V637H947V638H951V637H952V638H953V637H958V638H960V637H961V638H964V637H965V638H967V637H970V638H972V637H973V638H974V637H976V638H980V637H983V638H984V637H985V638H987V637H988V638H989V637H991V638H996V637H997V638H998V637H999V638H1000V637H1002V638H1003V637H1004V638H1008V637H1009V638H1010V637H1011V638H1012V637H1015V638H1016V637H1017V638H1021V637H1024V638H1029V637H1032V638H1034V637H1035V638H1037V637H1039V638H1040V637H1042V638H1045V637H1046V638H1047V637H1048V638H1049V637H1050V638H1051V637H1053V638H1054V637H1055V638H1056V637H1057V638H1059V637H1060V638H1061V637H1064V636H1065V638H1067V637H1070V638H1071V637H1073V638H1075V637H1076V638H1077V637H1078V638H1080V637H1083V638H1088V637H1090V638H1091V637H1092V638H1097V637H1099V638H1100V637H1101V638H1102V637H1103V638H1104V637H1105V638H1111V637H1114V638H1118V637H1119V638H1121V637H1124V636H1125V637H1126V638H1127V637H1128V638H1129V637H1131V638H1133V637H1134V638H1135V637H1139V638H1141V637H1142V638H1143V637H1144V638H1146V637H1147V638H1148V637H1151V638H1156V637H1157V638H1158V637H1159V638H1160V637H1161V638H1164V637H1167V638H1168V637H1169V638H1170V637H1174V638H1175V637H1176V638H1180V637H1182V638H1189V637H1192V638H1194V637H1197V638H1198V637H1200V638H1203V637H1205V638H1206V637H1208V638H1211V637H1212V638H1214V637H1215V638H1216V637H1218V638H1220V637H1224V638H1229V637H1230V638H1232V637H1233V636H1234V637H1235V638H1236V637H1237V638H1242V637H1244V638H1245V637H1246V638H1250V637H1251V638H1252V637H1253V636H1254V637H1257V638H1258V637H1259V638H1263V637H1264V638H1270V637H1273V638H1274V637H1275V638H1278V637H1279V638H1284V637H1286V638H1288V637H1289V638H1290V637H1291V638H1292V637H1295V638H1298V637H1300V638H1301V637H1302V638H1303V637H1305V638H1306V637H1307V638H1308V636H1309V637H1310V638H1313V637H1314V638H1316V637H1318V638H1319V637H1320V638H1321V637H1324V638H1325V637H1326V638H1327V637H1329V638H1330V637H1331V638H1334V637H1335V638H1336V637H1339V638H1340V637H1341V636H1342V638H1343V637H1344V636H1345V637H1346V638H1347V636H1348V638H1349V637H1350V638H1352V637H1354V638H1355V637H1356V638H1358V637H1359V638H1360V636H1361V638H1362V637H1363V638H1365V637H1367V638H1370V637H1373V638H1377V637H1380V638H1381V637H1382V638H1386V637H1387V638H1389V637H1391V638H1395V637H1397V638H1399V637H1401V638H1402V641H1401V642H1399V641H1398V642H1396V641H1394V642H1393V641H1391V642H1389V641H1387V642H1379V641H1378V642H1377V641H1372V642H1370V641H1369V642H1365V641H1362V642H1361V641H1360V642H1359V641H1358V642H1357V641H1355V642H1354V641H1351V642H1344V641H1341V642H1338V641H1337V643H1336V642H1335V641H1334V642H1333V641H1330V642H1326V641H1325V642H1322V641H1321V642H1319V641H1318V642H1317V641H1315V642H1310V641H1309V642H1307V641H1305V642H1303V641H1301V642H1295V641H1293V642H1291V641H1289V642H1287V641H1286V642H1285V641H1284V642H1280V641H1279V642H1276V641H1274V642H1271V641H1270V642H1269V641H1265V642H1264V641H1262V642H1258V641H1256V642H1254V641H1252V642H1248V641H1245V642H1244V641H1242V642H1239V641H1237V642H1236V641H1234V642H1232V641H1230V642H1229V641H1228V642H1227V641H1226V642H1220V641H1216V642H1213V641H1212V642H1210V641H1209V642H1206V641H1202V642H1198V641H1197V642H1196V641H1194V642H1193V641H1192V642H1190V641H1188V642H1186V641H1185V642H1181V641H1180V642H1179V641H1178V642H1177V641H1172V642H1171V641H1167V643H1166V641H1163V642H1162V643H1161V642H1160V641H1159V642H1157V641H1156V642H1151V641H1150V642H1149V641H1147V642H1144V641H1142V643H1141V642H1140V641H1139V642H1138V641H1137V642H1130V641H1127V642H1123V641H1122V642H1120V641H1119V642H1117V641H1116V642H1115V641H1110V642H1108V641H1107V642H1106V641H1104V642H1100V641H1098V642H1094V641H1093V642H1092V641H1090V642H1089V641H1085V642H1084V641H1081V642H1080V641H1078V642H1070V641H1069V642H1068V641H1067V642H1065V641H1064V642H1062V641H1061V642H1059V641H1058V642H1056V641H1055V642H1053V641H1052V642H1051V641H1049V642H1048V641H1043V642H1042V641H1041V642H1035V641H1034V642H1033V641H1032V642H1031V641H1029V642H1027V641H1025V642H1021V641H1020V642H1018V643H1017V642H1014V641H1013V642H1012V641H1010V642H1009V641H1008V642H1003V641H1001V642H999V641H998V642H997V641H994V642H993V641H990V642H988V641H986V642H983V641H980V642H979V641H978V642H976V641H975V642H974V641H973V642H970V641H968V642H967V641H965V642H964V641H962V642H961V641H960V642H959V641H957V642H956V641H954V642H953V641H950V642H949V641H948V642H946V641H945V642H942V641H941V642H940V641H939V642H933V641H932V642H930V641H926V642H925V641H922V642H920V641H919V642H917V641H916V642H914V643H913V642H911V641H909V642H908V641H907V642H904V641H901V642H900V641H895V642H893V641H892V642H891V643H890V641H889V642H885V641H884V642H883V641H881V642H879V641H878V642H877V641H875V642H873V641H871V642H869V641H868V642H867V641H866V642H865V641H864V642H863V641H862V642H857V641H854V642H853V641H848V642H843V641H842V642H837V641H833V642H827V641H826V643H825V642H824V641H822V642H818V641H816V643H815V641H812V642H811V643H810V641H809V642H808V641H805V642H799V641H798V642H796V641H795V642H794V641H792V642H789V641H786V642H784V641H782V642H780V641H779V642H772V641H770V642H769V641H768V642H767V641H765V643H764V641H760V642H756V641H753V642H751V641H750V642H748V641H747V642H746V641H744V642H742V641H741V643H740V642H739V641H738V642H737V643H736V642H735V641H734V642H732V641H730V642H729V641H728V642H726V641H724V642H722V641H719V642H718V641H716V642H715V641H714V642H711V641H710V642H709V641H706V642H705V641H703V642H700V641H698V642H693V641H692V642H688V641H686V642H684V641H683V642H682V641H680V642H679V641H678V642H677V641H676V642H675V641H674V642H673V641H671V642H669V641H668V642H667V641H666V642H662V641H661V642H653V641H652V642H651V641H650V642H648V641H647V642H646V641H641V643H640V641H638V642H637V641H636V642H633V641H632V642H631V641H628V642H622V641H619V642H618V641H615V642H613V641H612V642H611V641H610V642H607V641H605V642H595V641H589V642H584V641H579V642H575V641H574V642H573V641H571V642H570V641H569V642H568V641H566V642H565V641H564V642H563V643H562V641H558V642H554V641H551V642H550V641H549V642H545V641H544V642H543V641H542V642H541V641H537V642H535V641H534V642H533V641H528V642H527V641H524V642H522V641H521V642H518V641H516V642H514V641H511V642H510V641H508V642H501V641H496V642H492V641H491V642H487V641H485V642H483V641H482V642H481V641H479V642H476V641H475V642H473V643H472V641H471V642H468V641H467V642H466V641H465V642H463V641H462V642H461V641H460V642H457V643H456V641H454V642H453V641H452V642H451V641H450V642H449V641H448V642H447V641H446V643H445V641H443V642H441V641H439V642H438V641H436V642H435V641H434V642H432V641H429V642H428V641H426V642H423V641H421V642H417V641H416V642H415V641H413V642H411V641H410V642H409V641H407V642H404V641H403V642H399V641H396V642H394V641H392V642H390V641H386V642H384V641H383V643H382V641H378V642H377V641H376V642H375V641H374V642H373V641H371V642H364V641H363V642H360V641H358V642H354V641H352V642H343V641H342V642H339V641H338V642H336V641H335V642H332V641H331V642H328V641H327V642H326V641H325V642H324V641H322V642H321V643H320V642H315V643H314V641H311V642H308V641H305V642H303V641H301V642H298V641H294V642H293V641H290V642H289V641H287V642H283V641H282V642H279V641H277Z"/>
<path d="M277 668H278V667H279V668H284V667H285V666H286V668H292V667H293V668H294V667H295V668H298V667H299V668H303V667H304V668H315V667H316V668H317V667H318V668H327V667H328V668H330V667H331V668H342V667H344V668H350V667H351V668H352V667H353V668H354V667H357V668H362V667H364V668H367V667H368V668H370V667H371V668H378V667H380V668H383V667H385V668H390V667H391V668H393V667H394V668H395V667H397V668H408V667H409V668H410V667H411V668H412V667H413V668H422V667H423V668H424V667H427V668H430V667H432V668H434V667H435V668H438V667H440V668H447V667H448V668H451V667H452V668H455V667H456V668H461V667H462V668H466V667H467V668H471V667H472V668H476V667H477V668H480V667H483V668H485V667H486V668H487V667H488V668H490V667H491V668H492V667H493V668H494V667H495V668H497V667H499V668H502V667H503V668H504V667H505V668H507V666H509V665H510V666H511V667H513V666H514V661H515V666H518V668H520V667H521V668H522V667H523V668H529V667H530V668H534V667H535V668H536V667H538V666H539V667H543V668H548V667H551V668H555V667H556V666H557V665H558V666H559V663H560V662H561V664H562V665H563V667H564V665H565V667H567V668H568V667H569V668H570V667H573V668H574V667H576V668H579V667H580V668H583V667H584V666H585V662H586V652H587V662H588V666H589V668H591V665H592V667H593V666H594V667H595V668H598V667H599V668H600V667H601V668H602V664H603V667H604V666H605V667H606V668H608V666H609V668H610V667H611V668H613V667H614V668H616V667H617V668H618V667H619V668H622V667H623V668H624V667H625V668H630V667H631V668H632V667H633V668H635V667H636V668H643V666H644V668H647V666H648V668H649V667H651V668H654V667H655V666H656V668H659V667H661V668H664V667H665V668H672V667H673V668H676V667H677V668H679V667H681V668H683V667H684V668H685V667H686V668H687V667H688V668H690V667H691V668H693V666H694V667H696V668H697V667H698V668H705V667H706V668H708V667H709V668H712V666H713V668H716V667H718V668H721V667H722V668H728V667H729V668H733V667H734V668H735V667H736V668H738V667H739V668H741V667H744V668H755V667H757V668H765V666H766V668H771V667H772V668H774V667H776V668H780V667H781V668H782V667H783V668H785V667H788V668H792V667H794V668H795V667H796V668H798V667H799V668H802V667H804V668H810V667H811V668H814V667H815V668H816V667H817V668H825V667H827V668H835V666H836V667H837V668H839V667H841V668H847V667H851V668H854V667H855V668H856V667H857V668H864V667H865V668H866V667H868V668H869V667H870V668H872V667H873V668H876V667H877V668H888V667H890V668H892V667H894V666H895V667H896V666H897V665H898V663H899V666H900V665H901V663H902V664H903V666H904V664H905V665H906V666H907V667H908V668H916V667H918V668H921V667H922V668H924V667H925V668H927V667H928V668H930V667H931V666H932V667H933V668H934V667H935V668H936V667H938V668H940V667H941V668H950V667H953V668H955V667H956V668H963V667H964V668H971V667H972V668H976V667H978V668H979V667H980V668H985V667H986V668H987V667H989V668H992V667H995V668H1001V667H1002V668H1003V666H1004V668H1005V667H1006V668H1008V667H1009V668H1011V667H1014V668H1015V667H1017V668H1018V666H1019V668H1020V667H1022V668H1023V667H1024V668H1029V667H1030V668H1031V667H1032V668H1033V667H1034V668H1036V667H1037V668H1046V667H1048V668H1052V667H1053V668H1054V667H1055V668H1056V667H1057V668H1058V667H1059V666H1060V667H1061V668H1065V667H1066V668H1077V667H1078V668H1082V667H1083V668H1087V667H1089V668H1090V667H1091V668H1093V667H1094V668H1095V667H1096V668H1099V667H1100V668H1105V667H1106V668H1108V667H1109V668H1112V667H1113V668H1115V667H1117V668H1118V667H1120V668H1122V667H1123V668H1124V667H1126V668H1127V667H1128V668H1130V667H1131V663H1132V667H1134V668H1135V667H1136V668H1137V667H1138V668H1141V667H1143V668H1146V667H1147V668H1148V667H1150V668H1158V667H1159V668H1165V666H1166V668H1167V667H1168V668H1171V667H1173V668H1177V667H1178V668H1181V667H1183V668H1184V667H1185V668H1187V667H1188V668H1189V667H1191V668H1201V667H1202V668H1204V667H1205V668H1207V667H1208V668H1211V667H1212V668H1214V667H1215V668H1220V666H1221V667H1222V668H1223V667H1226V668H1228V667H1231V668H1238V667H1240V668H1247V667H1248V668H1256V667H1257V668H1260V667H1263V668H1266V667H1267V668H1269V667H1270V668H1278V667H1280V668H1281V667H1282V668H1283V667H1284V668H1288V667H1289V668H1292V667H1294V668H1302V667H1305V668H1308V667H1311V668H1313V667H1314V668H1317V667H1319V668H1320V667H1321V668H1324V667H1326V668H1328V667H1330V668H1332V667H1334V668H1336V667H1337V668H1341V667H1343V668H1346V667H1347V668H1351V667H1352V668H1354V667H1355V668H1358V667H1359V668H1363V667H1364V668H1365V667H1367V668H1373V667H1374V668H1379V667H1380V668H1381V667H1382V668H1384V667H1385V668H1387V667H1390V668H1392V667H1394V668H1395V667H1396V668H1399V667H1400V668H1401V667H1402V672H1397V673H1395V672H1392V673H1390V672H1384V673H1379V672H1378V673H1375V672H1373V673H1372V672H1371V673H1370V672H1360V673H1357V672H1350V673H1349V672H1348V673H1346V672H1343V673H1342V672H1339V673H1338V672H1337V673H1335V672H1334V673H1331V674H1330V673H1329V672H1326V673H1325V672H1315V673H1314V672H1313V673H1310V672H1306V673H1305V672H1301V673H1300V672H1292V673H1291V672H1290V673H1289V672H1282V673H1281V672H1276V673H1275V672H1268V673H1267V672H1255V673H1254V672H1251V673H1250V672H1247V673H1245V672H1237V673H1236V672H1231V673H1230V672H1229V673H1228V672H1224V673H1222V672H1221V673H1219V672H1213V673H1212V672H1210V673H1209V672H1200V673H1199V672H1198V673H1197V672H1196V673H1194V672H1191V673H1190V672H1188V673H1187V672H1179V673H1178V672H1176V673H1175V672H1174V674H1173V673H1172V672H1168V673H1166V672H1163V673H1162V672H1151V673H1150V672H1145V673H1144V672H1139V673H1138V672H1133V673H1132V677H1131V673H1129V672H1110V673H1109V672H1107V673H1106V672H1104V673H1103V672H1096V673H1094V672H1093V673H1092V672H1089V673H1088V672H1086V673H1085V672H1083V673H1082V672H1074V673H1073V672H1071V673H1068V672H1067V673H1066V672H1065V673H1064V672H1062V673H1061V672H1055V673H1054V672H1053V673H1052V672H1050V673H1049V672H1045V673H1043V672H1038V673H1037V672H1027V673H1026V672H1023V673H1022V672H1019V673H1018V672H997V673H996V672H995V673H994V672H993V673H990V672H988V673H986V672H984V673H983V672H977V673H976V672H974V673H973V672H960V673H958V672H951V673H950V672H949V673H948V672H947V673H946V672H938V673H935V672H930V673H929V672H919V673H917V672H914V673H913V672H912V673H911V672H907V674H906V675H905V673H904V674H903V676H902V677H901V673H900V677H899V675H898V673H896V674H895V676H894V673H892V672H887V673H884V672H882V673H881V672H879V673H878V672H871V673H868V672H866V673H865V672H860V673H859V672H851V673H849V672H844V673H843V672H835V673H834V672H833V673H832V672H830V673H829V672H827V673H826V672H825V673H824V672H815V673H814V672H807V673H806V672H788V673H786V672H782V673H781V672H776V673H775V672H770V673H769V672H762V673H761V672H758V673H757V672H753V673H751V672H749V673H747V672H744V673H743V672H738V673H737V672H734V673H731V672H724V673H723V672H722V673H721V672H716V673H715V672H709V674H708V672H707V673H706V672H701V673H700V672H698V673H697V672H694V673H693V672H692V673H691V672H686V673H685V672H683V673H682V672H681V673H680V672H679V673H678V672H675V673H674V672H669V673H668V672H664V673H663V672H662V673H661V672H657V673H654V672H650V673H648V672H646V673H644V672H640V673H639V672H638V673H636V672H632V673H627V672H626V674H625V672H623V673H622V672H619V673H618V672H616V673H615V672H614V673H613V672H610V674H609V678H608V673H606V672H604V676H602V675H601V672H596V673H594V672H593V673H592V675H591V674H590V673H589V675H588V679H587V690H586V678H585V674H584V672H582V673H580V672H578V673H577V672H573V674H572V675H571V674H569V672H568V673H567V672H566V674H564V676H562V679H561V676H560V675H559V678H558V675H556V672H555V673H553V672H551V673H548V672H541V673H540V676H539V675H538V674H537V675H536V672H530V673H529V672H528V673H526V672H523V673H522V672H520V673H519V672H518V674H516V676H515V684H514V676H513V675H512V673H510V674H509V673H508V674H507V672H504V673H503V672H502V673H501V672H500V673H499V672H496V673H494V672H492V673H490V672H489V673H488V672H485V673H484V672H481V673H480V672H475V673H474V672H467V673H466V672H465V673H464V672H463V673H460V672H459V673H458V672H455V673H453V672H452V673H451V672H446V673H445V672H440V673H439V672H438V673H437V672H435V673H433V672H430V673H429V672H426V673H425V672H422V673H421V672H416V673H415V672H414V674H412V673H411V672H409V673H408V672H404V673H403V672H392V673H391V672H390V673H389V672H386V673H385V672H381V673H379V672H373V673H372V672H368V673H367V672H361V673H358V672H355V673H354V672H353V673H351V672H348V673H347V672H339V673H338V672H335V673H334V672H333V673H331V674H330V672H320V673H319V672H316V673H315V672H310V673H309V672H298V673H297V672H290V673H288V672H284V673H282V672H277Z"/>
<path d="M277 698H280V699H285V698H286V699H287V698H292V699H293V698H296V699H297V698H300V699H304V698H307V699H308V698H309V699H310V698H312V699H313V698H314V699H315V698H319V699H322V698H324V699H325V698H326V699H327V698H329V699H331V698H335V699H338V698H339V699H340V698H341V699H343V698H344V699H345V698H347V699H349V698H350V699H352V698H355V699H356V698H357V699H361V698H362V699H364V698H369V699H370V698H373V699H374V698H375V699H376V698H379V699H386V698H389V699H391V698H393V699H394V698H396V699H397V698H398V699H399V698H401V699H402V698H405V699H406V698H409V699H412V698H413V699H414V698H420V699H421V698H429V699H430V698H431V699H432V698H436V699H439V698H440V699H441V698H442V699H443V698H445V699H447V698H450V699H451V697H452V699H454V698H457V699H458V698H459V699H463V698H466V699H470V698H471V699H472V698H476V699H478V698H479V699H480V698H482V699H483V698H485V699H487V698H489V699H490V698H492V699H493V698H495V697H496V699H497V698H500V699H503V698H505V699H506V698H510V699H511V698H513V699H514V698H515V699H516V697H517V698H519V699H523V698H525V699H530V698H531V699H534V698H535V699H536V698H539V699H540V698H541V699H545V698H546V699H547V697H548V698H551V699H553V698H555V699H556V698H557V699H558V698H560V699H562V698H564V699H565V698H566V699H567V698H568V699H569V698H571V699H575V698H576V699H578V698H581V699H582V698H583V699H584V698H586V699H587V698H588V699H590V698H591V699H592V698H595V699H598V698H600V699H601V698H602V699H603V698H604V699H605V698H607V699H608V698H610V699H612V698H615V699H617V698H618V699H619V698H620V699H621V698H622V699H623V698H624V699H627V698H629V699H630V698H633V699H634V698H637V699H638V698H644V697H645V699H649V698H656V699H658V698H659V699H662V698H664V699H666V698H669V699H671V698H673V699H674V698H677V699H680V698H681V699H682V698H685V699H687V698H688V699H691V698H694V699H696V698H697V699H699V698H700V699H701V698H705V699H708V698H711V699H712V698H715V699H718V698H720V699H722V698H724V699H725V698H729V699H733V698H735V699H736V698H737V699H738V698H740V699H741V698H743V699H744V698H747V699H748V698H754V699H755V698H756V699H757V698H759V699H763V698H765V699H766V698H767V699H771V697H772V699H774V698H776V699H777V698H778V699H779V698H781V699H782V698H784V699H785V698H787V699H788V698H792V699H794V698H795V699H798V698H800V699H801V698H804V699H806V698H807V699H813V698H814V699H815V698H816V699H819V698H821V699H822V698H824V699H825V698H831V699H835V698H840V699H841V698H844V699H845V698H846V697H847V698H850V699H854V697H855V698H861V699H862V698H870V699H871V697H872V698H873V699H874V698H875V699H877V698H878V699H880V698H882V699H883V698H884V699H885V698H886V699H887V698H888V699H889V698H891V699H893V698H894V699H895V698H896V699H898V698H899V699H901V698H905V699H907V698H908V699H909V698H916V699H918V698H923V699H924V698H927V699H928V698H929V699H930V698H933V699H934V698H935V699H936V698H938V699H939V698H940V699H941V698H942V699H943V698H946V699H947V698H948V699H951V698H954V699H958V698H959V699H961V698H962V699H963V698H966V699H967V698H970V699H972V698H974V699H977V698H978V699H980V698H983V699H986V698H992V699H993V698H1003V699H1004V698H1006V699H1007V697H1008V699H1009V698H1011V699H1012V698H1015V699H1018V698H1019V699H1020V698H1022V699H1023V698H1024V699H1029V698H1030V699H1031V698H1033V699H1034V697H1035V698H1041V699H1042V698H1043V699H1045V698H1049V699H1050V698H1052V699H1054V698H1056V699H1057V698H1062V699H1069V698H1074V699H1076V698H1081V699H1082V698H1083V699H1084V698H1085V699H1086V698H1093V699H1100V698H1101V699H1102V698H1103V699H1104V698H1108V699H1109V698H1110V699H1111V698H1112V697H1113V699H1114V698H1116V699H1117V698H1122V699H1123V698H1128V699H1129V698H1130V699H1135V698H1137V699H1138V698H1139V699H1140V698H1142V699H1143V698H1144V699H1145V698H1146V699H1147V698H1149V697H1150V698H1154V699H1155V698H1156V699H1157V698H1158V699H1159V698H1161V699H1162V698H1165V699H1166V698H1169V699H1171V698H1172V699H1173V698H1177V699H1178V698H1180V699H1181V698H1185V699H1187V698H1189V699H1191V698H1192V697H1193V698H1194V699H1195V698H1197V699H1199V698H1202V699H1203V698H1206V699H1208V698H1212V699H1213V698H1215V699H1216V698H1220V697H1221V699H1223V698H1225V699H1227V698H1228V699H1233V698H1234V697H1235V699H1236V698H1237V697H1238V698H1242V699H1246V698H1248V699H1249V698H1255V699H1258V698H1259V697H1260V698H1262V699H1269V698H1272V699H1273V698H1280V699H1281V698H1283V699H1284V698H1288V699H1290V698H1291V699H1300V698H1306V699H1308V698H1310V699H1311V698H1312V697H1313V698H1314V699H1315V698H1317V699H1318V698H1319V699H1322V698H1323V699H1325V698H1327V699H1328V698H1331V699H1333V698H1335V699H1336V698H1338V699H1339V698H1344V699H1345V698H1346V699H1351V698H1353V699H1354V698H1355V699H1356V698H1359V699H1361V698H1364V699H1366V698H1368V699H1370V698H1371V697H1372V699H1373V698H1374V699H1377V698H1381V699H1383V698H1384V699H1385V698H1387V699H1388V698H1389V699H1394V698H1397V699H1398V697H1399V699H1400V698H1401V699H1402V702H1396V703H1395V702H1392V703H1390V702H1383V703H1381V702H1379V703H1377V702H1376V703H1375V702H1373V703H1372V702H1371V703H1369V702H1363V703H1362V702H1360V703H1359V702H1358V703H1357V702H1354V703H1353V702H1352V703H1351V702H1345V703H1344V702H1341V703H1339V702H1335V703H1334V702H1332V703H1330V702H1329V703H1328V702H1326V703H1324V702H1322V704H1321V702H1318V703H1316V702H1310V703H1309V702H1308V703H1307V702H1306V703H1305V702H1303V703H1302V702H1294V703H1291V702H1290V703H1288V702H1287V703H1285V702H1284V703H1283V702H1281V703H1278V702H1275V703H1274V702H1272V703H1271V702H1268V703H1266V702H1262V703H1261V702H1260V703H1259V702H1257V703H1254V702H1253V703H1251V702H1250V704H1249V703H1248V702H1247V703H1246V702H1239V703H1238V702H1231V703H1230V702H1228V703H1226V702H1225V703H1223V702H1222V703H1221V702H1220V703H1219V702H1217V703H1216V702H1215V703H1213V702H1211V703H1209V702H1206V703H1205V702H1204V703H1203V702H1202V703H1201V702H1198V703H1197V702H1196V703H1194V702H1192V703H1190V702H1186V703H1184V702H1183V703H1182V702H1180V703H1179V702H1178V703H1177V702H1176V703H1174V702H1168V703H1167V702H1161V703H1158V702H1157V703H1156V702H1155V703H1153V702H1152V703H1149V704H1148V703H1147V702H1146V703H1145V702H1140V703H1138V702H1136V703H1134V702H1131V703H1129V702H1126V703H1125V702H1122V703H1120V702H1119V703H1118V702H1113V703H1111V702H1110V703H1108V702H1105V703H1104V702H1103V703H1101V702H1100V703H1099V702H1098V703H1097V702H1096V703H1095V702H1092V703H1091V702H1089V703H1088V702H1084V703H1083V702H1074V703H1073V702H1061V703H1060V702H1058V703H1057V702H1053V703H1052V702H1048V703H1046V702H1044V703H1043V702H1042V703H1039V702H1036V703H1035V702H1032V703H1030V702H1029V703H1028V702H1027V703H1026V702H1020V703H1019V702H1017V703H1016V702H1015V703H1011V702H1010V703H1009V702H1008V703H1007V702H1001V703H1000V702H997V703H996V702H992V703H990V702H988V703H987V702H986V703H985V702H982V703H980V702H979V703H977V702H974V703H972V702H971V703H969V702H967V703H965V702H964V703H963V702H960V703H959V702H953V703H952V702H950V703H946V702H944V703H941V702H940V703H939V702H937V703H936V702H926V703H925V702H924V703H923V702H921V703H920V702H918V703H915V702H913V703H912V702H910V703H909V702H906V703H904V702H903V703H902V702H901V703H899V702H896V703H895V702H891V703H890V704H889V702H888V703H886V702H884V703H882V702H877V703H876V702H875V703H873V702H868V703H867V702H862V703H861V702H858V703H856V702H855V703H854V702H850V703H849V702H848V703H847V702H843V703H842V702H839V703H838V702H831V703H830V702H827V703H826V702H811V703H808V702H805V703H804V702H802V703H801V702H799V703H798V702H793V703H792V702H789V703H788V702H786V703H785V702H784V703H783V702H781V703H780V702H779V703H778V702H767V703H766V702H761V703H759V702H758V703H757V702H756V703H754V702H753V703H752V702H751V703H750V702H749V704H748V703H747V704H746V703H745V702H744V703H743V702H741V703H739V702H737V703H736V702H732V703H731V702H720V703H719V702H717V703H716V702H713V703H711V702H707V703H706V702H702V703H701V702H700V703H699V702H697V703H696V702H695V703H693V702H688V703H687V702H681V703H680V702H679V703H678V702H676V703H675V702H674V703H673V702H669V703H668V702H662V703H661V702H660V703H659V702H658V704H657V703H656V702H654V703H652V702H648V703H646V702H645V703H644V702H636V703H634V702H632V703H631V702H625V703H624V702H623V703H621V702H619V703H618V702H617V703H616V702H612V703H609V702H608V703H607V702H599V703H598V702H596V703H595V702H591V703H587V702H586V703H583V702H582V703H580V702H578V703H576V702H574V703H572V702H571V703H570V702H560V704H559V702H556V703H555V702H552V703H551V702H550V703H549V702H547V703H546V702H543V703H542V702H540V703H538V702H536V703H535V702H533V703H531V702H530V703H529V702H528V703H527V702H526V703H525V702H524V703H523V702H521V703H520V702H517V703H516V702H515V703H511V704H510V702H508V703H506V702H505V703H504V702H500V703H499V702H493V703H490V702H488V703H487V702H486V703H485V702H480V703H479V702H473V703H471V702H469V703H467V702H465V703H464V702H462V703H460V702H459V703H458V702H456V703H454V702H451V703H449V702H445V703H444V702H442V703H441V702H440V703H439V702H435V703H434V702H429V703H428V702H427V703H426V702H425V703H424V702H423V703H422V702H419V703H418V702H417V703H416V702H407V703H405V702H403V703H402V702H401V703H400V702H399V703H397V702H396V703H395V702H393V703H391V702H388V703H387V702H384V703H381V702H372V703H370V702H366V703H365V702H362V703H361V702H358V703H355V702H351V703H349V702H346V703H345V702H344V703H343V702H335V703H334V702H333V703H332V702H331V703H330V702H325V703H322V702H321V703H320V702H318V703H317V702H316V703H315V702H314V703H311V702H310V703H309V702H307V703H306V702H302V703H301V702H297V703H295V702H294V703H292V702H291V703H290V702H286V703H284V702H280V703H279V702H278V703H277Z"/>
<path d="M277 729H278V728H279V729H281V728H282V729H283V728H284V729H287V727H288V728H289V729H295V728H296V729H297V728H298V729H300V728H301V729H303V728H305V729H306V728H308V729H309V728H310V729H316V728H322V729H327V728H331V729H332V728H333V729H336V728H337V729H338V728H339V729H343V728H345V729H346V728H348V729H350V728H351V729H353V728H354V729H357V728H360V729H365V728H367V729H368V728H370V729H382V728H383V729H384V728H385V729H387V728H388V729H391V728H394V729H395V728H397V729H398V728H399V729H400V728H401V729H402V728H403V727H404V728H407V729H408V728H409V729H413V728H414V729H418V728H419V729H420V728H421V729H422V728H425V729H426V728H427V729H433V728H435V729H436V727H437V729H438V728H440V729H443V728H444V729H446V728H447V729H448V728H449V729H457V728H458V729H460V728H461V729H464V728H465V729H466V728H467V729H470V728H474V729H476V728H478V729H481V728H484V729H485V728H486V729H487V728H489V729H490V728H491V729H492V728H497V729H499V728H500V729H505V728H506V729H509V728H511V727H512V729H514V728H515V727H516V729H518V728H519V729H521V728H522V729H524V728H526V729H527V728H530V729H539V727H540V728H541V729H544V728H546V729H549V728H550V729H551V728H552V729H553V728H554V727H555V729H556V728H558V729H563V728H564V729H567V728H568V729H571V728H573V729H574V728H575V729H580V728H581V729H584V728H585V729H586V728H587V729H590V728H593V729H594V728H595V729H598V728H599V729H601V728H603V729H606V728H607V729H610V728H611V729H612V728H613V729H618V728H620V729H623V728H624V729H627V727H628V728H629V729H632V728H635V729H639V728H641V729H646V728H648V729H650V728H651V729H653V728H656V729H657V728H659V729H660V728H661V729H662V728H663V729H664V728H665V729H667V728H668V729H672V728H677V729H679V728H680V729H682V728H683V729H684V728H687V729H688V728H694V729H696V728H697V729H698V727H699V729H704V728H706V729H707V728H711V729H712V728H714V729H721V728H722V729H725V728H727V729H728V728H729V729H730V727H731V729H733V728H736V729H742V728H744V729H747V728H748V729H749V728H751V729H756V728H757V729H767V728H768V729H770V728H771V729H773V728H774V729H775V728H776V729H777V728H780V729H785V728H786V729H788V728H789V729H790V728H791V729H795V728H796V729H798V728H801V729H806V728H808V729H809V728H818V729H820V728H822V729H823V728H824V729H826V728H827V729H831V728H832V729H833V728H834V729H835V728H837V729H839V728H844V729H847V728H848V729H851V728H852V729H853V728H854V729H857V728H858V729H860V728H862V729H863V728H865V729H866V728H868V729H870V728H872V729H874V728H875V729H878V728H879V729H883V728H884V729H885V728H886V729H887V728H888V729H890V728H891V729H892V727H893V729H894V728H895V729H896V728H900V729H901V728H904V729H912V728H913V729H914V728H915V729H918V728H919V729H923V728H925V729H927V728H928V729H930V728H931V729H932V728H936V729H938V728H940V729H948V728H949V729H953V728H956V729H958V728H959V729H962V728H963V729H965V728H966V729H967V728H968V729H971V728H972V729H976V728H980V729H981V728H983V729H987V728H990V729H991V728H992V729H998V728H1000V729H1003V728H1004V729H1007V728H1010V729H1011V728H1012V729H1016V728H1017V729H1019V728H1020V729H1021V728H1022V729H1023V728H1024V729H1028V728H1029V729H1030V728H1031V729H1033V728H1034V729H1036V728H1039V729H1042V728H1043V729H1046V728H1047V729H1054V728H1055V729H1056V728H1058V729H1060V728H1061V729H1071V728H1072V729H1073V728H1075V729H1080V728H1082V729H1086V727H1087V728H1090V729H1093V728H1095V729H1096V728H1097V729H1098V728H1099V729H1106V728H1107V729H1112V728H1116V729H1117V728H1119V729H1120V728H1125V729H1129V728H1130V729H1136V728H1137V729H1138V728H1140V729H1141V728H1142V727H1143V728H1144V729H1155V728H1158V729H1159V728H1160V729H1161V728H1163V729H1164V728H1165V729H1170V728H1171V729H1174V728H1178V729H1179V728H1181V729H1189V728H1190V729H1194V728H1195V729H1198V728H1199V729H1200V728H1204V729H1205V728H1206V729H1207V728H1208V729H1209V728H1211V729H1212V727H1213V728H1214V729H1216V728H1218V729H1219V728H1220V729H1223V728H1224V729H1225V728H1227V729H1231V728H1232V729H1234V728H1235V729H1237V728H1238V729H1242V727H1243V728H1244V729H1245V728H1246V729H1247V728H1248V729H1253V728H1254V729H1255V728H1256V729H1258V728H1259V729H1263V728H1265V729H1268V728H1269V729H1278V728H1279V729H1280V727H1281V729H1284V728H1285V729H1286V728H1287V729H1289V728H1293V729H1298V728H1299V729H1303V728H1304V729H1310V728H1311V729H1312V728H1313V729H1318V728H1319V729H1322V728H1323V729H1329V728H1331V729H1332V728H1334V729H1335V728H1338V729H1339V728H1340V729H1341V728H1342V729H1343V728H1344V729H1345V728H1347V729H1355V728H1356V727H1357V728H1358V729H1359V728H1360V729H1361V727H1362V722H1363V727H1364V728H1365V729H1367V728H1368V729H1370V728H1372V729H1374V728H1375V729H1378V728H1379V729H1385V728H1387V729H1391V728H1393V729H1395V728H1396V729H1398V728H1402V733H1398V732H1397V733H1394V734H1393V733H1391V732H1390V733H1389V732H1387V733H1383V732H1381V733H1379V732H1377V733H1376V732H1375V733H1373V732H1372V733H1371V732H1370V733H1368V732H1367V733H1366V732H1365V733H1364V735H1363V740H1362V735H1361V733H1360V732H1359V733H1358V732H1357V733H1352V732H1350V733H1347V732H1343V733H1342V732H1340V733H1335V732H1332V733H1329V732H1327V733H1320V734H1319V732H1318V733H1317V732H1315V733H1314V732H1312V733H1311V732H1310V733H1307V732H1306V733H1305V732H1304V733H1298V732H1296V733H1294V732H1291V733H1289V732H1288V733H1287V732H1286V733H1285V732H1284V733H1281V732H1280V733H1275V732H1274V734H1273V733H1269V732H1268V733H1267V732H1266V733H1265V732H1258V733H1255V732H1254V733H1253V732H1250V733H1249V732H1248V733H1246V732H1244V733H1242V732H1240V733H1239V732H1238V733H1237V732H1232V733H1230V732H1227V733H1225V732H1222V733H1216V732H1213V733H1212V732H1211V733H1201V732H1199V733H1196V732H1195V733H1191V732H1186V733H1182V732H1180V733H1179V732H1175V733H1171V732H1169V733H1168V732H1164V734H1163V733H1162V732H1161V733H1160V732H1158V733H1156V732H1155V733H1152V732H1151V733H1149V732H1147V733H1146V732H1144V733H1143V732H1141V733H1139V732H1138V733H1137V732H1136V733H1133V732H1131V733H1130V732H1129V733H1128V732H1127V733H1123V734H1122V732H1121V733H1120V732H1119V733H1113V732H1112V733H1111V732H1109V733H1103V732H1102V733H1098V732H1097V733H1094V732H1092V733H1090V732H1089V733H1088V732H1084V733H1076V732H1075V733H1072V732H1071V733H1070V732H1069V733H1068V732H1067V733H1063V732H1060V733H1059V732H1058V733H1056V732H1050V733H1044V732H1043V733H1042V732H1041V733H1040V732H1038V733H1032V732H1029V733H1027V732H1026V733H1025V732H1023V733H1022V732H1021V733H1019V732H1018V733H1015V732H1010V733H1009V732H1006V733H1004V732H1002V733H1000V732H999V733H998V732H997V733H996V732H995V733H994V732H992V733H988V732H987V733H982V732H981V733H977V732H974V733H972V732H970V733H967V732H966V733H961V732H957V733H954V732H953V733H952V732H951V733H950V732H949V733H948V732H946V733H942V732H939V733H938V732H937V733H935V732H934V733H931V732H930V733H926V732H924V733H923V732H922V733H921V732H919V733H917V732H916V733H914V732H912V733H911V732H907V733H905V732H903V733H902V732H901V733H896V732H894V733H893V732H892V734H890V732H888V733H887V732H885V733H884V732H882V733H881V732H880V733H879V732H877V733H875V732H870V733H868V732H867V733H866V732H865V733H864V732H862V733H861V732H860V733H859V732H857V733H852V734H851V732H850V733H849V732H844V733H841V732H838V733H837V734H836V732H835V733H834V732H833V733H829V732H828V733H827V732H825V733H823V734H822V732H821V733H818V732H815V733H810V732H808V733H806V732H805V733H803V732H801V733H793V732H790V733H786V732H783V733H781V732H780V733H778V732H777V733H776V732H774V733H770V732H768V733H767V732H765V733H762V732H761V733H759V732H758V733H757V732H756V733H754V732H753V733H752V732H750V733H749V732H747V733H746V732H740V734H739V732H738V733H736V732H735V733H734V732H733V733H732V732H731V733H730V732H729V733H723V732H722V733H720V732H716V733H714V732H711V733H708V732H704V733H698V732H696V733H693V732H691V733H690V732H689V733H688V732H687V733H686V732H685V733H684V732H681V733H679V732H678V733H676V732H675V733H668V732H666V733H665V732H662V733H661V732H659V733H658V732H657V733H656V732H655V733H654V732H650V733H649V732H648V733H646V732H644V733H643V732H640V733H638V732H637V733H636V734H635V733H632V732H631V733H629V732H628V733H626V732H622V733H621V732H620V733H615V732H613V733H612V732H611V733H609V732H608V733H607V732H606V733H605V732H603V733H601V732H598V733H593V732H591V733H585V732H582V733H580V732H579V733H573V734H572V733H571V732H566V733H565V732H564V733H563V734H562V733H555V732H552V733H551V732H549V733H548V732H545V733H536V734H535V732H534V733H532V732H531V733H527V732H526V733H524V732H523V733H522V732H521V733H520V732H519V733H513V732H511V733H510V732H509V733H507V732H502V733H501V732H499V733H497V732H495V733H492V732H491V733H481V732H478V733H477V732H475V733H473V732H472V733H470V732H468V733H467V732H465V733H462V732H460V733H455V732H454V733H450V734H449V733H448V732H447V734H446V733H444V732H440V733H439V732H438V733H434V732H433V733H432V732H429V733H428V732H425V734H424V732H423V733H421V734H420V732H419V733H418V732H417V733H411V732H410V733H408V732H406V734H405V732H404V733H401V732H400V733H399V732H398V734H397V732H394V733H393V732H391V733H389V732H387V733H386V732H385V733H384V732H381V733H378V732H376V733H375V732H372V733H369V732H368V733H367V732H366V733H364V732H363V733H361V732H360V734H359V733H357V732H355V733H353V732H352V733H350V732H347V733H343V732H342V733H341V732H340V733H335V732H334V733H333V732H332V733H329V732H324V733H321V732H318V733H316V732H313V733H304V732H300V733H297V732H294V733H293V732H291V733H289V732H288V733H287V734H286V733H282V732H281V733H280V732H279V733H277Z"/>
<path d="M277 758H278V759H280V758H281V759H283V758H284V759H289V758H290V759H301V758H302V759H303V758H304V759H306V758H307V759H313V758H315V759H316V758H318V759H323V757H324V759H328V758H329V759H333V758H334V759H341V758H343V759H345V758H346V759H347V758H348V759H350V758H351V759H356V758H357V759H362V758H364V759H365V758H366V759H370V758H371V759H372V758H373V759H385V758H389V759H391V758H392V759H395V758H396V759H397V758H398V759H401V758H402V759H404V758H405V759H407V758H408V759H410V758H411V759H414V757H415V759H416V758H417V759H418V757H419V758H420V759H424V758H425V759H430V758H431V759H432V758H433V759H440V758H441V759H450V758H451V759H453V758H454V759H463V758H465V759H475V758H477V759H478V758H481V759H487V758H488V759H492V758H493V759H494V758H495V759H498V758H502V759H505V758H506V759H507V758H508V759H513V758H514V759H515V758H516V759H525V758H526V759H533V758H534V759H540V758H541V757H542V758H543V759H547V758H548V759H552V758H554V759H558V758H559V759H562V757H563V759H565V758H566V759H567V758H568V759H581V758H582V759H583V758H584V759H585V758H588V759H592V758H593V759H604V758H605V759H606V758H607V759H609V758H610V757H611V758H612V759H614V758H615V759H617V758H618V759H624V758H626V759H628V758H629V759H631V758H633V759H635V758H636V759H638V758H639V759H643V758H644V759H648V758H649V759H650V758H651V759H652V758H653V759H656V758H661V759H662V758H663V759H664V758H665V759H672V758H674V759H682V758H683V759H685V758H686V759H687V758H688V759H691V758H692V759H697V758H698V759H701V758H702V759H703V758H706V759H707V757H708V758H709V759H712V758H718V759H721V758H723V759H724V758H725V759H728V758H729V759H733V757H734V758H736V759H741V758H744V759H745V758H746V759H747V758H748V759H750V758H751V759H755V758H756V759H758V758H759V759H764V758H765V759H766V758H767V759H773V758H774V759H775V758H776V759H778V758H779V759H784V758H785V759H789V758H790V759H791V758H792V759H799V758H800V759H801V758H802V759H807V758H808V759H823V758H824V759H826V758H828V759H834V758H836V759H839V758H841V759H851V758H852V759H859V758H860V759H861V758H862V759H875V758H877V759H878V758H879V759H880V758H881V759H883V758H884V759H886V758H887V759H889V758H890V759H896V758H897V759H900V758H902V759H903V758H904V759H906V758H909V759H911V758H915V759H917V758H918V759H929V758H930V759H939V758H941V759H944V758H945V759H951V758H953V759H954V758H955V759H957V758H959V759H964V758H966V759H971V758H972V759H973V758H974V759H983V758H985V759H991V758H992V759H993V758H995V759H996V758H997V759H1003V758H1004V759H1012V758H1013V759H1018V758H1019V759H1022V758H1023V759H1027V758H1028V759H1031V758H1032V759H1034V758H1036V759H1037V758H1038V759H1050V758H1052V759H1056V758H1057V759H1059V758H1060V759H1064V758H1065V759H1067V758H1068V759H1070V757H1071V759H1077V758H1078V759H1080V758H1081V759H1082V758H1084V759H1085V758H1086V759H1095V758H1098V759H1100V758H1101V759H1105V758H1108V759H1110V758H1111V759H1112V758H1113V759H1119V758H1120V759H1123V758H1124V759H1129V758H1131V759H1132V758H1133V759H1142V758H1144V759H1149V758H1150V759H1157V758H1158V759H1159V758H1160V759H1162V758H1164V757H1165V759H1182V758H1184V759H1191V758H1193V759H1196V758H1197V759H1202V758H1204V759H1205V758H1206V759H1210V758H1211V759H1213V758H1215V759H1222V758H1223V759H1226V758H1227V759H1232V758H1233V759H1239V758H1240V759H1255V758H1256V759H1261V758H1262V759H1263V758H1264V759H1272V758H1273V759H1274V758H1276V759H1278V758H1279V759H1283V758H1284V759H1289V758H1291V759H1299V758H1300V759H1302V758H1303V759H1304V758H1305V759H1308V758H1311V759H1321V758H1322V759H1325V757H1326V759H1328V758H1329V759H1333V758H1334V759H1336V758H1337V759H1339V758H1340V759H1356V758H1357V759H1358V758H1359V759H1363V758H1364V759H1365V758H1366V759H1367V758H1368V759H1370V758H1371V759H1380V758H1381V759H1382V758H1383V759H1385V758H1386V759H1390V758H1391V759H1394V758H1395V759H1399V758H1400V759H1402V763H1398V764H1396V763H1392V764H1391V763H1388V764H1387V763H1386V764H1384V763H1369V764H1368V763H1362V764H1360V763H1351V764H1349V763H1330V764H1329V763H1326V764H1325V763H1322V764H1321V763H1318V764H1317V763H1311V764H1310V763H1305V764H1304V763H1297V764H1296V763H1287V764H1286V763H1284V764H1283V763H1276V764H1275V765H1274V763H1272V764H1271V763H1259V764H1258V763H1252V764H1251V763H1240V764H1239V763H1220V764H1217V763H1208V764H1207V763H1199V764H1198V763H1191V764H1190V763H1185V764H1184V763H1175V765H1174V763H1165V764H1164V763H1154V764H1153V763H1151V764H1149V763H1145V764H1144V763H1138V764H1137V763H1136V764H1135V763H1130V764H1129V763H1127V764H1126V763H1111V764H1110V763H1108V764H1107V763H1091V764H1090V763H1083V764H1080V763H1056V764H1055V763H1036V764H1035V763H1019V764H1017V763H1002V765H1001V763H995V764H993V763H967V764H966V763H959V764H958V763H945V764H944V763H934V764H933V763H932V764H931V763H926V764H925V763H918V764H917V763H915V764H914V763H909V764H908V763H907V764H906V763H891V764H890V763H872V764H871V763H864V764H863V763H856V764H855V763H836V764H834V763H813V764H812V763H810V764H809V763H806V764H805V763H799V764H798V763H797V764H796V763H791V764H790V763H786V764H785V763H781V764H780V763H778V764H777V763H774V764H773V763H764V764H762V763H760V764H759V763H758V764H757V763H751V764H748V763H742V764H741V763H721V765H720V764H719V763H709V764H706V763H695V764H694V763H687V764H686V763H679V764H678V763H677V764H676V763H662V764H661V763H640V764H639V763H627V764H626V763H623V764H622V763H618V764H617V763H616V764H615V763H614V764H613V763H610V765H609V763H608V764H607V763H606V764H604V763H582V764H581V763H577V765H576V763H561V764H560V763H550V764H548V763H546V764H545V763H538V764H537V763H525V764H524V763H520V764H519V763H518V764H517V763H512V765H511V763H493V764H492V763H489V764H488V763H471V764H470V763H468V764H467V763H458V764H457V763H453V764H452V763H447V764H446V763H440V764H439V763H424V764H422V763H412V764H411V763H409V764H408V763H397V764H396V763H392V764H391V763H388V764H387V763H379V764H378V763H371V764H370V763H367V764H366V763H363V764H362V763H357V764H356V763H352V764H351V763H345V764H344V763H328V764H327V763H322V764H320V763H308V764H307V763H305V764H304V763H301V764H300V763H298V764H297V763H289V764H288V763H287V764H286V763H277Z"/>
<path d="M277 790H278V789H280V790H281V789H284V790H286V789H287V790H289V789H290V790H294V789H300V790H301V789H303V790H305V789H306V790H307V789H310V790H311V789H312V790H313V789H314V790H315V789H318V790H319V789H321V790H323V789H329V790H330V789H333V790H335V789H338V790H340V789H342V790H344V789H348V788H349V789H350V790H351V789H352V790H353V789H354V790H356V789H363V790H365V789H368V790H371V789H372V788H373V789H374V790H375V789H376V790H377V789H380V790H381V789H383V790H384V789H386V790H387V789H388V790H390V789H394V790H395V789H397V790H398V789H401V790H402V789H403V790H404V789H407V790H408V789H409V790H410V789H413V790H417V789H419V790H420V789H424V790H426V789H430V790H431V789H432V790H435V789H437V788H438V790H439V789H440V790H442V789H443V790H445V789H447V790H448V789H454V790H455V789H458V790H460V789H462V790H463V789H467V790H469V789H470V790H472V789H475V790H477V789H481V788H482V789H483V788H484V789H486V790H487V789H491V790H492V789H493V790H495V789H496V790H499V789H503V790H506V789H507V790H509V789H510V790H513V789H515V790H517V789H518V790H519V789H520V790H524V789H527V790H528V789H529V790H531V789H537V790H538V789H539V788H540V789H542V790H543V789H548V790H549V789H550V790H551V789H552V790H553V789H555V790H557V789H558V788H559V790H560V789H562V790H564V789H566V788H567V789H568V790H570V789H571V790H574V789H576V790H577V789H578V790H579V789H580V790H582V789H587V790H588V789H590V790H591V789H593V790H594V789H597V788H598V790H602V789H607V790H610V789H613V790H614V788H615V790H616V789H618V790H624V789H625V790H627V789H629V790H631V789H632V790H633V789H634V790H637V789H640V790H642V789H645V790H647V789H651V788H652V789H653V790H654V789H656V790H658V789H661V790H664V789H665V790H666V789H667V790H671V789H672V790H674V789H681V790H685V789H687V790H688V789H690V790H691V789H693V790H694V789H695V790H697V789H699V790H701V789H702V790H703V789H704V790H708V789H711V790H712V789H713V790H714V789H717V790H718V789H719V790H720V789H722V790H724V789H725V790H726V789H730V790H731V789H733V790H734V789H736V790H738V789H740V788H742V789H746V790H747V789H749V790H750V789H755V790H759V789H761V790H762V788H763V789H765V790H766V789H768V790H769V789H772V790H774V789H775V790H778V788H779V789H784V790H786V789H789V790H791V789H793V790H797V789H798V790H799V789H801V790H802V789H803V790H805V789H808V790H810V789H811V790H813V789H815V790H824V789H825V790H828V789H829V790H831V789H832V790H833V789H834V790H835V789H840V790H841V789H842V790H843V789H844V788H845V790H846V789H847V790H848V789H849V790H851V789H852V790H853V789H855V790H856V789H857V790H858V789H859V790H861V788H862V789H863V790H864V789H866V790H867V789H868V790H869V789H872V790H873V789H876V790H880V789H887V790H888V789H889V790H891V789H892V790H893V789H894V790H898V789H899V790H900V789H903V790H906V789H909V790H912V789H913V790H918V789H920V790H921V789H925V788H926V790H929V789H931V790H932V789H942V790H944V789H946V790H947V789H948V790H950V789H952V790H953V789H954V790H962V789H964V790H965V789H968V790H969V789H971V790H972V789H975V790H978V789H979V790H980V789H982V790H983V789H986V790H987V789H989V790H991V788H992V789H996V790H998V789H1002V790H1003V789H1004V790H1007V789H1011V790H1014V789H1015V790H1017V789H1018V790H1019V789H1022V790H1025V789H1026V790H1027V789H1029V790H1031V789H1034V790H1035V789H1039V790H1040V789H1043V790H1044V789H1045V790H1048V789H1049V790H1050V789H1051V790H1053V789H1054V790H1056V789H1057V790H1059V789H1062V790H1064V789H1065V790H1066V789H1070V790H1071V789H1074V790H1079V789H1080V790H1082V789H1084V790H1085V789H1087V790H1088V789H1089V790H1091V789H1092V790H1093V789H1094V790H1095V789H1096V790H1097V789H1098V790H1100V789H1101V790H1103V789H1104V790H1105V789H1106V790H1109V788H1110V789H1111V790H1112V789H1116V790H1119V789H1120V790H1122V789H1124V790H1126V789H1128V790H1129V789H1130V790H1131V788H1132V790H1134V789H1135V790H1136V789H1137V790H1138V789H1139V790H1140V789H1141V790H1142V789H1143V790H1149V789H1152V790H1154V789H1155V790H1156V789H1157V790H1158V789H1159V790H1162V789H1164V790H1165V788H1166V790H1168V789H1169V790H1170V789H1172V790H1173V789H1176V790H1179V789H1181V790H1184V789H1185V790H1188V789H1194V788H1195V790H1199V789H1201V790H1203V789H1204V790H1210V789H1215V790H1219V789H1221V790H1222V789H1225V790H1227V789H1228V790H1229V789H1234V790H1235V789H1241V790H1243V789H1244V790H1245V789H1247V790H1248V789H1249V790H1252V789H1253V788H1254V790H1255V789H1256V790H1260V789H1263V790H1264V789H1265V790H1266V789H1268V790H1269V789H1270V790H1274V789H1275V790H1276V789H1278V790H1279V789H1282V790H1283V789H1287V790H1288V789H1291V790H1293V789H1295V788H1296V790H1300V789H1301V790H1302V789H1303V790H1304V789H1305V790H1306V789H1309V790H1313V789H1314V788H1315V789H1316V790H1317V789H1318V788H1319V789H1320V790H1321V789H1324V790H1325V789H1327V790H1329V789H1330V790H1338V789H1341V790H1342V789H1344V790H1346V789H1347V788H1348V789H1350V790H1352V789H1356V790H1359V789H1363V790H1364V789H1367V790H1368V789H1371V790H1372V789H1373V790H1376V789H1377V790H1378V789H1381V790H1386V788H1387V789H1390V790H1392V789H1394V790H1398V789H1402V794H1400V793H1396V794H1395V793H1393V794H1392V793H1391V794H1390V793H1389V794H1387V793H1382V794H1379V793H1378V794H1377V793H1376V794H1374V793H1372V794H1370V793H1368V794H1367V793H1366V794H1364V793H1363V794H1361V793H1359V794H1358V793H1354V794H1351V793H1350V794H1348V793H1345V794H1343V793H1342V794H1340V793H1339V794H1338V793H1334V794H1333V793H1330V794H1328V793H1326V794H1325V793H1323V794H1321V793H1319V794H1318V795H1317V794H1315V793H1314V794H1311V793H1305V794H1303V793H1302V794H1300V793H1297V794H1296V793H1295V794H1294V793H1293V794H1292V793H1291V794H1290V793H1288V794H1285V793H1277V794H1276V793H1275V794H1272V793H1270V794H1267V793H1266V794H1265V793H1264V794H1263V793H1262V794H1261V793H1259V794H1258V793H1257V795H1256V794H1254V793H1247V794H1246V793H1245V794H1244V793H1238V794H1237V793H1235V794H1234V793H1229V794H1228V793H1227V794H1226V793H1225V794H1224V793H1220V794H1219V793H1218V794H1217V793H1216V794H1214V793H1212V794H1211V793H1208V794H1207V793H1206V794H1205V793H1195V794H1194V793H1192V794H1188V793H1187V794H1185V793H1182V794H1181V793H1180V794H1179V793H1176V794H1174V793H1171V794H1170V793H1168V794H1167V793H1165V794H1162V793H1158V794H1157V793H1155V794H1154V793H1153V794H1150V793H1149V794H1148V793H1147V794H1146V793H1144V794H1142V793H1141V794H1140V793H1139V794H1135V793H1130V794H1129V793H1126V794H1124V793H1123V794H1121V793H1120V794H1118V793H1109V794H1107V793H1106V794H1105V793H1104V794H1103V793H1102V794H1101V793H1098V795H1097V794H1096V793H1095V794H1093V793H1087V794H1085V793H1079V794H1077V793H1076V794H1074V793H1072V794H1071V793H1067V794H1066V793H1064V794H1062V793H1058V794H1057V793H1050V794H1049V793H1048V794H1047V793H1043V794H1041V793H1039V794H1036V793H1028V794H1027V793H1022V794H1018V793H1014V794H1012V793H1009V795H1008V793H1007V794H1006V793H1005V794H1003V793H995V794H994V793H992V794H989V793H987V794H985V793H983V794H982V793H981V794H980V793H977V794H976V793H972V794H970V793H968V794H966V793H956V794H955V793H953V794H952V793H948V794H946V793H943V794H942V793H939V794H938V793H933V794H931V793H930V794H928V793H927V794H926V793H921V794H920V793H918V794H917V793H913V794H912V793H910V794H908V793H907V794H906V793H905V794H902V793H898V794H897V793H896V794H895V793H894V794H892V793H891V794H890V793H887V794H885V793H884V794H883V793H882V794H881V793H880V794H878V793H876V794H875V793H874V794H873V793H872V794H871V793H870V794H869V793H866V794H865V793H859V794H858V793H857V794H856V793H853V794H851V793H848V794H847V793H846V794H845V793H840V794H839V793H836V794H834V793H833V794H832V793H824V794H822V793H821V794H820V793H815V794H814V793H810V794H808V793H803V794H802V793H800V794H799V793H796V794H793V793H792V794H791V793H789V794H788V793H784V794H783V793H782V794H781V793H779V794H776V793H775V794H774V793H771V794H770V793H765V794H764V793H762V794H761V793H759V794H758V793H756V794H755V793H754V794H753V793H752V794H751V793H748V794H746V793H745V794H743V793H740V794H739V793H738V794H736V793H729V794H728V793H727V794H726V793H725V794H724V793H723V794H722V793H719V794H718V793H716V794H715V795H714V793H712V794H709V793H707V794H706V793H704V794H701V793H700V794H697V793H695V794H691V793H690V794H689V793H688V794H687V793H686V794H685V793H684V794H683V793H682V794H681V793H679V794H678V793H677V794H675V793H672V795H671V794H669V793H668V794H667V793H663V794H662V793H660V794H657V793H655V794H653V793H651V794H649V793H648V794H647V793H645V794H644V793H643V794H639V793H637V794H635V793H630V794H628V793H623V794H622V793H619V794H617V793H613V794H611V793H609V794H607V793H603V794H602V793H598V794H597V793H596V794H595V793H593V794H591V793H585V794H582V793H580V794H579V793H574V794H573V793H572V794H570V793H569V794H568V793H566V794H564V793H563V794H562V793H560V794H559V793H557V794H556V793H555V794H553V793H552V794H546V793H545V794H543V793H539V794H538V793H537V794H534V793H531V794H529V793H528V794H527V793H526V794H525V793H523V794H522V793H518V794H517V793H516V794H514V793H513V794H512V793H509V794H506V793H505V794H502V793H501V794H500V793H499V794H498V793H497V794H496V793H492V794H489V793H486V794H485V793H483V794H482V793H481V794H479V793H476V794H475V793H474V794H473V793H470V794H469V793H466V794H465V793H462V794H461V793H459V794H457V793H454V794H453V793H451V794H450V793H440V794H439V793H438V794H437V793H435V794H433V793H430V794H429V793H427V794H426V793H423V794H421V793H411V795H410V793H407V794H405V793H404V794H403V793H399V794H398V793H396V794H395V793H390V794H388V793H385V794H384V793H382V794H381V793H376V794H375V793H373V794H371V793H370V794H368V793H365V794H364V793H363V794H362V793H359V794H358V793H352V794H351V793H347V794H345V793H344V794H343V793H338V794H337V793H334V794H332V793H327V794H325V793H324V794H321V793H320V794H319V793H318V794H316V793H310V794H309V793H298V794H295V795H294V793H293V794H292V793H289V794H288V793H279V794H278V793H277Z"/>
<path d="M277 820H278V819H279V820H280V819H281V820H282V819H284V820H287V819H288V820H293V819H294V820H295V819H296V820H307V819H309V820H310V819H311V820H314V819H316V820H328V819H329V820H333V819H334V820H343V819H344V820H348V819H350V820H352V819H353V820H359V819H361V820H364V819H365V820H367V819H368V820H382V819H386V820H388V819H389V820H391V819H392V820H396V819H397V820H399V819H402V820H404V819H405V820H408V819H410V820H426V819H427V820H432V819H433V820H445V819H446V820H447V819H448V820H450V819H451V820H452V819H453V820H454V819H455V820H458V819H459V820H464V819H465V820H469V819H470V820H472V819H473V820H475V819H476V820H481V819H482V820H485V819H486V820H487V819H488V820H489V819H491V820H493V819H496V820H497V819H500V820H505V819H507V820H508V819H509V820H516V819H517V820H522V819H523V820H524V818H525V820H526V819H527V820H529V819H530V820H531V819H532V820H534V819H536V820H538V819H541V820H542V819H543V820H546V819H549V820H551V819H552V820H558V819H559V820H563V819H565V820H569V819H570V820H576V819H578V820H581V819H582V820H583V819H585V820H589V819H590V820H594V819H596V820H597V819H598V820H602V818H603V820H605V819H606V820H608V819H609V820H611V818H612V820H614V819H615V820H617V819H618V820H624V819H625V820H628V819H629V820H638V819H639V820H642V819H644V820H650V818H651V819H652V820H667V819H668V820H669V819H671V820H673V819H674V820H677V819H678V820H680V819H682V820H686V819H688V820H690V819H692V820H694V819H695V820H698V819H699V820H700V819H702V820H703V819H704V820H705V819H706V820H708V819H711V820H712V819H713V820H716V819H717V820H719V819H720V820H721V819H723V820H733V819H735V820H737V819H738V820H743V819H745V820H746V819H747V820H751V819H752V818H753V819H755V820H756V819H757V820H763V819H764V820H765V819H768V820H770V818H771V819H772V820H773V819H776V818H777V819H779V820H780V819H782V820H790V819H791V820H795V819H796V820H801V819H802V820H806V819H809V820H810V819H812V820H814V819H815V820H818V819H820V820H822V819H825V820H832V819H835V820H836V819H838V820H839V819H840V820H843V819H844V815H845V819H846V820H848V819H849V820H851V819H852V820H853V819H854V820H856V819H859V820H865V819H867V820H874V819H875V820H884V819H885V820H886V819H887V818H888V820H899V819H900V820H901V819H902V820H903V819H904V820H906V819H907V820H911V819H912V820H915V819H917V820H919V819H920V820H925V819H926V820H927V819H929V820H931V819H932V820H934V819H936V820H938V819H939V820H941V819H943V820H945V819H946V820H954V819H955V820H958V819H959V820H961V819H962V820H965V819H967V820H971V819H974V820H975V819H977V820H979V819H980V820H982V819H983V820H985V819H987V820H997V819H998V820H1002V819H1003V820H1006V819H1007V820H1011V819H1013V820H1016V818H1017V820H1018V819H1020V820H1021V819H1022V820H1026V819H1027V820H1028V819H1030V820H1031V819H1032V820H1034V819H1035V820H1036V819H1037V820H1041V819H1044V820H1045V819H1046V820H1052V819H1053V820H1055V819H1056V818H1057V820H1064V819H1066V820H1071V819H1073V820H1081V819H1082V820H1084V819H1085V820H1086V819H1089V820H1092V819H1093V820H1094V819H1095V820H1096V819H1097V820H1098V819H1100V820H1102V819H1103V820H1106V819H1107V820H1109V819H1110V820H1111V819H1114V820H1115V819H1116V820H1119V819H1120V818H1121V820H1126V819H1127V820H1128V819H1132V818H1133V820H1135V819H1136V820H1138V819H1140V820H1141V819H1142V820H1143V819H1144V820H1150V819H1151V820H1152V819H1153V820H1160V819H1161V820H1163V819H1164V820H1170V819H1172V820H1174V819H1175V818H1176V820H1177V819H1178V820H1179V819H1180V820H1181V819H1182V820H1183V819H1184V820H1187V819H1188V820H1191V819H1192V820H1194V819H1195V820H1196V819H1198V820H1202V819H1203V820H1205V819H1206V820H1209V819H1210V820H1211V819H1212V820H1219V819H1220V820H1223V819H1224V820H1225V819H1226V820H1229V819H1230V820H1231V819H1233V820H1235V819H1236V820H1239V819H1240V820H1241V819H1242V820H1244V819H1246V820H1247V819H1249V818H1250V820H1252V819H1253V820H1256V819H1257V820H1260V819H1261V820H1262V819H1265V820H1271V819H1272V820H1273V819H1274V820H1276V819H1277V820H1283V819H1284V820H1285V819H1286V820H1295V819H1297V820H1302V819H1304V820H1305V819H1306V820H1310V819H1311V820H1314V819H1316V820H1323V819H1324V820H1328V819H1329V820H1330V819H1331V820H1334V819H1335V820H1341V819H1342V820H1343V819H1344V820H1356V819H1357V820H1358V819H1359V820H1360V819H1361V820H1382V819H1385V820H1391V819H1392V820H1397V819H1399V820H1400V819H1401V820H1402V823H1401V824H1399V823H1398V824H1397V823H1396V824H1395V823H1392V825H1391V823H1390V825H1389V824H1387V823H1381V824H1380V823H1379V824H1378V823H1377V825H1376V824H1374V823H1373V824H1372V825H1371V824H1370V823H1365V824H1364V823H1360V824H1359V823H1358V824H1357V823H1345V824H1342V823H1341V824H1340V823H1338V824H1337V823H1335V824H1333V823H1330V824H1327V823H1326V824H1322V823H1319V824H1314V823H1312V824H1311V823H1309V824H1306V823H1302V824H1300V823H1297V824H1293V823H1292V824H1290V823H1288V824H1285V823H1284V824H1283V823H1281V824H1280V823H1279V824H1278V823H1275V824H1270V823H1268V824H1267V823H1266V824H1265V823H1263V824H1262V823H1261V824H1260V823H1258V825H1257V823H1256V824H1253V823H1252V824H1248V823H1247V824H1246V823H1243V824H1241V823H1240V824H1238V823H1236V824H1234V823H1233V824H1232V823H1228V824H1227V823H1225V824H1224V823H1220V824H1219V823H1218V825H1217V824H1216V823H1215V824H1214V823H1212V824H1211V823H1210V824H1209V823H1208V824H1205V823H1203V824H1201V823H1200V825H1199V824H1198V825H1197V823H1196V824H1195V823H1193V824H1190V823H1186V824H1184V823H1182V824H1181V823H1174V824H1172V823H1169V824H1167V823H1166V824H1165V823H1163V824H1161V823H1160V824H1158V823H1157V824H1156V823H1155V824H1153V823H1148V824H1139V823H1136V824H1133V823H1129V824H1128V823H1127V824H1126V823H1121V824H1120V823H1118V824H1117V823H1114V824H1113V823H1111V824H1109V823H1108V824H1107V825H1106V824H1105V823H1103V824H1102V823H1100V824H1099V823H1097V824H1096V823H1093V824H1091V823H1090V824H1089V823H1088V824H1087V823H1084V824H1082V823H1081V824H1080V823H1077V824H1076V825H1075V824H1073V823H1072V824H1070V823H1068V824H1067V823H1066V824H1064V823H1063V824H1062V823H1060V824H1058V823H1056V824H1055V823H1054V824H1053V823H1049V824H1047V823H1040V824H1039V823H1035V824H1028V823H1027V824H1025V823H1024V824H1023V823H1022V824H1020V823H1016V824H1015V823H1014V824H1013V825H1012V823H1011V824H1010V823H1007V824H1006V823H1003V824H1002V823H1001V824H1000V823H998V824H997V825H996V823H995V824H994V823H993V824H992V825H991V823H990V825H989V823H988V824H983V823H979V824H978V823H976V824H975V823H973V824H972V823H971V824H970V823H969V824H968V823H967V824H966V823H965V824H964V823H962V824H961V823H960V824H959V823H958V824H955V823H954V824H953V823H949V824H948V823H943V824H938V823H936V824H935V823H934V824H932V823H931V824H930V823H928V824H925V823H924V824H923V823H922V824H919V823H917V824H916V823H915V824H914V823H912V824H906V823H905V824H903V823H902V824H901V823H900V824H899V823H895V824H894V823H893V824H891V823H890V824H889V823H888V824H885V823H884V824H880V823H879V824H875V823H874V824H873V823H871V824H868V823H866V824H865V823H864V824H862V823H859V824H858V823H857V824H855V823H854V824H852V823H848V824H846V825H845V829H844V825H843V824H842V823H840V824H838V823H836V824H833V823H832V824H831V823H828V824H827V823H826V824H825V823H821V824H820V823H818V824H817V823H814V824H813V823H812V824H811V823H809V824H804V823H799V824H798V823H795V824H793V823H791V824H790V823H788V824H787V823H781V824H778V823H776V824H771V823H770V825H769V823H768V824H766V823H763V824H761V823H760V824H759V823H757V824H756V823H753V824H751V823H748V824H747V823H745V825H744V823H743V824H742V823H739V824H738V823H737V824H735V823H734V824H732V823H730V824H729V823H728V824H721V823H719V824H718V823H716V825H715V823H714V824H713V823H710V824H708V823H707V824H705V823H704V824H702V823H701V824H697V823H692V824H691V823H688V824H686V823H685V824H684V823H683V824H682V823H677V824H672V823H671V824H668V823H667V824H665V823H664V824H663V823H660V824H659V823H655V824H653V823H651V824H650V823H649V824H647V823H646V824H645V823H643V824H642V823H641V824H640V823H639V824H635V823H634V825H633V823H631V824H630V823H626V824H624V823H622V825H621V824H620V823H619V824H617V823H616V824H614V823H610V824H608V823H606V824H604V823H603V824H602V823H601V824H599V823H598V824H597V823H596V824H592V823H591V824H590V823H589V824H588V823H583V824H581V823H572V824H570V823H569V824H567V823H566V824H565V823H557V824H556V825H555V823H554V824H553V823H552V824H551V823H550V824H548V823H545V824H544V823H541V824H540V823H533V824H532V823H531V824H530V823H529V824H528V823H527V824H525V823H524V824H523V823H522V824H519V823H518V824H515V823H514V824H513V823H507V824H506V823H505V824H502V823H500V824H499V823H498V824H496V823H492V824H491V823H487V824H486V823H485V824H484V823H480V824H479V823H478V824H475V823H472V824H471V823H470V824H469V823H467V825H466V823H463V824H462V823H461V824H460V823H458V824H456V823H454V824H451V823H450V824H449V823H446V824H445V823H444V824H443V825H442V824H441V823H440V824H437V823H434V824H433V823H431V824H430V823H429V824H428V823H426V824H425V823H423V824H422V823H420V824H419V823H417V824H415V823H409V824H408V823H406V824H404V823H403V825H402V823H401V824H400V823H399V825H398V823H397V824H395V825H394V824H393V823H388V824H386V823H385V824H384V825H383V824H382V823H380V824H379V823H377V824H376V823H375V824H373V823H372V824H371V823H370V824H369V823H367V825H366V823H356V824H354V823H353V824H350V823H347V824H346V823H344V824H343V823H342V824H341V823H340V824H338V823H336V824H334V823H333V824H331V825H330V823H329V824H328V825H327V824H326V823H325V824H324V823H323V824H321V823H314V824H313V823H312V824H311V823H310V824H305V823H303V824H302V823H301V824H299V823H298V824H297V825H296V823H294V824H293V823H292V824H291V823H290V824H289V823H288V824H287V823H286V824H284V823H283V824H278V823H277Z"/>
<path d="M277 850H291V849H292V850H302V849H303V848H304V849H305V850H306V849H307V850H313V849H315V850H335V849H336V850H348V849H349V850H351V849H352V850H353V849H355V850H403V849H404V850H412V849H413V850H415V849H416V850H423V849H424V850H472V849H473V850H486V848H487V850H489V849H490V850H524V849H525V850H529V849H530V850H531V849H532V850H534V849H535V850H541V849H542V850H543V849H545V850H558V849H559V850H566V849H568V850H577V849H578V850H586V849H587V850H592V849H594V850H595V849H596V850H605V849H606V850H607V849H608V850H613V849H614V850H624V849H625V850H644V849H645V850H650V849H651V850H667V849H668V850H670V847H671V850H672V849H673V850H679V849H680V850H684V849H685V850H687V849H689V850H694V849H695V850H704V849H705V850H718V849H719V850H731V849H732V850H745V849H746V850H756V847H757V849H758V850H759V849H760V850H769V849H770V850H772V849H773V850H778V849H780V850H784V849H785V850H792V849H793V850H800V849H801V850H804V849H805V850H806V849H807V850H813V849H814V850H843V849H844V850H846V849H847V850H850V849H851V850H856V849H857V850H862V849H864V850H870V849H871V850H875V849H876V850H886V849H887V850H892V849H893V850H902V848H903V850H911V849H912V850H924V849H925V850H937V849H938V850H940V849H941V850H943V849H945V850H950V849H951V850H961V849H962V850H963V849H964V850H969V848H970V850H975V849H976V850H986V849H988V850H1001V848H1002V850H1019V849H1020V850H1022V849H1023V850H1029V849H1031V850H1035V849H1036V850H1040V847H1041V849H1042V850H1043V849H1045V850H1046V849H1047V850H1051V849H1052V850H1079V849H1080V850H1083V849H1084V850H1097V849H1099V850H1100V849H1102V850H1107V849H1108V850H1113V849H1114V850H1132V849H1133V850H1135V849H1136V850H1141V849H1142V850H1157V849H1158V850H1174V848H1175V849H1176V850H1180V849H1181V850H1183V849H1184V850H1189V849H1190V850H1209V849H1210V850H1213V849H1214V850H1215V849H1217V850H1226V849H1227V850H1231V849H1232V850H1240V849H1243V850H1248V849H1249V850H1250V849H1251V850H1253V849H1254V850H1255V849H1257V850H1259V849H1260V850H1273V849H1274V850H1282V849H1283V850H1293V849H1294V850H1300V849H1301V850H1306V849H1307V850H1311V849H1312V850H1314V848H1316V846H1317V848H1318V847H1319V843H1320V840H1321V834H1322V837H1323V835H1324V838H1325V832H1326V816H1327V843H1328V835H1329V845H1330V844H1331V847H1332V845H1333V839H1334V841H1335V842H1336V848H1337V850H1338V849H1339V848H1342V847H1343V846H1344V849H1345V850H1346V849H1347V850H1348V849H1349V850H1351V849H1352V846H1353V849H1354V850H1355V849H1356V846H1357V849H1358V850H1364V849H1366V848H1367V847H1368V848H1369V847H1370V849H1371V847H1372V849H1373V847H1374V849H1375V848H1376V849H1377V847H1378V848H1379V849H1380V850H1391V849H1392V850H1395V849H1396V850H1402V854H1396V855H1395V854H1389V855H1388V854H1386V855H1385V854H1382V855H1381V854H1379V856H1375V855H1374V854H1373V856H1372V857H1370V855H1369V856H1368V855H1366V854H1365V855H1364V854H1358V855H1357V858H1356V855H1355V854H1354V855H1353V858H1352V855H1351V854H1345V855H1344V856H1343V855H1342V854H1341V856H1340V857H1339V854H1338V855H1337V858H1336V863H1335V861H1333V859H1332V857H1331V860H1330V863H1329V872H1328V865H1327V880H1326V872H1325V870H1324V866H1323V863H1322V867H1321V861H1320V862H1319V857H1317V859H1316V856H1315V855H1314V854H1308V855H1307V854H1300V855H1299V854H1298V855H1297V854H1291V855H1290V854H1284V855H1283V854H1281V855H1280V854H1278V855H1277V854H1272V855H1271V854H1251V855H1250V854H1248V855H1247V854H1242V855H1240V854H1237V855H1236V854H1228V855H1227V854H1218V855H1217V854H1214V855H1213V854H1198V855H1197V854H1189V855H1188V854H1180V855H1179V854H1167V855H1166V854H1158V855H1157V854H1145V855H1144V854H1142V855H1141V854H1126V855H1125V854H1098V855H1097V854H1091V855H1090V854H1085V855H1084V854H1052V855H1051V854H1041V857H1040V855H1039V854H1036V855H1035V854H1033V855H1032V854H1023V856H1022V854H1017V855H1016V854H1013V856H1012V855H1011V854H1009V855H1008V854H1007V855H1006V854H999V855H998V854H996V855H995V854H987V855H986V854H983V855H981V854H979V855H978V854H967V855H966V854H956V855H955V854H954V855H953V854H948V855H947V854H942V855H941V854H936V855H935V854H923V855H922V854H895V855H894V854H848V855H847V854H846V855H844V854H834V855H833V854H795V855H794V854H792V855H791V854H790V855H789V854H788V855H787V854H786V855H785V854H781V855H780V854H757V857H756V854H729V855H728V854H727V855H726V854H725V855H724V854H723V855H722V854H716V855H715V854H708V855H707V854H703V855H702V854H701V855H699V854H698V855H697V854H685V855H684V854H671V857H670V854H663V855H662V854H657V855H656V854H645V855H644V854H640V855H639V854H630V855H629V854H609V855H608V854H582V856H581V854H567V855H566V854H562V855H561V854H560V855H557V854H547V855H545V854H543V855H542V854H537V855H536V854H527V855H526V854H523V855H522V854H516V855H515V854H507V855H506V854H501V855H500V854H496V855H495V854H492V855H490V854H488V855H487V854H471V855H470V854H467V855H466V856H465V854H463V855H462V854H445V855H444V854H424V855H422V854H407V855H406V854H404V855H403V854H402V855H400V854H396V855H395V854H380V855H379V854H372V855H370V854H350V855H348V854H345V855H344V854H336V855H334V854H326V855H324V854H321V855H320V854H319V855H318V854H305V855H304V854H301V856H300V854H293V855H292V854H284V855H283V854H282V855H280V854H277Z"/>
<path d="M277 880H279V879H280V880H281V877H282V880H283V877H285V879H287V878H288V880H290V879H291V880H293V877H294V875H296V878H297V880H300V878H303V874H305V876H306V874H307V878H308V874H309V875H310V877H311V871H312V877H314V874H315V878H316V872H317V877H318V875H319V876H320V875H321V874H322V877H323V876H324V879H326V881H327V880H328V881H329V880H330V879H332V877H333V879H336V880H337V878H339V880H340V879H341V881H344V880H346V881H347V880H349V881H351V880H353V881H355V880H361V881H366V880H369V881H372V880H373V881H375V880H376V881H377V880H378V881H379V880H381V881H384V880H388V881H389V880H390V881H397V880H398V881H399V880H400V881H401V880H405V881H406V880H408V881H410V880H412V881H413V880H418V881H421V880H422V881H423V880H424V881H425V880H428V881H430V880H434V879H435V880H438V881H440V879H441V881H442V879H443V880H444V881H445V880H446V881H448V880H450V881H451V880H454V881H455V880H457V881H468V879H469V881H470V880H471V881H472V880H480V881H485V880H486V881H487V880H490V881H493V879H494V880H496V881H497V880H502V881H503V880H505V881H506V880H507V881H508V880H509V879H510V880H515V881H517V880H520V881H522V880H524V881H525V879H526V881H531V880H534V881H539V880H542V881H544V880H545V881H546V880H547V881H548V880H549V881H550V880H553V881H555V880H558V881H559V880H560V881H561V880H563V881H564V880H566V881H568V880H569V881H573V880H577V881H579V880H580V881H581V880H582V881H584V880H586V881H587V880H588V881H592V880H598V881H599V880H602V881H604V880H610V881H612V880H620V881H621V880H626V881H627V880H628V881H629V880H633V881H634V880H635V881H636V880H639V881H641V880H643V879H644V880H650V881H652V880H658V881H659V880H660V881H661V880H665V881H666V880H667V879H668V880H670V881H671V880H675V881H677V880H683V879H684V880H686V881H688V880H689V881H690V880H692V881H694V880H700V881H705V880H706V881H707V880H711V881H712V880H713V881H714V880H718V881H721V880H722V881H725V880H726V881H727V880H728V881H733V880H734V881H735V880H737V881H739V880H740V881H741V880H742V881H743V880H744V881H745V880H746V881H748V880H750V881H751V880H752V881H753V880H759V881H762V880H763V879H764V881H766V880H767V881H769V880H776V881H779V880H781V881H782V880H784V881H785V880H786V881H788V880H790V881H793V880H794V881H795V879H796V880H798V881H799V880H800V881H801V880H804V881H805V880H807V881H808V880H811V879H812V874H813V878H814V880H815V881H816V880H820V881H821V880H823V879H824V880H825V881H827V880H828V881H829V880H830V881H831V880H832V881H833V880H834V879H835V874H836V878H837V880H838V881H841V880H845V881H854V880H858V881H860V880H861V881H862V880H864V881H865V880H866V881H867V880H869V881H872V880H878V881H879V880H880V881H881V880H882V881H883V880H885V881H886V880H887V881H888V880H889V881H890V880H894V881H901V880H902V881H903V880H904V881H905V880H906V881H907V880H910V881H912V880H916V881H917V880H918V881H920V880H922V881H923V880H924V881H925V880H926V881H928V880H929V881H931V880H933V879H934V880H935V881H936V880H938V881H939V880H941V881H942V880H943V881H944V880H945V881H946V880H947V881H949V880H951V881H954V880H960V881H961V880H962V881H965V880H968V881H969V880H971V881H972V880H973V881H974V880H977V881H979V880H981V881H982V880H983V879H984V880H988V881H989V880H992V881H993V880H994V881H996V880H998V881H1003V880H1004V881H1007V880H1013V881H1015V880H1017V881H1019V880H1022V881H1025V880H1026V881H1027V880H1028V881H1030V880H1033V881H1034V879H1035V881H1036V880H1037V881H1038V880H1041V881H1043V880H1045V881H1051V880H1054V881H1055V880H1058V881H1059V880H1061V881H1064V880H1069V881H1071V880H1073V881H1077V880H1078V881H1079V880H1080V881H1081V880H1088V881H1089V880H1092V881H1093V880H1101V879H1102V880H1105V881H1106V880H1107V881H1110V880H1111V881H1112V880H1113V881H1115V880H1116V879H1117V876H1118V879H1119V880H1120V881H1121V880H1123V881H1124V880H1125V881H1128V880H1129V881H1131V880H1134V881H1138V880H1140V881H1142V880H1144V881H1145V880H1147V881H1148V880H1151V881H1153V880H1155V881H1158V880H1159V881H1160V880H1167V881H1168V879H1169V880H1171V881H1172V880H1173V881H1174V880H1176V881H1177V880H1179V881H1180V880H1181V881H1182V880H1185V881H1187V880H1188V881H1189V880H1191V881H1192V880H1194V881H1195V880H1196V881H1197V880H1201V881H1202V880H1203V881H1205V880H1206V881H1207V880H1208V881H1210V880H1213V881H1214V880H1217V881H1222V880H1227V881H1229V880H1230V881H1231V880H1233V881H1236V880H1238V881H1239V880H1243V881H1245V880H1246V881H1247V880H1248V881H1249V880H1250V881H1252V880H1257V881H1258V880H1260V881H1261V880H1262V881H1265V880H1266V881H1267V880H1268V881H1269V880H1270V881H1271V880H1273V881H1274V880H1276V881H1278V880H1279V881H1280V880H1285V881H1286V880H1288V881H1289V880H1291V881H1293V880H1296V881H1297V880H1299V881H1300V880H1303V881H1304V880H1305V881H1306V880H1308V881H1312V880H1316V881H1317V880H1318V881H1320V880H1321V881H1322V880H1323V881H1324V880H1329V881H1331V880H1332V881H1333V880H1334V881H1336V880H1339V881H1340V880H1342V881H1347V880H1349V881H1350V880H1351V881H1354V880H1355V881H1356V880H1357V881H1358V880H1359V881H1364V880H1368V881H1371V880H1372V881H1375V880H1379V881H1381V880H1382V881H1383V880H1386V881H1387V880H1388V881H1389V880H1390V881H1392V880H1394V881H1395V880H1397V881H1399V880H1400V881H1401V880H1402V885H1401V884H1398V885H1395V884H1394V885H1393V884H1391V885H1390V884H1388V885H1387V884H1385V885H1384V884H1378V885H1376V884H1375V885H1374V884H1373V885H1372V884H1369V885H1368V884H1363V885H1361V884H1358V885H1355V884H1348V885H1347V884H1342V885H1341V884H1339V885H1336V884H1334V885H1331V886H1330V884H1328V885H1325V884H1324V885H1323V884H1322V885H1321V884H1314V885H1313V884H1312V885H1311V884H1308V885H1307V884H1305V885H1304V884H1303V885H1302V884H1301V885H1300V884H1298V885H1297V884H1295V885H1294V884H1293V885H1292V884H1285V885H1284V884H1283V885H1281V884H1280V885H1279V884H1275V885H1274V884H1273V885H1270V884H1268V885H1267V884H1265V885H1263V884H1260V885H1258V884H1257V885H1253V884H1247V885H1246V884H1245V885H1244V884H1243V885H1242V884H1241V885H1240V884H1236V885H1234V884H1231V885H1229V884H1227V885H1226V884H1225V885H1224V884H1216V885H1214V884H1208V885H1207V884H1202V885H1201V884H1200V885H1198V884H1191V885H1190V884H1189V885H1188V884H1187V885H1185V884H1183V885H1182V884H1177V885H1176V884H1175V885H1174V884H1173V885H1171V884H1169V885H1168V884H1166V885H1165V884H1163V885H1162V884H1148V885H1147V884H1142V885H1141V884H1140V885H1138V884H1136V885H1134V884H1133V885H1132V884H1131V885H1129V884H1126V885H1125V884H1124V885H1123V884H1119V885H1118V888H1117V885H1116V884H1112V885H1111V884H1109V885H1108V884H1107V885H1106V884H1102V885H1100V884H1099V885H1098V884H1097V885H1096V884H1089V885H1088V884H1087V885H1085V884H1083V885H1082V884H1073V885H1072V884H1071V885H1070V884H1069V885H1068V884H1067V885H1064V884H1051V885H1050V884H1041V886H1040V884H1036V885H1034V884H1032V885H1031V884H1024V885H1023V884H1018V885H1017V884H1015V885H1012V884H1009V885H1008V884H1002V885H1000V884H993V885H991V884H990V885H989V884H987V885H986V884H985V885H984V884H983V885H982V884H979V885H976V884H970V885H969V884H960V885H959V884H949V885H948V884H947V885H946V884H945V885H944V884H943V885H941V884H935V885H934V884H933V885H930V884H928V885H926V884H921V885H919V884H918V885H917V884H904V885H903V884H895V885H894V884H893V885H892V884H890V885H889V884H886V885H884V884H869V885H868V884H866V885H865V884H864V885H863V884H862V885H861V884H860V885H858V884H855V885H854V884H852V885H851V884H849V885H847V884H843V885H842V884H839V885H838V884H837V886H836V890H835V885H834V884H832V885H831V884H827V885H826V884H825V885H824V884H822V885H819V884H818V885H816V884H814V886H813V890H812V885H809V884H808V885H807V884H805V885H804V884H803V885H802V884H795V885H792V884H788V885H787V884H785V885H784V884H783V885H782V884H774V885H773V884H772V885H771V884H768V885H766V884H765V885H764V884H763V885H762V884H760V885H759V884H757V885H756V884H753V885H752V884H750V885H749V884H747V885H746V884H745V885H742V884H735V885H734V884H733V885H732V884H731V885H730V884H723V885H722V884H715V885H713V884H711V885H710V884H704V885H703V886H702V884H698V885H696V884H694V885H693V884H690V885H689V884H683V885H682V884H680V885H679V884H670V885H666V884H656V885H655V884H644V885H643V884H636V885H635V884H633V885H632V884H631V885H629V884H628V885H626V884H621V885H617V884H615V885H614V884H600V885H598V884H593V885H592V884H591V885H589V884H588V885H587V884H585V885H583V884H582V885H579V884H578V885H576V884H574V885H573V884H560V885H559V884H556V885H555V884H547V885H544V884H542V885H541V884H535V885H532V884H531V885H529V884H528V885H527V884H524V885H523V884H522V885H521V884H520V885H519V884H510V885H508V884H507V885H504V884H501V885H499V884H488V885H486V884H484V885H483V884H480V885H479V884H478V885H476V884H474V886H473V885H470V884H463V885H459V884H457V885H456V884H452V885H451V884H449V885H448V884H443V885H442V884H441V885H439V884H438V885H437V884H434V885H432V884H424V885H423V884H422V885H421V884H420V885H419V884H417V885H415V884H405V885H404V884H398V885H397V884H396V885H395V884H394V885H393V884H387V885H385V884H382V885H381V884H378V885H377V884H376V885H375V884H372V885H371V884H367V885H366V884H363V885H362V884H357V885H356V884H352V885H350V884H347V885H346V884H342V886H341V889H340V885H339V887H338V886H334V885H332V886H330V884H327V886H326V885H324V890H323V886H322V891H320V888H319V886H318V888H317V894H316V890H315V889H314V891H313V888H312V894H311V888H310V886H309V889H308V886H307V887H305V893H304V890H303V889H302V886H301V885H300V884H297V885H296V886H293V884H292V885H291V884H290V885H289V884H288V885H287V886H286V885H285V887H284V885H283V887H281V886H279V885H278V884H277Z"/>
<path d="M277 911H279V910H281V911H283V910H285V911H288V910H289V911H290V910H291V911H296V910H297V911H299V910H300V911H310V910H311V911H313V910H314V911H319V910H320V911H321V910H323V911H326V910H327V911H332V910H333V911H337V910H338V911H343V910H344V911H345V910H349V911H353V910H354V911H355V910H357V911H358V910H359V911H360V910H361V911H365V910H366V911H369V910H370V911H371V910H372V911H373V910H374V911H379V910H380V911H383V910H384V911H385V910H388V911H389V910H392V911H393V910H395V911H396V910H397V911H401V910H405V911H406V910H407V909H408V910H409V911H410V910H411V911H413V910H414V911H419V910H420V911H421V910H422V911H427V910H430V911H431V910H433V911H442V910H444V911H452V910H453V911H454V910H455V911H458V910H460V911H462V910H464V911H465V910H466V911H469V910H472V911H474V910H475V909H476V911H478V910H479V911H480V910H481V911H482V910H484V911H486V910H488V909H489V910H491V911H492V910H493V911H496V910H497V911H506V910H507V911H509V910H510V911H513V910H515V911H520V910H521V911H525V910H526V911H528V910H529V911H530V910H532V911H535V910H536V909H537V911H540V910H542V911H549V910H550V905H551V909H552V910H553V911H558V910H559V911H566V910H567V911H568V910H569V911H571V910H572V911H573V910H575V911H576V910H577V911H579V910H581V911H582V910H583V911H586V910H587V911H589V910H590V911H593V910H596V911H597V910H600V911H601V910H602V911H605V910H606V911H610V910H613V911H614V910H615V911H616V910H617V911H624V910H625V911H628V910H629V911H633V910H634V911H635V910H636V911H638V910H639V911H641V910H646V911H648V910H649V911H654V910H655V911H656V910H658V911H660V910H662V911H665V910H668V911H670V910H671V911H673V910H674V911H675V910H676V911H678V910H679V911H682V910H684V911H686V910H687V911H691V910H692V911H697V910H698V911H699V910H700V906H701V910H702V911H703V910H704V911H705V910H707V911H710V910H711V911H712V910H713V911H715V910H716V911H719V910H720V911H723V910H726V911H727V910H732V911H737V910H738V911H740V910H742V911H744V910H746V911H747V910H749V911H753V910H754V911H757V910H760V911H761V910H762V911H763V910H766V911H767V910H768V911H774V910H775V911H776V910H778V911H779V910H780V911H781V910H782V911H785V910H786V911H790V910H792V911H796V910H797V911H798V910H799V911H800V910H801V911H808V910H810V911H811V910H812V911H813V910H814V911H816V910H817V911H818V910H820V911H824V910H826V911H827V910H832V911H845V910H848V911H849V910H850V911H851V910H852V911H853V910H854V911H858V910H861V911H863V910H865V911H874V910H875V911H879V910H881V911H882V910H883V911H884V910H885V909H886V910H887V911H889V910H891V911H892V910H894V911H901V910H902V911H903V910H905V911H907V910H909V911H910V910H913V911H915V910H916V911H919V910H920V911H922V910H923V911H925V910H926V911H931V910H933V911H936V910H938V909H939V911H942V910H943V911H944V910H945V911H949V910H952V911H959V910H962V911H964V910H965V911H972V910H974V911H976V910H977V911H979V910H980V911H984V910H988V911H989V910H990V911H993V910H994V909H995V911H998V910H999V911H1002V909H1003V911H1006V910H1008V911H1018V910H1019V911H1021V910H1022V911H1023V910H1024V911H1031V909H1032V911H1035V910H1036V911H1037V910H1040V909H1043V910H1045V909H1047V910H1048V909H1049V910H1050V911H1053V910H1054V911H1055V910H1056V909H1057V910H1059V911H1060V910H1061V909H1064V911H1065V910H1068V909H1069V910H1070V909H1072V910H1075V911H1076V910H1077V909H1078V910H1082V911H1083V909H1084V910H1085V911H1086V910H1088V911H1089V910H1090V906H1091V910H1092V909H1093V910H1094V909H1095V910H1096V909H1097V910H1098V909H1099V910H1102V909H1104V910H1105V911H1106V909H1107V910H1108V911H1109V910H1112V911H1113V910H1114V909H1115V911H1118V910H1120V909H1121V911H1122V910H1123V911H1124V909H1125V911H1126V910H1128V911H1129V909H1130V911H1131V910H1133V911H1134V910H1135V911H1136V909H1138V910H1139V911H1140V909H1143V910H1146V909H1148V910H1149V911H1150V910H1151V909H1152V910H1153V911H1154V909H1155V910H1156V909H1160V910H1161V911H1162V909H1163V910H1164V909H1166V908H1167V910H1168V911H1169V910H1170V909H1172V910H1174V909H1175V911H1178V909H1179V910H1180V909H1181V911H1182V909H1183V910H1186V909H1188V910H1193V909H1194V910H1196V907H1197V910H1198V909H1199V910H1200V911H1202V909H1203V910H1206V909H1207V911H1208V910H1209V909H1210V910H1212V909H1213V910H1216V909H1217V910H1218V909H1219V911H1220V909H1222V911H1223V910H1225V909H1226V910H1230V911H1232V910H1237V909H1238V910H1240V911H1243V910H1247V911H1249V910H1252V911H1254V910H1255V911H1256V910H1257V911H1258V910H1261V911H1262V910H1267V911H1268V910H1271V911H1272V910H1274V911H1275V910H1278V911H1280V910H1281V911H1282V910H1283V911H1287V910H1288V911H1289V910H1290V911H1291V910H1292V911H1294V910H1295V911H1296V910H1298V911H1299V910H1303V911H1304V910H1307V911H1308V910H1309V911H1311V910H1313V911H1316V910H1317V911H1323V910H1324V911H1325V910H1326V911H1331V910H1332V911H1334V909H1335V911H1336V910H1337V911H1339V910H1340V911H1342V910H1344V911H1345V910H1346V911H1350V914H1348V915H1346V914H1345V915H1339V916H1338V914H1334V915H1333V914H1331V915H1330V914H1329V915H1328V914H1323V915H1321V914H1320V915H1318V914H1317V915H1314V914H1313V915H1312V914H1311V915H1310V914H1309V915H1306V914H1305V915H1302V914H1300V915H1299V916H1298V915H1294V916H1293V914H1292V915H1291V916H1290V915H1286V914H1285V916H1284V915H1280V916H1279V915H1278V916H1275V915H1273V916H1272V915H1270V914H1269V915H1268V916H1267V914H1266V916H1265V915H1263V914H1262V916H1261V915H1259V916H1258V914H1257V915H1253V916H1251V915H1250V916H1247V915H1246V916H1242V915H1241V914H1240V915H1239V916H1235V915H1233V917H1232V915H1231V917H1228V915H1226V916H1225V915H1223V917H1221V915H1219V917H1218V915H1217V916H1216V917H1215V916H1212V917H1209V915H1207V917H1205V915H1204V916H1203V917H1201V915H1198V916H1197V919H1196V916H1194V915H1193V916H1192V917H1191V915H1189V917H1188V916H1187V915H1186V917H1185V916H1184V915H1183V917H1182V915H1181V916H1180V915H1178V916H1176V915H1174V917H1169V916H1168V917H1167V918H1166V916H1163V915H1162V917H1161V916H1159V915H1158V916H1157V915H1156V917H1155V916H1154V915H1153V916H1152V915H1151V916H1150V915H1149V917H1148V916H1145V915H1143V916H1141V917H1140V916H1139V917H1138V916H1137V917H1136V915H1135V916H1133V915H1132V916H1130V915H1129V916H1128V917H1127V915H1126V916H1125V915H1124V916H1123V917H1122V916H1121V915H1120V916H1119V917H1117V915H1113V916H1110V915H1109V917H1108V916H1106V917H1105V915H1102V916H1099V917H1098V916H1096V917H1095V916H1092V917H1091V920H1090V916H1089V917H1085V916H1083V917H1081V915H1080V916H1079V915H1077V916H1076V915H1075V917H1074V916H1068V915H1067V916H1066V915H1065V917H1064V915H1063V916H1062V915H1060V917H1059V915H1058V916H1057V917H1056V915H1053V916H1052V917H1050V915H1048V916H1044V915H1043V916H1042V917H1041V916H1039V915H1036V916H1035V915H1031V914H1027V915H1025V914H1024V915H1023V914H1020V915H1019V914H1018V915H1016V914H1015V915H1013V914H1010V915H1008V914H1006V915H996V914H990V915H989V914H988V916H987V914H986V915H984V914H983V915H980V914H979V915H978V914H977V915H975V914H974V916H973V915H970V914H968V915H966V914H965V915H962V914H958V916H957V914H955V915H951V914H945V915H944V914H943V915H942V914H941V915H939V914H937V915H936V914H931V915H930V914H929V916H928V915H922V914H921V915H920V914H919V915H918V914H914V915H912V914H911V915H910V914H909V915H905V914H904V915H903V914H902V915H901V916H900V915H899V914H897V915H894V914H893V915H891V914H890V915H889V916H888V915H887V917H886V915H885V916H884V915H882V917H881V915H877V914H876V915H873V914H868V915H867V914H866V915H864V914H863V915H862V914H861V915H859V914H857V915H855V914H851V915H849V914H848V915H845V914H844V915H842V914H838V915H836V914H835V915H831V914H830V915H829V914H826V915H825V914H824V915H821V914H820V915H819V914H817V915H815V916H814V915H813V914H812V915H811V914H810V915H805V914H804V915H803V914H801V915H800V914H798V915H795V914H794V915H793V914H791V915H789V914H788V915H786V914H785V915H784V914H783V915H779V914H778V915H774V914H773V915H770V914H769V915H768V914H767V915H766V914H765V915H763V914H762V915H760V914H759V915H758V914H757V915H755V914H753V915H751V914H747V915H742V914H741V915H739V914H736V915H735V914H734V915H731V914H729V915H728V914H727V915H726V914H721V915H719V914H716V915H715V914H713V915H712V914H711V915H710V914H707V915H706V914H705V915H702V916H701V920H700V916H699V915H698V914H697V915H694V914H692V915H691V914H690V915H689V914H688V915H684V914H683V915H681V914H679V915H678V914H677V915H675V916H674V914H673V915H671V914H670V915H669V914H668V915H664V914H663V915H660V914H654V915H653V914H652V915H643V914H642V915H640V914H638V915H636V914H635V915H634V914H633V915H629V914H627V915H622V914H621V915H619V914H618V915H617V914H610V915H609V914H607V915H606V914H605V915H602V914H601V915H598V914H597V915H593V914H592V915H588V916H587V915H585V914H581V915H579V914H578V915H576V914H575V915H573V914H572V915H571V914H570V915H568V914H567V915H566V914H565V915H564V914H561V915H560V914H559V915H558V916H557V915H555V914H553V915H552V917H551V921H550V916H549V915H546V914H544V915H541V914H538V915H533V914H532V915H531V914H528V915H527V914H526V915H525V916H524V915H518V914H517V915H516V914H515V915H513V914H511V915H507V914H502V915H501V914H500V915H498V914H495V915H494V914H491V915H489V916H488V915H484V914H482V915H481V914H479V915H477V914H476V915H471V914H470V915H468V914H467V915H466V914H464V915H463V914H459V915H458V914H457V916H456V914H455V915H447V914H444V915H442V914H441V915H440V914H439V915H438V914H435V915H432V914H431V915H429V914H428V915H425V914H423V915H422V914H421V915H420V914H418V915H416V914H415V915H412V914H411V915H405V914H404V915H403V914H402V915H401V914H400V915H398V914H397V915H395V914H394V915H391V914H389V915H388V914H387V915H382V914H381V915H380V914H379V915H374V914H373V915H372V914H371V915H370V914H369V915H362V914H361V915H356V914H355V915H354V914H352V915H351V914H350V915H349V914H348V915H346V914H344V915H343V914H342V915H334V916H333V914H332V915H329V914H328V915H327V914H326V915H321V914H320V915H316V914H314V915H313V914H311V915H310V914H309V915H308V914H307V915H297V916H296V914H294V915H291V914H289V915H282V914H280V915H278V914H277Z"/>
</g>
<g font-family="Liberation Sans" font-size="13.33" fill="#000"><text x="352.5" y="177.8" text-anchor="middle">02</text><text x="352.5" y="960.3" text-anchor="middle">02</text><text x="427.4" y="177.8" text-anchor="middle">04</text><text x="427.4" y="960.3" text-anchor="middle">04</text><text x="502.3" y="177.8" text-anchor="middle">06</text><text x="502.3" y="960.3" text-anchor="middle">06</text><text x="577.3" y="177.8" text-anchor="middle">08</text><text x="577.3" y="960.3" text-anchor="middle">08</text><text x="652.2" y="177.8" text-anchor="middle">10</text><text x="652.2" y="960.3" text-anchor="middle">10</text><text x="727.1" y="177.8" text-anchor="middle">12</text><text x="727.1" y="960.3" text-anchor="middle">12</text><text x="802.0" y="177.8" text-anchor="middle">14</text><text x="802.0" y="960.3" text-anchor="middle">14</text><text x="876.9" y="177.8" text-anchor="middle">16</text><text x="876.9" y="960.3" text-anchor="middle">16</text><text x="951.9" y="177.8" text-anchor="middle">18</text><text x="951.9" y="960.3" text-anchor="middle">18</text><text x="1026.8" y="177.8" text-anchor="middle">20</text><text x="1026.8" y="960.3" text-anchor="middle">20</text><text x="1101.7" y="177.8" text-anchor="middle">22</text><text x="1101.7" y="960.3" text-anchor="middle">22</text><text x="1176.6" y="177.8" text-anchor="middle">24</text><text x="1176.6" y="960.3" text-anchor="middle">24</text><text x="1251.5" y="177.8" text-anchor="middle">26</text><text x="1251.5" y="960.3" text-anchor="middle">26</text><text x="1326.5" y="177.8" text-anchor="middle">28</text><text x="1326.5" y="960.3" text-anchor="middle">28</text><text x="1423.5" y="220.2" text-anchor="middle">0:30</text><text x="1423.5" y="250.2" text-anchor="middle">1:00</text><text x="1423.5" y="281.2" text-anchor="middle">1:30</text><text x="1423.5" y="311.2" text-anchor="middle">2:00</text><text x="1423.5" y="341.2" text-anchor="middle">2:30</text><text x="1423.5" y="372.2" text-anchor="middle">3:00</text><text x="1423.5" y="402.2" text-anchor="middle">3:30</text><text x="1423.5" y="432.2" text-anchor="middle">4:00</text><text x="1423.5" y="463.2" text-anchor="middle">4:30</text><text x="1423.5" y="493.2" text-anchor="middle">5:00</text><text x="1423.5" y="523.2" text-anchor="middle">5:30</text><text x="1423.5" y="554.2" text-anchor="middle">6:00</text><text x="1423.5" y="584.2" text-anchor="middle">6:30</text><text x="1423.5" y="614.2" text-anchor="middle">7:00</text><text x="1423.5" y="645.2" text-anchor="middle">7:30</text><text x="1423.5" y="675.2" text-anchor="middle">8:00</text><text x="1423.5" y="705.2" text-anchor="middle">8:30</text><text x="1423.5" y="736.2" text-anchor="middle">9:00</text><text x="1423.5" y="766.2" text-anchor="middle">9:30</text><text x="1423.5" y="796.2" text-anchor="middle">10:00</text><text x="1423.5" y="827.2" text-anchor="middle">10:30</text><text x="1423.5" y="857.2" text-anchor="middle">11:00</text><text x="1423.5" y="887.2" text-anchor="middle">11:30</text><text x="1423.5" y="918.2" text-anchor="middle">12:00</text></g>
<text x="1405" y="192" font-family="Liberation Sans" font-size="18" fill="#ff0000">UTC</text>
<text x="839.5" y="141.5" font-family="Liberation Sans" font-size="21.45" text-anchor="middle" fill="#000">Séismographe QCQ (CGC/GSC)</text>
<text font-family="Liberation Sans" font-size="16.05" fill="#000"><tspan x="277" y="120.7">Département de géologie et de génie géologique</tspan><tspan x="277" y="139.7">Faculté des sciences et de génie</tspan><tspan x="277" y="158.7">Université Laval</tspan></text>
<text x="839.5" y="1001" font-family="Liberation Sans" font-size="18" text-anchor="middle" fill="#000">Minutes écoulées</text>
</svg>
</body></html>
